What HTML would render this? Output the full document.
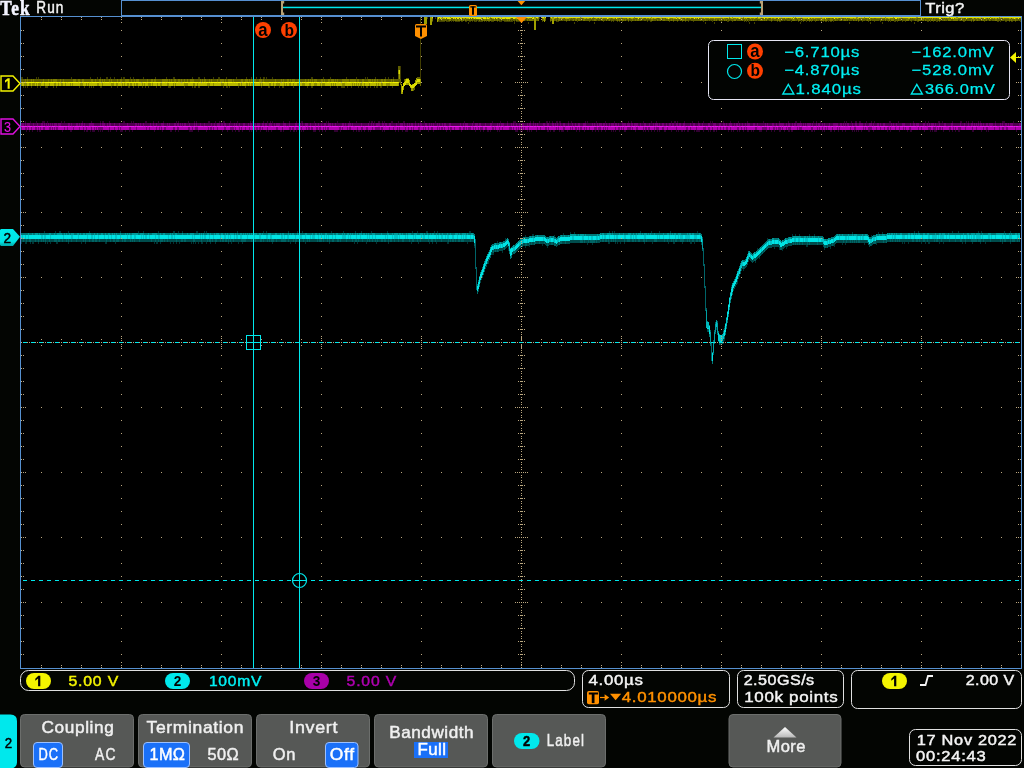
<!DOCTYPE html>
<html><head><meta charset="utf-8"><title>Tek</title>
<style>html,body{margin:0;padding:0;background:#030502;overflow:hidden}svg{display:block;will-change:transform}text{white-space:pre}</style>
</head><body>
<svg width="1024" height="768" viewBox="0 0 1024 768">
<rect width="1024" height="768" fill="#030502"/>
<rect x="21" y="17" width="1000" height="651" fill="#000"/>
<path d="M21 77v2M22 77v2M23 86v2M25 86v2M27 77v2M27 86v2M31 86v2M36 77v2M37 86v2M38 77v2M40 86v2M45 86v2M46 86v2M47 86v2M53 86v2M56 86v2M71 77v2M79 86v2M84 86v2M89 86v2M90 77v2M91 86v2M93 86v2M97 77v2M100 77v2M100 86v2M101 86v2M106 77v2M107 77v2M110 77v2M111 86v2M114 77v2M117 86v2M121 77v2M121 86v2M123 77v2M124 77v2M128 86v2M129 86v2M130 77v2M133 77v2M133 86v2M138 86v2M142 86v2M143 77v2M145 86v2M148 86v2M155 77v2M156 86v2M160 86v2M166 77v2M168 86v2M169 86v2M170 86v2M173 77v2M174 77v2M174 86v2M184 86v2M192 77v2M192 86v2M194 86v2M195 86v2M198 77v2M198 86v2M199 77v2M199 86v2M204 77v2M208 86v2M213 77v2M218 77v2M219 77v2M223 86v2M226 77v2M226 86v2M227 86v2M229 86v2M236 77v2M238 86v2M245 86v2M246 77v2M251 77v2M256 77v2M260 77v2M261 86v2M263 77v2M264 77v2M266 77v2M268 86v2M269 86v2M272 77v2M274 86v2M279 86v2M282 86v2M283 86v2M293 86v2M299 77v2M307 86v2M311 77v2M311 86v2M312 77v2M312 86v2M321 86v2M323 77v2M330 77v2M330 86v2M337 86v2M341 86v2M342 86v2M343 86v2M344 86v2M346 77v2M347 86v2M351 86v2M356 77v2M358 86v2M361 86v2M363 86v2M365 77v2M366 86v2M367 77v2M367 86v2M370 86v2M374 86v2M375 77v2M376 86v2M377 86v2M380 86v2M381 86v2M385 77v2M387 86v2M388 77v2M392 86v2M393 77v2" stroke="#3c3c00" stroke-opacity="1" stroke-width="1" fill="none" shape-rendering="crispEdges" transform="translate(0.5,0)"/><path d="M21 79v3M22 79v3M23 79v3M24 79v3M26 79v3M28 79v3M29 79v3M30 79v3M32 79v3M34 79v3M35 79v3M36 79v3M37 79v3M38 79v3M39 79v3M40 79v3M41 79v3M42 79v3M44 79v3M45 79v3M46 79v3M47 79v3M49 79v3M50 79v3M52 79v3M57 79v3M58 79v3M59 79v3M61 79v3M62 79v3M64 79v3M65 79v3M66 79v3M67 79v3M68 79v3M69 79v3M70 79v3M71 79v3M72 79v3M76 79v3M77 79v3M80 79v3M81 79v3M84 79v3M85 79v3M86 79v3M87 79v3M88 79v3M89 79v3M90 79v3M93 79v3M94 79v3M96 79v3M97 79v3M98 79v3M101 79v3M103 79v3M105 79v3M106 79v3M107 79v3M108 79v3M110 79v3M112 79v3M113 79v3M114 79v3M115 79v3M116 79v3M118 79v3M119 79v3M122 79v3M123 79v3M124 79v3M129 79v3M130 79v3M132 79v3M133 79v3M135 79v3M139 79v3M140 79v3M141 79v3M142 79v3M143 79v3M144 79v3M145 79v3M146 79v3M148 79v3M149 79v3M150 79v3M153 79v3M156 79v3M157 79v3M158 79v3M159 79v3M160 79v3M161 79v3M168 79v3M170 79v3M172 79v3M173 79v3M176 79v3M177 79v3M180 79v3M182 79v3M183 79v3M185 79v3M186 79v3M188 79v3M189 79v3M194 79v3M195 79v3M196 79v3M197 79v3M198 79v3M199 79v3M201 79v3M203 79v3M206 79v3M207 79v3M208 79v3M210 79v3M212 79v3M213 79v3M214 79v3M215 79v3M216 79v3M218 79v3M219 79v3M224 79v3M226 79v3M227 79v3M232 79v3M234 79v3M235 79v3M236 79v3M237 79v3M238 79v3M239 79v3M240 79v3M243 79v3M244 79v3M248 79v3M250 79v3M252 79v3M256 79v3M257 79v3M258 79v3M262 79v3M264 79v3M265 79v3M266 79v3M267 79v3M268 79v3M269 79v3M270 79v3M271 79v3M272 79v3M273 79v3M274 79v3M276 79v3M277 79v3M278 79v3M279 79v3M280 79v3M282 79v3M284 79v3M285 79v3M286 79v3M289 79v3M291 79v3M295 79v3M296 79v3M297 79v3M299 79v3M300 79v3M301 79v3M302 79v3M303 79v3M304 79v3M306 79v3M307 79v3M309 79v3M311 79v3M313 79v3M317 79v3M318 79v3M319 79v3M320 79v3M323 79v3M325 79v3M326 79v3M327 79v3M330 79v3M334 79v3M336 79v3M338 79v3M339 79v3M340 79v3M341 79v3M349 79v3M356 79v3M359 79v3M360 79v3M361 79v3M364 79v3M365 79v3M366 79v3M367 79v3M371 79v3M373 79v3M376 79v3M378 79v3M379 79v3M380 79v3M383 79v3M386 79v3M387 79v3M388 79v3M389 79v3M390 79v3M392 79v3M394 79v3M395 79v3M396 79v3M397 79v3" stroke="#606000" stroke-opacity="1" stroke-width="1" fill="none" shape-rendering="crispEdges" transform="translate(0.5,0)"/><path d="M25 79v3M27 79v3M31 79v3M33 79v3M43 79v3M48 79v3M51 79v3M53 79v3M54 79v3M55 79v3M56 79v3M60 79v3M63 79v3M73 79v3M74 79v3M75 79v3M78 79v3M79 79v3M82 79v3M83 79v3M91 79v3M92 79v3M95 79v3M99 79v3M100 79v3M102 79v3M104 79v3M109 79v3M111 79v3M117 79v3M120 79v3M121 79v3M125 79v3M126 79v3M127 79v3M128 79v3M131 79v3M134 79v3M136 79v3M137 79v3M138 79v3M147 79v3M151 79v3M152 79v3M154 79v3M155 79v3M162 79v3M163 79v3M164 79v3M165 79v3M166 79v3M167 79v3M169 79v3M171 79v3M174 79v3M175 79v3M178 79v3M179 79v3M181 79v3M184 79v3M187 79v3M190 79v3M191 79v3M192 79v3M193 79v3M200 79v3M202 79v3M204 79v3M205 79v3M209 79v3M211 79v3M217 79v3M220 79v3M221 79v3M222 79v3M223 79v3M225 79v3M228 79v3M229 79v3M230 79v3M231 79v3M233 79v3M241 79v3M242 79v3M245 79v3M246 79v3M247 79v3M249 79v3M251 79v3M253 79v3M254 79v3M255 79v3M259 79v3M260 79v3M261 79v3M263 79v3M275 79v3M281 79v3M283 79v3M287 79v3M288 79v3M290 79v3M292 79v3M293 79v3M294 79v3M298 79v3M305 79v3M308 79v3M310 79v3M312 79v3M314 79v3M315 79v3M316 79v3M321 79v3M322 79v3M324 79v3M328 79v3M329 79v3M331 79v3M332 79v3M333 79v3M335 79v3M337 79v3M342 79v3M343 79v3M344 79v3M345 79v3M346 79v3M347 79v3M348 79v3M350 79v3M351 79v3M352 79v3M353 79v3M354 79v3M355 79v3M357 79v3M358 79v3M362 79v3M363 79v3M368 79v3M369 79v3M370 79v3M372 79v3M374 79v3M375 79v3M377 79v3M381 79v3M382 79v3M384 79v3M385 79v3M391 79v3M393 79v3" stroke="#7c7c00" stroke-opacity="1" stroke-width="1" fill="none" shape-rendering="crispEdges" transform="translate(0.5,0)"/><path d="M22 83v3M23 83v3M27 83v3M28 83v3M31 83v3M35 83v3M37 83v3M41 83v3M42 83v3M43 83v3M45 83v3M46 83v3M47 83v3M48 83v3M50 83v3M51 83v3M52 83v3M53 83v3M56 83v3M57 83v3M59 83v3M60 83v3M63 83v3M64 83v3M66 83v3M67 83v3M68 83v3M69 83v3M71 83v3M73 83v3M74 83v3M75 83v3M76 83v3M77 83v3M78 83v3M79 83v3M83 83v3M84 83v3M85 83v3M87 83v3M89 83v3M90 83v3M91 83v3M92 83v3M93 83v3M94 83v3M95 83v3M96 83v3M99 83v3M100 83v3M101 83v3M103 83v3M104 83v3M105 83v3M106 83v3M107 83v3M108 83v3M109 83v3M110 83v3M114 83v3M115 83v3M118 83v3M119 83v3M120 83v3M121 83v3M123 83v3M125 83v3M126 83v3M129 83v3M132 83v3M133 83v3M135 83v3M138 83v3M139 83v3M140 83v3M141 83v3M143 83v3M145 83v3M146 83v3M147 83v3M151 83v3M153 83v3M154 83v3M155 83v3M156 83v3M158 83v3M159 83v3M162 83v3M163 83v3M164 83v3M165 83v3M166 83v3M169 83v3M170 83v3M171 83v3M172 83v3M174 83v3M176 83v3M177 83v3M178 83v3M179 83v3M180 83v3M181 83v3M182 83v3M183 83v3M188 83v3M189 83v3M190 83v3M191 83v3M192 83v3M195 83v3M196 83v3M198 83v3M199 83v3M200 83v3M201 83v3M202 83v3M203 83v3M204 83v3M205 83v3M206 83v3M210 83v3M211 83v3M212 83v3M214 83v3M215 83v3M216 83v3M217 83v3M218 83v3M219 83v3M220 83v3M224 83v3M225 83v3M226 83v3M228 83v3M229 83v3M230 83v3M231 83v3M232 83v3M233 83v3M234 83v3M235 83v3M236 83v3M237 83v3M240 83v3M242 83v3M243 83v3M244 83v3M245 83v3M248 83v3M250 83v3M253 83v3M255 83v3M256 83v3M257 83v3M258 83v3M259 83v3M261 83v3M263 83v3M264 83v3M265 83v3M266 83v3M267 83v3M268 83v3M271 83v3M272 83v3M274 83v3M275 83v3M280 83v3M281 83v3M282 83v3M283 83v3M285 83v3M287 83v3M288 83v3M291 83v3M292 83v3M294 83v3M295 83v3M296 83v3M299 83v3M300 83v3M301 83v3M305 83v3M306 83v3M307 83v3M308 83v3M311 83v3M312 83v3M313 83v3M317 83v3M318 83v3M319 83v3M321 83v3M325 83v3M326 83v3M327 83v3M328 83v3M329 83v3M330 83v3M332 83v3M334 83v3M336 83v3M337 83v3M338 83v3M339 83v3M340 83v3M341 83v3M345 83v3M346 83v3M347 83v3M348 83v3M349 83v3M350 83v3M351 83v3M353 83v3M355 83v3M357 83v3M359 83v3M362 83v3M363 83v3M365 83v3M366 83v3M367 83v3M368 83v3M370 83v3M371 83v3M372 83v3M373 83v3M374 83v3M375 83v3M377 83v3M379 83v3M380 83v3M383 83v3M384 83v3M385 83v3M390 83v3M391 83v3M392 83v3M393 83v3M394 83v3M395 83v3M396 83v3M397 83v3" stroke="#b8b800" stroke-opacity="1" stroke-width="1" fill="none" shape-rendering="crispEdges" transform="translate(0.5,0)"/><path d="M21 83v3M24 83v3M25 83v3M26 83v3M29 83v3M30 83v3M32 83v3M33 83v3M34 83v3M36 83v3M38 83v3M39 83v3M40 83v3M44 83v3M49 83v3M54 83v3M55 83v3M58 83v3M61 83v3M62 83v3M65 83v3M70 83v3M72 83v3M80 83v3M81 83v3M82 83v3M86 83v3M88 83v3M97 83v3M98 83v3M102 83v3M111 83v3M112 83v3M113 83v3M116 83v3M117 83v3M122 83v3M124 83v3M127 83v3M128 83v3M130 83v3M131 83v3M134 83v3M136 83v3M137 83v3M142 83v3M144 83v3M148 83v3M149 83v3M150 83v3M152 83v3M157 83v3M160 83v3M161 83v3M167 83v3M168 83v3M173 83v3M175 83v3M184 83v3M185 83v3M186 83v3M187 83v3M193 83v3M194 83v3M197 83v3M207 83v3M208 83v3M209 83v3M213 83v3M221 83v3M222 83v3M223 83v3M227 83v3M238 83v3M239 83v3M241 83v3M246 83v3M247 83v3M249 83v3M251 83v3M252 83v3M254 83v3M260 83v3M262 83v3M269 83v3M270 83v3M273 83v3M276 83v3M277 83v3M278 83v3M279 83v3M284 83v3M286 83v3M289 83v3M290 83v3M293 83v3M297 83v3M298 83v3M302 83v3M303 83v3M304 83v3M309 83v3M310 83v3M314 83v3M315 83v3M316 83v3M320 83v3M322 83v3M323 83v3M324 83v3M331 83v3M333 83v3M335 83v3M342 83v3M343 83v3M344 83v3M352 83v3M354 83v3M356 83v3M358 83v3M360 83v3M361 83v3M364 83v3M369 83v3M376 83v3M378 83v3M381 83v3M382 83v3M386 83v3M387 83v3M388 83v3M389 83v3" stroke="#909000" stroke-opacity="1" stroke-width="1" fill="none" shape-rendering="crispEdges" transform="translate(0.5,0)"/><path d="M34 82v1M35 82v1M39 82v1M44 82v1M55 82v1M58 82v1M60 82v1M65 82v1M67 82v1M78 82v1M81 82v1M83 82v1M89 82v1M91 82v1M99 82v1M101 82v1M102 82v1M104 82v1M109 82v1M110 82v1M113 82v1M116 82v1M118 82v1M124 82v1M125 82v1M142 82v1M146 82v1M148 82v1M149 82v1M152 82v1M165 82v1M167 82v1M174 82v1M176 82v1M178 82v1M179 82v1M180 82v1M181 82v1M182 82v1M184 82v1M188 82v1M189 82v1M198 82v1M203 82v1M205 82v1M208 82v1M210 82v1M217 82v1M224 82v1M227 82v1M232 82v1M233 82v1M235 82v1M243 82v1M246 82v1M249 82v1M250 82v1M252 82v1M255 82v1M259 82v1M260 82v1M261 82v1M262 82v1M265 82v1M266 82v1M267 82v1M268 82v1M271 82v1M273 82v1M277 82v1M280 82v1M281 82v1M283 82v1M284 82v1M288 82v1M290 82v1M294 82v1M299 82v1M303 82v1M305 82v1M306 82v1M311 82v1M313 82v1M315 82v1M319 82v1M325 82v1M326 82v1M329 82v1M337 82v1M338 82v1M344 82v1M345 82v1M346 82v1M351 82v1M352 82v1M353 82v1M356 82v1M357 82v1M359 82v1M361 82v1M362 82v1M368 82v1M372 82v1M373 82v1M375 82v1M376 82v1M377 82v1M378 82v1M379 82v1M389 82v1M391 82v1M392 82v1" stroke="#e0e000" stroke-opacity="1" stroke-width="1" fill="none" shape-rendering="crispEdges" transform="translate(0.5,0)"/><path d="M21 82v1M22 82v1M23 82v1M24 82v1M25 82v1M26 82v1M27 82v1M28 82v1M29 82v1M30 82v1M31 82v1M32 82v1M33 82v1M36 82v1M37 82v1M38 82v1M40 82v1M41 82v1M42 82v1M43 82v1M45 82v1M46 82v1M47 82v1M48 82v1M49 82v1M50 82v1M51 82v1M52 82v1M53 82v1M54 82v1M56 82v1M57 82v1M59 82v1M61 82v1M62 82v1M63 82v1M64 82v1M66 82v1M68 82v1M69 82v1M70 82v1M71 82v1M72 82v1M73 82v1M74 82v1M75 82v1M76 82v1M77 82v1M79 82v1M80 82v1M82 82v1M84 82v1M85 82v1M86 82v1M87 82v1M88 82v1M90 82v1M92 82v1M93 82v1M94 82v1M95 82v1M96 82v1M97 82v1M98 82v1M100 82v1M103 82v1M105 82v1M106 82v1M107 82v1M108 82v1M111 82v1M112 82v1M114 82v1M115 82v1M117 82v1M119 82v1M120 82v1M121 82v1M122 82v1M123 82v1M126 82v1M127 82v1M128 82v1M129 82v1M130 82v1M131 82v1M132 82v1M133 82v1M134 82v1M135 82v1M136 82v1M137 82v1M138 82v1M139 82v1M140 82v1M141 82v1M143 82v1M144 82v1M145 82v1M147 82v1M150 82v1M151 82v1M153 82v1M154 82v1M155 82v1M156 82v1M157 82v1M158 82v1M159 82v1M160 82v1M161 82v1M162 82v1M163 82v1M164 82v1M166 82v1M168 82v1M169 82v1M170 82v1M171 82v1M172 82v1M173 82v1M175 82v1M177 82v1M183 82v1M185 82v1M186 82v1M187 82v1M190 82v1M191 82v1M192 82v1M193 82v1M194 82v1M195 82v1M196 82v1M197 82v1M199 82v1M200 82v1M201 82v1M202 82v1M204 82v1M206 82v1M207 82v1M209 82v1M211 82v1M212 82v1M213 82v1M214 82v1M215 82v1M216 82v1M218 82v1M219 82v1M220 82v1M221 82v1M222 82v1M223 82v1M225 82v1M226 82v1M228 82v1M229 82v1M230 82v1M231 82v1M234 82v1M236 82v1M237 82v1M238 82v1M239 82v1M240 82v1M241 82v1M242 82v1M244 82v1M245 82v1M247 82v1M248 82v1M251 82v1M253 82v1M254 82v1M256 82v1M257 82v1M258 82v1M263 82v1M264 82v1M269 82v1M270 82v1M272 82v1M274 82v1M275 82v1M276 82v1M278 82v1M279 82v1M282 82v1M285 82v1M286 82v1M287 82v1M289 82v1M291 82v1M292 82v1M293 82v1M295 82v1M296 82v1M297 82v1M298 82v1M300 82v1M301 82v1M302 82v1M304 82v1M307 82v1M308 82v1M309 82v1M310 82v1M312 82v1M314 82v1M316 82v1M317 82v1M318 82v1M320 82v1M321 82v1M322 82v1M323 82v1M324 82v1M327 82v1M328 82v1M330 82v1M331 82v1M332 82v1M333 82v1M334 82v1M335 82v1M336 82v1M339 82v1M340 82v1M341 82v1M342 82v1M343 82v1M347 82v1M348 82v1M349 82v1M350 82v1M354 82v1M355 82v1M358 82v1M360 82v1M363 82v1M364 82v1M365 82v1M366 82v1M367 82v1M369 82v1M370 82v1M371 82v1M374 82v1M380 82v1M381 82v1M382 82v1M383 82v1M384 82v1M385 82v1M386 82v1M387 82v1M388 82v1M390 82v1M393 82v1M394 82v1M395 82v1M396 82v1M397 82v1" stroke="#f2f200" stroke-opacity="1" stroke-width="1" fill="none" shape-rendering="crispEdges" transform="translate(0.5,0)"/><path d="M398 66v4M398 74v8M399 66v4M399 79v4M400 79v6M404 79v3M406 78v1M407 78v1M408 78v1M413 88v3M414 87v3M417 77v2M418 77v2M419 77v2M420 83v3" stroke="#606000" stroke-opacity="1" stroke-width="1" fill="none" shape-rendering="crispEdges" transform="translate(0.5,0)"/><path d="M398 70v4M398 83v3M399 74v5M401 84v10M402 92v2M403 87v3M405 79v2M406 83v2M407 83v2M408 83v2M409 80v3M410 87v1M411 88v3M412 84v1M412 88v3M415 80v3M416 78v3M417 82v2M418 82v2M419 82v2M420 79v4" stroke="#9c9c00" stroke-opacity="1" stroke-width="1" fill="none" shape-rendering="crispEdges" transform="translate(0.5,0)"/><path d="M398 82v1M399 70v4M402 86v6M403 83v4M404 82v4M405 81v4M406 79v4M407 79v4M408 79v4M409 83v3M410 84v3M411 85v3M412 85v3M413 84v4M414 83v4M415 83v3M416 81v4M417 79v3M418 79v3M419 79v3" stroke="#dcdc00" stroke-opacity="1" stroke-width="1" fill="none" shape-rendering="crispEdges" transform="translate(0.5,0)"/><path d="M400 66v13M420 17v62" stroke="#403c00" stroke-opacity="1" stroke-width="1" fill="none" shape-rendering="crispEdges" transform="translate(0.5,0)"/><path d="M424 20v1M424 21v1M425 21v1M427 17v2M430 21v1M431 21v1M432 21v1M435 17v2M437 21v1M438 21v1M439 20v1M439 21v1M440 20v1M440 21v1M441 21v1M442 21v1M443 21v1M444 21v1M446 21v1M447 20v1M447 21v1M448 21v1M449 21v1M451 20v1M451 21v1M453 21v1M455 21v1M456 21v1M457 21v1M458 21v1M459 21v1M461 21v1M462 21v1M464 20v1M465 21v1M466 21v1M468 22v2M469 21v1M470 21v1M472 21v1M473 20v1M474 21v1M475 20v1M475 21v1M476 21v1M477 20v1M478 20v1M478 21v1M479 21v1M480 20v1M480 21v1M481 21v1M482 21v1M484 21v1M486 21v1M488 21v1M489 21v1M491 21v1M492 21v1M493 21v1M497 21v1M499 21v1M500 20v1M500 21v1M501 21v1M502 20v1M504 21v1M505 21v1M506 21v1M507 21v1M508 21v1M509 21v1M510 20v1M510 21v1M511 21v1M512 20v1M512 21v1M514 21v1M514 22v2M515 20v1M516 21v1M517 21v1M518 21v1M519 21v1M525 20v1M526 20v1M528 22v2M539 17v2M542 21v1M544 20v1M550 21v1M556 21v1M557 20v1M557 21v1M558 21v1M563 20v1M566 21v1M570 20v1M571 20v1M574 20v1M574 22v2M577 20v1M577 21v1M582 20v1M589 21v1M591 20v1M594 22v2M597 20v1M600 20v1M603 21v1M605 20v1M607 20v1M610 20v1M611 21v1M613 21v1M614 20v1M615 20v1M617 21v1M619 21v1M622 21v1M626 20v1M627 20v1M628 21v1M629 20v1M631 21v1M642 20v1M643 20v1M646 20v1M647 21v1M648 20v1M649 20v1M650 21v1M651 21v1M656 20v1M661 20v1M669 21v1M673 21v1M677 21v1M679 20v1M682 21v1M685 21v1M688 21v1M689 20v1M690 20v1M693 21v1M703 21v1M705 22v2M708 20v1M710 20v1M712 20v1M712 21v1M714 22v2M717 20v1M718 20v1M721 21v1M723 20v1M727 20v1M727 21v1M728 21v1M730 20v1M732 21v1M736 20v1M743 20v1M744 21v1M746 20v1M746 21v1M748 20v1M748 21v1M749 22v2M754 22v2M757 20v1M767 20v1M768 20v1M771 21v1M773 20v1M777 21v1M779 21v1M780 21v1M783 20v1M785 20v1M786 20v1M790 20v1M791 20v1M791 21v1M797 20v1M798 21v1M800 22v2M801 20v1M801 21v1M803 21v1M806 20v1M806 21v1M809 21v1M811 21v1M813 20v1M815 21v1M819 20v1M821 21v1M823 21v1M825 21v1M826 21v1M828 20v1M828 21v1M830 21v1M831 21v1M833 20v1M833 21v1M838 20v1M842 20v1M848 20v1M849 22v2M852 20v1M857 20v1M858 21v1M860 20v1M862 21v1M865 20v1M868 21v1M870 22v2M871 20v1M874 21v1M879 20v1M880 21v1M882 22v2M884 20v1M886 20v1M888 21v1M890 20v1M890 21v1M894 20v1M894 21v1M895 21v1M897 21v1M901 20v1M902 21v1M905 21v1M909 20v1M911 21v1M912 20v1M913 20v1M914 22v2M917 21v1M918 21v1M924 20v1M927 21v1M928 21v1M930 20v1M930 21v1M933 21v1M936 20v1M936 21v1M937 21v1M939 21v1M941 20v1M947 20v1M958 20v1M963 21v1M964 21v1M966 20v1M971 21v1M972 20v1M973 21v1M975 20v1M980 20v1M984 21v1M987 20v1M988 20v1M991 20v1M997 21v1M998 21v1M1000 20v1M1000 21v1M1004 20v1M1005 21v1M1006 21v1M1009 21v1M1011 21v1M1012 21v1M1015 21v1M1018 20v1M1020 20v1M1020 21v1" stroke="#404000" stroke-opacity="1" stroke-width="1" fill="none" shape-rendering="crispEdges" transform="translate(0.5,0)"/><path d="M424 19v1M426 19v2M430 19v2M431 19v2M439 18v1M439 19v1M440 19v1M441 19v2M442 19v2M443 19v2M444 19v2M445 19v2M446 18v1M446 19v2M447 19v1M448 19v2M451 18v1M451 19v1M452 18v1M452 19v2M453 19v2M454 19v2M456 18v1M457 19v2M459 18v1M460 19v2M462 18v1M462 19v2M464 19v1M465 18v1M466 19v2M467 19v2M468 19v2M469 19v2M470 18v1M470 19v2M471 19v2M472 18v1M472 19v2M473 19v1M474 19v2M475 19v1M476 19v2M477 19v1M478 19v1M480 19v1M481 19v2M482 18v1M483 19v2M486 19v2M490 18v1M491 18v1M491 19v2M492 19v2M493 19v2M495 18v1M495 19v2M496 19v2M498 18v1M498 19v2M499 19v2M500 19v1M501 19v2M502 19v1M503 19v2M504 19v2M505 19v2M506 19v2M508 19v2M510 19v1M511 18v1M511 19v2M512 18v1M512 19v1M513 19v2M514 19v2M515 19v1M517 19v2M518 19v2M519 18v1M519 19v2M520 18v1M520 19v2M521 19v2M523 19v2M524 18v1M525 18v1M525 19v1M526 18v1M526 19v1M528 19v2M531 18v1M533 19v2M534 18v1M535 18v1M536 18v1M536 19v2M537 19v2M542 19v2M544 19v1M545 19v2M550 18v1M551 19v2M552 19v2M553 18v1M554 19v2M555 19v2M557 18v1M557 19v1M560 19v2M561 19v2M562 19v2M563 19v1M564 18v1M564 19v2M565 19v2M567 19v2M568 19v2M570 19v1M571 18v1M571 19v1M572 19v2M573 18v1M574 18v1M574 19v1M577 19v1M580 19v2M581 18v1M581 19v2M582 18v1M582 19v1M585 19v2M586 19v2M587 19v2M588 19v2M589 19v2M590 18v1M590 19v2M591 19v1M592 18v1M592 19v2M593 18v1M593 19v2M594 18v1M596 19v2M597 19v1M598 18v1M598 19v2M599 19v2M600 19v1M601 18v1M601 19v2M603 19v2M604 19v2M605 19v1M607 19v1M608 19v2M610 19v1M611 18v1M611 19v2M612 19v2M613 19v2M614 19v1M615 18v1M615 19v1M616 19v2M618 19v2M619 18v1M620 19v2M621 18v1M622 18v1M624 19v2M626 18v1M626 19v1M627 19v1M629 18v1M629 19v1M630 19v2M631 19v2M633 19v2M634 19v2M635 18v1M636 18v1M636 19v2M639 18v1M639 19v2M641 19v2M642 19v1M643 19v1M644 18v1M644 19v2M645 18v1M645 19v2M646 19v1M647 19v2M648 19v1M649 19v1M650 19v2M653 19v2M654 19v2M655 19v2M656 19v1M657 18v1M658 18v1M658 19v2M659 19v2M661 19v1M662 18v1M662 19v2M665 18v1M665 19v2M666 19v2M667 19v2M669 19v2M670 19v2M672 19v2M674 19v2M675 19v2M676 19v2M678 19v2M679 19v1M681 19v2M683 18v1M684 18v1M684 19v2M686 19v2M687 18v1M687 19v2M688 19v2M689 19v1M690 19v1M691 18v1M691 19v2M692 18v1M692 19v2M693 19v2M694 19v2M695 19v2M696 19v2M697 18v1M697 19v2M698 19v2M699 18v1M699 19v2M701 19v2M702 19v2M703 19v2M704 19v2M706 19v2M707 19v2M708 19v1M709 19v2M710 19v1M711 19v2M712 19v1M713 19v2M715 19v2M717 19v1M718 19v1M720 19v2M721 19v2M722 19v2M723 19v1M725 19v2M726 18v1M727 18v1M727 19v1M728 19v2M729 18v1M729 19v2M730 19v1M731 19v2M732 19v2M733 19v2M736 19v1M737 19v2M738 19v2M739 19v2M740 19v2M741 19v2M743 18v1M743 19v1M744 19v2M746 19v1M747 18v1M748 18v1M748 19v1M749 19v2M750 19v2M752 19v2M754 19v2M755 19v2M756 18v1M756 19v2M757 19v1M758 19v2M759 19v2M761 18v1M762 18v1M763 19v2M765 18v1M765 19v2M767 19v1M768 19v1M769 18v1M769 19v2M770 18v1M770 19v2M772 19v2M773 19v1M774 19v2M775 19v2M776 18v1M776 19v2M777 18v1M778 19v2M780 19v2M781 19v2M782 19v2M783 19v1M784 18v1M784 19v2M785 19v1M786 19v1M787 19v2M788 18v1M788 19v2M789 19v2M790 19v1M791 19v1M795 18v1M795 19v2M796 18v1M796 19v2M797 19v1M800 18v1M800 19v2M801 18v1M801 19v1M802 19v2M805 19v2M806 19v1M808 19v2M810 18v1M811 19v2M813 19v1M814 19v2M815 19v2M817 19v2M818 19v2M819 19v1M824 19v2M826 18v1M827 19v2M828 18v1M828 19v1M829 18v1M829 19v2M832 18v1M833 19v1M834 19v2M836 19v2M837 19v2M838 19v1M839 18v1M839 19v2M842 18v1M842 19v1M843 18v1M843 19v2M845 18v1M846 19v2M847 18v1M848 19v1M849 19v2M850 19v2M851 19v2M852 19v1M854 19v2M855 19v2M857 19v1M859 18v1M859 19v2M860 19v1M861 19v2M862 19v2M863 19v2M864 19v2M865 18v1M865 19v1M866 18v1M866 19v2M868 18v1M868 19v2M869 19v2M871 18v1M871 19v1M872 19v2M873 19v2M874 18v1M874 19v2M875 18v1M875 19v2M876 19v2M877 19v2M878 19v2M879 19v1M880 18v1M880 19v2M882 19v2M883 19v2M884 18v1M884 19v1M886 19v1M887 19v2M888 19v2M890 19v1M894 18v1M894 19v1M895 19v2M896 19v2M897 19v2M899 19v2M900 19v2M901 18v1M901 19v1M902 18v1M902 19v2M903 19v2M904 19v2M905 19v2M909 19v1M910 18v1M910 19v2M911 19v2M912 18v1M912 19v1M913 19v1M914 19v2M916 19v2M917 18v1M917 19v2M918 18v1M919 18v1M920 18v1M921 19v2M922 18v1M924 18v1M924 19v1M925 18v1M926 19v2M927 19v2M928 19v2M929 18v1M930 19v1M931 18v1M933 18v1M933 19v2M935 19v2M936 18v1M936 19v1M937 19v2M938 19v2M940 19v2M941 18v1M941 19v1M942 18v1M942 19v2M943 19v2M944 18v1M945 19v2M946 18v1M946 19v2M947 19v1M950 18v1M951 19v2M952 19v2M958 19v1M959 19v2M960 18v1M961 19v2M962 19v2M964 18v1M964 19v2M965 18v1M966 19v1M967 19v2M968 19v2M969 18v1M969 19v2M970 18v1M970 19v2M971 18v1M972 19v1M974 18v1M975 19v1M976 19v2M978 19v2M979 19v2M980 19v1M981 18v1M982 19v2M984 19v2M985 19v2M987 18v1M987 19v1M988 19v1M989 18v1M990 19v2M991 19v1M992 19v2M993 19v2M994 19v2M997 18v1M997 19v2M998 19v2M999 19v2M1000 19v1M1001 18v1M1001 19v2M1002 18v1M1002 19v2M1003 19v2M1004 19v1M1005 19v2M1006 19v2M1007 19v2M1008 19v2M1010 19v2M1011 18v1M1012 19v2M1013 19v2M1014 19v2M1016 19v2M1017 19v2M1018 19v1M1019 18v1M1019 19v2M1020 19v1" stroke="#606000" stroke-opacity="1" stroke-width="1" fill="none" shape-rendering="crispEdges" transform="translate(0.5,0)"/><path d="M425 19v2M432 19v2M437 19v2M438 19v2M449 19v2M450 19v2M455 19v2M456 19v2M458 19v2M459 19v2M461 19v2M463 19v2M465 19v2M479 19v2M482 19v2M484 19v2M485 19v2M487 19v2M488 19v2M489 19v2M490 19v2M494 19v2M497 19v2M507 19v2M509 19v2M516 19v2M521 18v1M522 18v1M522 19v2M523 18v1M524 19v2M527 18v1M527 19v2M529 18v1M529 19v2M530 18v1M530 19v2M531 19v2M532 19v2M534 19v2M535 19v2M538 18v1M538 19v2M542 18v1M543 19v2M545 18v1M550 19v2M552 18v1M553 19v2M555 18v1M556 18v1M556 19v2M558 18v1M558 19v2M559 19v2M560 18v1M563 18v1M566 19v2M569 18v1M569 19v2M570 18v1M572 18v1M573 19v2M575 18v1M575 19v2M576 19v2M577 18v1M578 18v1M578 19v2M579 18v1M579 19v2M580 18v1M583 18v1M583 19v2M584 19v2M586 18v1M589 18v1M594 19v2M595 18v1M595 19v2M597 18v1M600 18v1M602 19v2M603 18v1M604 18v1M605 18v1M606 18v1M606 19v2M609 18v1M609 19v2M610 18v1M612 18v1M617 18v1M617 19v2M618 18v1M619 19v2M620 18v1M621 19v2M622 19v2M623 18v1M623 19v2M624 18v1M625 18v1M625 19v2M628 19v2M630 18v1M632 19v2M633 18v1M634 18v1M635 19v2M637 18v1M637 19v2M638 19v2M640 18v1M640 19v2M641 18v1M643 18v1M647 18v1M648 18v1M650 18v1M651 19v2M652 19v2M653 18v1M656 18v1M657 19v2M659 18v1M660 19v2M663 18v1M663 19v2M664 18v1M664 19v2M668 19v2M670 18v1M671 18v1M671 19v2M672 18v1M673 19v2M677 18v1M677 19v2M680 19v2M681 18v1M682 18v1M682 19v2M683 19v2M685 19v2M686 18v1M688 18v1M689 18v1M693 18v1M695 18v1M700 18v1M700 19v2M701 18v1M702 18v1M703 18v1M705 18v1M705 19v2M706 18v1M707 18v1M708 18v1M710 18v1M711 18v1M712 18v1M713 18v1M714 19v2M715 18v1M716 18v1M716 19v2M717 18v1M718 18v1M719 18v1M719 19v2M720 18v1M721 18v1M722 18v1M724 18v1M724 19v2M725 18v1M726 19v2M730 18v1M733 18v1M734 18v1M734 19v2M735 18v1M735 19v2M737 18v1M741 18v1M742 18v1M742 19v2M745 18v1M745 19v2M747 19v2M749 18v1M751 18v1M751 19v2M752 18v1M753 18v1M753 19v2M755 18v1M757 18v1M760 18v1M760 19v2M761 19v2M762 19v2M763 18v1M764 19v2M766 18v1M766 19v2M768 18v1M771 19v2M772 18v1M773 18v1M777 19v2M779 18v1M779 19v2M780 18v1M781 18v1M782 18v1M783 18v1M786 18v1M787 18v1M789 18v1M790 18v1M792 18v1M792 19v2M793 19v2M794 18v1M794 19v2M798 18v1M798 19v2M799 18v1M799 19v2M802 18v1M803 19v2M804 19v2M807 18v1M807 19v2M809 19v2M810 19v2M812 18v1M812 19v2M813 18v1M815 18v1M816 18v1M816 19v2M817 18v1M818 18v1M819 18v1M820 18v1M820 19v2M821 18v1M821 19v2M822 19v2M823 19v2M824 18v1M825 19v2M826 19v2M827 18v1M830 18v1M830 19v2M831 18v1M831 19v2M832 19v2M833 18v1M835 18v1M835 19v2M836 18v1M838 18v1M840 18v1M840 19v2M841 18v1M841 19v2M844 18v1M844 19v2M845 19v2M847 19v2M848 18v1M849 18v1M853 18v1M853 19v2M856 18v1M856 19v2M858 19v2M860 18v1M861 18v1M862 18v1M863 18v1M864 18v1M867 18v1M867 19v2M870 18v1M870 19v2M872 18v1M873 18v1M876 18v1M877 18v1M878 18v1M879 18v1M881 18v1M881 19v2M882 18v1M883 18v1M885 19v2M886 18v1M887 18v1M889 19v2M890 18v1M891 18v1M891 19v2M892 18v1M892 19v2M893 18v1M893 19v2M897 18v1M898 19v2M899 18v1M900 18v1M903 18v1M904 18v1M905 18v1M906 18v1M906 19v2M907 18v1M907 19v2M908 19v2M911 18v1M913 18v1M914 18v1M915 18v1M915 19v2M916 18v1M918 19v2M919 19v2M920 19v2M922 19v2M923 19v2M925 19v2M926 18v1M927 18v1M928 18v1M929 19v2M930 18v1M931 19v2M932 19v2M934 18v1M934 19v2M935 18v1M937 18v1M938 18v1M939 19v2M943 18v1M944 19v2M945 18v1M947 18v1M948 18v1M948 19v2M949 18v1M949 19v2M950 19v2M953 19v2M954 18v1M954 19v2M955 19v2M956 19v2M957 19v2M958 18v1M959 18v1M960 19v2M962 18v1M963 18v1M963 19v2M965 19v2M967 18v1M968 18v1M971 19v2M973 19v2M974 19v2M975 18v1M977 18v1M977 19v2M978 18v1M981 19v2M982 18v1M983 18v1M983 19v2M986 18v1M986 19v2M989 19v2M991 18v1M992 18v1M994 18v1M995 19v2M996 19v2M999 18v1M1000 18v1M1004 18v1M1005 18v1M1006 18v1M1007 18v1M1008 18v1M1009 19v2M1011 19v2M1015 19v2M1016 18v1M1017 18v1M1020 18v1" stroke="#787800" stroke-opacity="1" stroke-width="1" fill="none" shape-rendering="crispEdges" transform="translate(0.5,0)"/><path d="M424 18v1M430 18v1M432 18v1M437 17v1M437 18v1M441 18v1M442 17v1M442 18v1M443 18v1M444 18v1M450 17v1M454 18v1M461 17v1M463 18v1M464 18v1M466 18v1M467 18v1M468 18v1M473 18v1M475 18v1M481 18v1M486 17v1M486 18v1M488 17v1M489 18v1M490 17v1M492 18v1M493 18v1M497 18v1M499 18v1M501 18v1M505 18v1M510 18v1M515 18v1M516 18v1M519 17v1M528 18v1M532 17v1M537 18v1M538 17v1M543 18v1M550 17v1M551 18v1M554 18v1M557 17v1M559 18v1M561 18v1M562 18v1M565 18v1M566 18v1M567 18v1M568 18v1M576 18v1M580 17v1M584 18v1M585 18v1M587 18v1M588 18v1M591 18v1M593 17v1M596 18v1M599 18v1M602 18v1M608 18v1M613 18v1M614 18v1M627 18v1M628 18v1M631 18v1M632 18v1M634 17v1M642 18v1M646 18v1M649 18v1M651 17v1M651 18v1M652 18v1M654 18v1M655 18v1M660 18v1M661 18v1M666 18v1M667 18v1M669 18v1M673 18v1M674 18v1M675 18v1M676 17v1M678 18v1M680 18v1M681 17v1M685 18v1M690 18v1M696 18v1M704 18v1M709 18v1M714 18v1M723 18v1M728 18v1M729 17v1M731 18v1M732 17v1M732 18v1M736 18v1M738 18v1M740 18v1M743 17v1M744 18v1M746 18v1M750 18v1M754 18v1M757 17v1M758 18v1M759 18v1M767 18v1M771 18v1M774 18v1M775 18v1M785 18v1M791 18v1M793 17v1M795 17v1M797 18v1M803 18v1M804 18v1M805 18v1M806 18v1M809 18v1M811 18v1M814 18v1M822 18v1M823 18v1M837 18v1M846 18v1M850 18v1M851 18v1M852 18v1M854 18v1M855 18v1M856 17v1M857 17v1M857 18v1M858 18v1M864 17v1M869 17v1M885 17v1M885 18v1M888 18v1M889 18v1M893 17v1M898 18v1M908 18v1M909 18v1M916 17v1M917 17v1M923 18v1M932 18v1M949 17v1M952 18v1M955 18v1M956 17v1M956 18v1M957 17v1M957 18v1M961 18v1M972 18v1M973 18v1M976 18v1M979 18v1M980 18v1M985 18v1M988 18v1M990 17v1M993 18v1M995 18v1M996 18v1M998 18v1M999 17v1M1003 18v1M1009 18v1M1010 18v1M1012 18v1M1013 18v1M1015 18v1" stroke="#a4a400" stroke-opacity="1" stroke-width="1" fill="none" shape-rendering="crispEdges" transform="translate(0.5,0)"/><path d="M424 17v1M425 17v1M425 18v1M426 17v1M426 18v1M430 17v1M431 17v1M431 18v1M432 17v1M438 17v1M438 18v1M439 17v1M440 17v1M440 18v1M441 17v1M443 17v1M444 17v1M445 17v1M445 18v1M446 17v1M447 17v1M447 18v1M448 17v1M448 18v1M449 17v1M449 18v1M450 18v1M451 17v1M452 17v1M453 17v1M453 18v1M454 17v1M455 17v1M455 18v1M456 17v1M457 17v1M457 18v1M458 17v1M458 18v1M459 17v1M460 17v1M460 18v1M461 18v1M462 17v1M463 17v1M464 17v1M465 17v1M466 17v1M467 17v1M468 17v1M469 17v1M469 18v1M470 17v1M471 17v1M471 18v1M472 17v1M473 17v1M474 17v1M474 18v1M475 17v1M476 17v1M476 18v1M477 17v1M477 18v1M478 17v1M478 18v1M479 17v1M479 18v1M480 17v1M480 18v1M481 17v1M482 17v1M483 17v1M483 18v1M484 17v1M484 18v1M485 17v1M485 18v1M487 17v1M487 18v1M488 18v1M489 17v1M491 17v1M492 17v1M493 17v1M494 17v1M494 18v1M495 17v1M496 17v1M496 18v1M497 17v1M498 17v1M499 17v1M500 17v1M500 18v1M501 17v1M502 17v1M502 18v1M503 17v1M503 18v1M504 17v1M504 18v1M505 17v1M506 17v1M506 18v1M507 17v1M507 18v1M508 17v1M508 18v1M509 17v1M509 18v1M510 17v1M511 17v1M512 17v1M513 17v1M513 18v1M514 17v1M514 18v1M515 17v1M516 17v1M517 17v1M517 18v1M518 17v1M518 18v1M520 17v1M521 17v1M522 17v1M523 17v1M524 17v1M525 17v1M526 17v1M527 17v1M528 17v1M529 17v1M530 17v1M531 17v1M532 18v1M533 17v1M533 18v1M534 17v1M535 17v1M536 17v1M537 17v1M542 17v1M543 17v1M544 17v1M544 18v1M545 17v1M551 17v1M552 17v1M553 17v1M554 17v1M555 17v1M556 17v1M558 17v1M559 17v1M560 17v1M561 17v1M562 17v1M563 17v1M564 17v1M565 17v1M566 17v1M567 17v1M568 17v1M569 17v1M570 17v1M571 17v1M572 17v1M573 17v1M574 17v1M575 17v1M576 17v1M577 17v1M578 17v1M579 17v1M581 17v1M582 17v1M583 17v1M584 17v1M585 17v1M586 17v1M587 17v1M588 17v1M589 17v1M590 17v1M591 17v1M592 17v1M594 17v1M595 17v1M596 17v1M597 17v1M598 17v1M599 17v1M600 17v1M601 17v1M602 17v1M603 17v1M604 17v1M605 17v1M606 17v1M607 17v1M607 18v1M608 17v1M609 17v1M610 17v1M611 17v1M612 17v1M613 17v1M614 17v1M615 17v1M616 17v1M616 18v1M617 17v1M618 17v1M619 17v1M620 17v1M621 17v1M622 17v1M623 17v1M624 17v1M625 17v1M626 17v1M627 17v1M628 17v1M629 17v1M630 17v1M631 17v1M632 17v1M633 17v1M635 17v1M636 17v1M637 17v1M638 17v1M638 18v1M639 17v1M640 17v1M641 17v1M642 17v1M643 17v1M644 17v1M645 17v1M646 17v1M647 17v1M648 17v1M649 17v1M650 17v1M652 17v1M653 17v1M654 17v1M655 17v1M656 17v1M657 17v1M658 17v1M659 17v1M660 17v1M661 17v1M662 17v1M663 17v1M664 17v1M665 17v1M666 17v1M667 17v1M668 17v1M668 18v1M669 17v1M670 17v1M671 17v1M672 17v1M673 17v1M674 17v1M675 17v1M676 18v1M677 17v1M678 17v1M679 17v1M679 18v1M680 17v1M682 17v1M683 17v1M684 17v1M685 17v1M686 17v1M687 17v1M688 17v1M689 17v1M690 17v1M691 17v1M692 17v1M693 17v1M694 17v1M694 18v1M695 17v1M696 17v1M697 17v1M698 17v1M698 18v1M699 17v1M700 17v1M701 17v1M702 17v1M703 17v1M704 17v1M705 17v1M706 17v1M707 17v1M708 17v1M709 17v1M710 17v1M711 17v1M712 17v1M713 17v1M714 17v1M715 17v1M716 17v1M717 17v1M718 17v1M719 17v1M720 17v1M721 17v1M722 17v1M723 17v1M724 17v1M725 17v1M726 17v1M727 17v1M728 17v1M730 17v1M731 17v1M733 17v1M734 17v1M735 17v1M736 17v1M737 17v1M738 17v1M739 17v1M739 18v1M740 17v1M741 17v1M742 17v1M744 17v1M745 17v1M746 17v1M747 17v1M748 17v1M749 17v1M750 17v1M751 17v1M752 17v1M753 17v1M754 17v1M755 17v1M756 17v1M758 17v1M759 17v1M760 17v1M761 17v1M762 17v1M763 17v1M764 17v1M764 18v1M765 17v1M766 17v1M767 17v1M768 17v1M769 17v1M770 17v1M771 17v1M772 17v1M773 17v1M774 17v1M775 17v1M776 17v1M777 17v1M778 17v1M778 18v1M779 17v1M780 17v1M781 17v1M782 17v1M783 17v1M784 17v1M785 17v1M786 17v1M787 17v1M788 17v1M789 17v1M790 17v1M791 17v1M792 17v1M793 18v1M794 17v1M796 17v1M797 17v1M798 17v1M799 17v1M800 17v1M801 17v1M802 17v1M803 17v1M804 17v1M805 17v1M806 17v1M807 17v1M808 17v1M808 18v1M809 17v1M810 17v1M811 17v1M812 17v1M813 17v1M814 17v1M815 17v1M816 17v1M817 17v1M818 17v1M819 17v1M820 17v1M821 17v1M822 17v1M823 17v1M824 17v1M825 17v1M825 18v1M826 17v1M827 17v1M828 17v1M829 17v1M830 17v1M831 17v1M832 17v1M833 17v1M834 17v1M834 18v1M835 17v1M836 17v1M837 17v1M838 17v1M839 17v1M840 17v1M841 17v1M842 17v1M843 17v1M844 17v1M845 17v1M846 17v1M847 17v1M848 17v1M849 17v1M850 17v1M851 17v1M852 17v1M853 17v1M854 17v1M855 17v1M858 17v1M859 17v1M860 17v1M861 17v1M862 17v1M863 17v1M865 17v1M866 17v1M867 17v1M868 17v1M869 18v1M870 17v1M871 17v1M872 17v1M873 17v1M874 17v1M875 17v1M876 17v1M877 17v1M878 17v1M879 17v1M880 17v1M881 17v1M882 17v1M883 17v1M884 17v1M886 17v1M887 17v1M888 17v1M889 17v1M890 17v1M891 17v1M892 17v1M894 17v1M895 17v1M895 18v1M896 17v1M896 18v1M897 17v1M898 17v1M899 17v1M900 17v1M901 17v1M902 17v1M903 17v1M904 17v1M905 17v1M906 17v1M907 17v1M908 17v1M909 17v1M910 17v1M911 17v1M912 17v1M913 17v1M914 17v1M915 17v1M918 17v1M919 17v1M920 17v1M921 17v1M921 18v1M922 17v1M923 17v1M924 17v1M925 17v1M926 17v1M927 17v1M928 17v1M929 17v1M930 17v1M931 17v1M932 17v1M933 17v1M934 17v1M935 17v1M936 17v1M937 17v1M938 17v1M939 17v1M939 18v1M940 17v1M940 18v1M941 17v1M942 17v1M943 17v1M944 17v1M945 17v1M946 17v1M947 17v1M948 17v1M950 17v1M951 17v1M951 18v1M952 17v1M953 17v1M953 18v1M954 17v1M955 17v1M958 17v1M959 17v1M960 17v1M961 17v1M962 17v1M963 17v1M964 17v1M965 17v1M966 17v1M966 18v1M967 17v1M968 17v1M969 17v1M970 17v1M971 17v1M972 17v1M973 17v1M974 17v1M975 17v1M976 17v1M977 17v1M978 17v1M979 17v1M980 17v1M981 17v1M982 17v1M983 17v1M984 17v1M984 18v1M985 17v1M986 17v1M987 17v1M988 17v1M989 17v1M990 18v1M991 17v1M992 17v1M993 17v1M994 17v1M995 17v1M996 17v1M997 17v1M998 17v1M1000 17v1M1001 17v1M1002 17v1M1003 17v1M1004 17v1M1005 17v1M1006 17v1M1007 17v1M1008 17v1M1009 17v1M1010 17v1M1011 17v1M1012 17v1M1013 17v1M1014 17v1M1014 18v1M1015 17v1M1016 17v1M1017 17v1M1018 17v1M1018 18v1M1019 17v1M1020 17v1" stroke="#e4e400" stroke-opacity="1" stroke-width="1" fill="none" shape-rendering="crispEdges" transform="translate(0.5,0)"/><rect x="424" y="17" width="3" height="7" fill="#a0a000"/><rect x="430" y="17" width="2" height="8" fill="#a0a000"/><rect x="534" y="17" width="2" height="13" fill="#a0a000"/><rect x="552" y="17" width="2" height="7" fill="#a0a000"/><rect x="544" y="17" width="1" height="5" fill="#a0a000"/><rect x="437" y="17" width="1" height="5" fill="#a0a000"/>
<path d="M25 121v2M26 130v2M29 130v2M30 121v2M32 130v2M36 121v2M37 130v2M39 130v2M40 130v2M42 121v2M43 121v2M44 121v2M47 121v2M61 121v2M62 130v2M64 121v2M70 130v2M71 130v2M82 121v2M84 130v2M86 130v2M87 130v2M90 130v2M91 121v2M92 130v2M93 130v2M94 130v2M98 130v2M100 121v2M100 130v2M102 121v2M102 130v2M103 121v2M108 130v2M109 121v2M110 130v2M116 130v2M120 130v2M121 130v2M122 130v2M123 121v2M124 121v2M125 130v2M129 130v2M131 121v2M132 130v2M133 121v2M145 121v2M146 121v2M153 121v2M154 130v2M158 121v2M162 130v2M163 121v2M170 130v2M171 130v2M175 130v2M176 121v2M178 121v2M178 130v2M188 121v2M189 130v2M190 130v2M191 130v2M192 130v2M194 121v2M196 121v2M198 130v2M206 130v2M208 121v2M209 121v2M215 121v2M219 121v2M221 121v2M222 130v2M223 121v2M224 121v2M227 130v2M230 121v2M232 130v2M235 130v2M237 121v2M238 130v2M239 130v2M242 130v2M249 130v2M250 121v2M251 130v2M252 121v2M256 130v2M260 130v2M263 121v2M266 130v2M267 121v2M268 130v2M270 121v2M271 130v2M272 121v2M280 130v2M281 130v2M283 121v2M283 130v2M289 121v2M290 130v2M293 130v2M294 130v2M296 121v2M296 130v2M299 121v2M301 121v2M301 130v2M302 121v2M303 130v2M313 130v2M314 121v2M314 130v2M315 130v2M319 130v2M322 121v2M322 130v2M325 130v2M326 121v2M328 121v2M334 130v2M335 130v2M336 130v2M337 121v2M337 130v2M340 130v2M349 121v2M353 130v2M356 121v2M356 130v2M358 130v2M359 130v2M361 130v2M364 130v2M368 130v2M369 121v2M370 130v2M371 121v2M372 121v2M374 121v2M378 121v2M379 121v2M382 121v2M382 130v2M384 121v2M384 130v2M391 121v2M392 121v2M395 130v2M398 121v2M398 130v2M402 130v2M403 121v2M404 121v2M405 130v2M406 130v2M407 130v2M412 130v2M415 121v2M419 130v2M420 121v2M420 130v2M424 121v2M428 130v2M433 130v2M435 121v2M446 130v2M450 130v2M461 130v2M464 121v2M473 121v2M475 130v2M480 130v2M483 130v2M487 130v2M488 130v2M490 130v2M492 121v2M497 130v2M499 130v2M500 121v2M507 121v2M513 121v2M514 121v2M515 121v2M515 130v2M516 130v2M517 130v2M520 130v2M522 130v2M527 130v2M529 130v2M530 121v2M531 130v2M533 121v2M536 130v2M539 121v2M546 121v2M547 121v2M547 130v2M548 130v2M549 121v2M550 130v2M552 121v2M553 130v2M554 130v2M556 121v2M557 121v2M559 121v2M559 130v2M560 121v2M561 130v2M562 130v2M563 130v2M567 130v2M568 121v2M571 121v2M576 130v2M579 130v2M584 130v2M585 121v2M587 121v2M592 130v2M595 130v2M596 121v2M598 130v2M601 130v2M605 121v2M605 130v2M611 130v2M613 130v2M614 121v2M615 130v2M619 130v2M621 121v2M622 121v2M624 130v2M625 130v2M628 121v2M631 121v2M635 130v2M643 121v2M643 130v2M645 130v2M648 130v2M651 121v2M651 130v2M654 130v2M656 121v2M657 130v2M659 130v2M664 130v2M665 130v2M671 121v2M671 130v2M674 121v2M675 121v2M676 130v2M677 121v2M678 130v2M681 130v2M682 130v2M684 121v2M684 130v2M687 130v2M688 130v2M692 121v2M694 130v2M696 130v2M697 130v2M698 121v2M698 130v2M699 130v2M703 121v2M703 130v2M708 130v2M710 121v2M710 130v2M712 121v2M713 130v2M714 130v2M716 130v2M721 121v2M723 121v2M728 130v2M730 121v2M731 130v2M733 130v2M737 130v2M738 121v2M739 130v2M743 130v2M747 121v2M747 130v2M748 130v2M751 130v2M753 130v2M759 130v2M760 130v2M761 130v2M763 121v2M766 130v2M771 130v2M774 130v2M779 121v2M779 130v2M780 130v2M784 130v2M788 121v2M788 130v2M789 130v2M791 130v2M792 130v2M795 121v2M796 121v2M800 121v2M804 130v2M808 130v2M811 130v2M812 130v2M813 121v2M814 130v2M816 121v2M820 121v2M822 130v2M824 130v2M830 130v2M831 130v2M834 130v2M838 130v2M842 130v2M844 121v2M845 130v2M846 121v2M851 121v2M852 130v2M854 130v2M855 121v2M856 121v2M856 130v2M858 130v2M859 121v2M860 121v2M861 130v2M866 121v2M868 130v2M869 130v2M871 121v2M873 130v2M874 121v2M887 130v2M889 121v2M890 121v2M890 130v2M898 121v2M899 130v2M907 130v2M910 130v2M911 130v2M913 121v2M924 130v2M925 121v2M928 121v2M930 130v2M932 130v2M934 130v2M935 130v2M936 130v2M938 121v2M939 121v2M942 121v2M943 130v2M949 130v2M952 121v2M952 130v2M955 130v2M958 130v2M959 130v2M960 121v2M961 121v2M966 121v2M968 121v2M972 121v2M972 130v2M973 130v2M978 121v2M980 121v2M981 130v2M986 130v2M988 130v2M995 121v2M1002 121v2M1003 121v2M1004 121v2M1013 121v2M1016 130v2" stroke="#300030" stroke-opacity="1" stroke-width="1" fill="none" shape-rendering="crispEdges" transform="translate(0.5,0)"/><path d="M24 123v3M26 123v3M30 123v3M31 123v3M32 123v3M34 123v3M35 123v3M36 123v3M38 123v3M39 123v3M40 123v3M43 123v3M45 123v3M47 123v3M49 123v3M51 123v3M53 123v3M57 123v3M61 123v3M62 123v3M63 123v3M64 123v3M65 123v3M66 123v3M67 123v3M70 123v3M72 123v3M73 123v3M74 123v3M75 123v3M78 123v3M80 123v3M83 123v3M85 123v3M86 123v3M87 123v3M88 123v3M94 123v3M95 123v3M96 123v3M97 123v3M98 123v3M99 123v3M101 123v3M105 123v3M106 123v3M108 123v3M111 123v3M112 123v3M113 123v3M115 123v3M116 123v3M117 123v3M118 123v3M120 123v3M121 123v3M122 123v3M123 123v3M124 123v3M125 123v3M126 123v3M128 123v3M129 123v3M130 123v3M131 123v3M132 123v3M133 123v3M134 123v3M137 123v3M139 123v3M141 123v3M142 123v3M144 123v3M145 123v3M146 123v3M147 123v3M148 123v3M149 123v3M151 123v3M152 123v3M154 123v3M155 123v3M157 123v3M158 123v3M159 123v3M160 123v3M164 123v3M165 123v3M166 123v3M168 123v3M170 123v3M171 123v3M172 123v3M173 123v3M176 123v3M179 123v3M181 123v3M183 123v3M186 123v3M187 123v3M188 123v3M190 123v3M191 123v3M192 123v3M193 123v3M195 123v3M197 123v3M198 123v3M199 123v3M201 123v3M202 123v3M203 123v3M205 123v3M206 123v3M207 123v3M208 123v3M209 123v3M210 123v3M212 123v3M213 123v3M215 123v3M216 123v3M220 123v3M223 123v3M226 123v3M227 123v3M228 123v3M230 123v3M231 123v3M232 123v3M233 123v3M235 123v3M237 123v3M238 123v3M240 123v3M241 123v3M242 123v3M245 123v3M246 123v3M247 123v3M249 123v3M252 123v3M253 123v3M254 123v3M256 123v3M260 123v3M261 123v3M264 123v3M267 123v3M268 123v3M272 123v3M273 123v3M275 123v3M280 123v3M281 123v3M282 123v3M286 123v3M287 123v3M288 123v3M290 123v3M291 123v3M292 123v3M293 123v3M294 123v3M297 123v3M298 123v3M301 123v3M303 123v3M304 123v3M308 123v3M309 123v3M311 123v3M312 123v3M313 123v3M314 123v3M316 123v3M317 123v3M319 123v3M320 123v3M322 123v3M323 123v3M326 123v3M327 123v3M331 123v3M333 123v3M334 123v3M336 123v3M337 123v3M338 123v3M339 123v3M340 123v3M341 123v3M344 123v3M346 123v3M347 123v3M351 123v3M353 123v3M354 123v3M355 123v3M356 123v3M357 123v3M358 123v3M359 123v3M360 123v3M362 123v3M363 123v3M364 123v3M365 123v3M366 123v3M367 123v3M369 123v3M370 123v3M372 123v3M374 123v3M375 123v3M380 123v3M381 123v3M384 123v3M387 123v3M388 123v3M391 123v3M392 123v3M393 123v3M394 123v3M395 123v3M397 123v3M398 123v3M399 123v3M403 123v3M405 123v3M406 123v3M408 123v3M410 123v3M413 123v3M414 123v3M416 123v3M417 123v3M419 123v3M422 123v3M423 123v3M424 123v3M427 123v3M428 123v3M430 123v3M432 123v3M434 123v3M435 123v3M436 123v3M438 123v3M440 123v3M441 123v3M443 123v3M446 123v3M447 123v3M448 123v3M451 123v3M452 123v3M453 123v3M454 123v3M455 123v3M456 123v3M457 123v3M458 123v3M459 123v3M461 123v3M462 123v3M464 123v3M468 123v3M469 123v3M470 123v3M471 123v3M473 123v3M474 123v3M478 123v3M481 123v3M482 123v3M483 123v3M484 123v3M486 123v3M487 123v3M488 123v3M489 123v3M492 123v3M493 123v3M494 123v3M495 123v3M496 123v3M498 123v3M500 123v3M504 123v3M505 123v3M506 123v3M508 123v3M509 123v3M510 123v3M512 123v3M514 123v3M515 123v3M517 123v3M518 123v3M520 123v3M521 123v3M524 123v3M525 123v3M526 123v3M528 123v3M531 123v3M532 123v3M534 123v3M536 123v3M538 123v3M539 123v3M540 123v3M541 123v3M542 123v3M545 123v3M546 123v3M549 123v3M550 123v3M551 123v3M554 123v3M556 123v3M558 123v3M559 123v3M561 123v3M562 123v3M565 123v3M566 123v3M567 123v3M569 123v3M570 123v3M571 123v3M573 123v3M574 123v3M576 123v3M577 123v3M580 123v3M581 123v3M582 123v3M586 123v3M587 123v3M588 123v3M589 123v3M590 123v3M591 123v3M593 123v3M595 123v3M596 123v3M598 123v3M602 123v3M605 123v3M607 123v3M608 123v3M610 123v3M614 123v3M617 123v3M619 123v3M620 123v3M621 123v3M626 123v3M630 123v3M633 123v3M638 123v3M639 123v3M641 123v3M642 123v3M643 123v3M646 123v3M647 123v3M648 123v3M650 123v3M651 123v3M652 123v3M654 123v3M658 123v3M660 123v3M661 123v3M664 123v3M665 123v3M667 123v3M668 123v3M671 123v3M674 123v3M675 123v3M678 123v3M681 123v3M682 123v3M685 123v3M686 123v3M687 123v3M688 123v3M689 123v3M691 123v3M692 123v3M695 123v3M696 123v3M697 123v3M700 123v3M701 123v3M703 123v3M704 123v3M705 123v3M706 123v3M707 123v3M710 123v3M711 123v3M712 123v3M716 123v3M717 123v3M718 123v3M721 123v3M722 123v3M725 123v3M727 123v3M728 123v3M732 123v3M733 123v3M735 123v3M738 123v3M740 123v3M741 123v3M743 123v3M744 123v3M746 123v3M750 123v3M751 123v3M752 123v3M755 123v3M756 123v3M758 123v3M759 123v3M760 123v3M761 123v3M762 123v3M763 123v3M764 123v3M766 123v3M768 123v3M769 123v3M770 123v3M771 123v3M774 123v3M775 123v3M777 123v3M778 123v3M784 123v3M785 123v3M787 123v3M790 123v3M791 123v3M793 123v3M796 123v3M802 123v3M804 123v3M806 123v3M811 123v3M813 123v3M814 123v3M815 123v3M817 123v3M820 123v3M821 123v3M823 123v3M825 123v3M826 123v3M827 123v3M828 123v3M830 123v3M831 123v3M832 123v3M838 123v3M839 123v3M842 123v3M844 123v3M846 123v3M849 123v3M850 123v3M851 123v3M853 123v3M854 123v3M857 123v3M858 123v3M863 123v3M864 123v3M866 123v3M867 123v3M868 123v3M872 123v3M874 123v3M875 123v3M876 123v3M879 123v3M881 123v3M882 123v3M885 123v3M886 123v3M887 123v3M888 123v3M889 123v3M890 123v3M892 123v3M894 123v3M895 123v3M897 123v3M898 123v3M899 123v3M900 123v3M901 123v3M905 123v3M906 123v3M907 123v3M908 123v3M909 123v3M911 123v3M912 123v3M915 123v3M919 123v3M920 123v3M921 123v3M922 123v3M925 123v3M926 123v3M928 123v3M930 123v3M934 123v3M936 123v3M937 123v3M938 123v3M940 123v3M941 123v3M942 123v3M943 123v3M946 123v3M947 123v3M948 123v3M949 123v3M950 123v3M953 123v3M954 123v3M955 123v3M956 123v3M957 123v3M958 123v3M959 123v3M961 123v3M962 123v3M963 123v3M965 123v3M966 123v3M967 123v3M969 123v3M970 123v3M973 123v3M975 123v3M977 123v3M979 123v3M982 123v3M984 123v3M985 123v3M988 123v3M993 123v3M994 123v3M996 123v3M997 123v3M998 123v3M999 123v3M1001 123v3M1003 123v3M1004 123v3M1007 123v3M1009 123v3M1013 123v3M1014 123v3M1015 123v3M1016 123v3M1017 123v3M1018 123v3" stroke="#500050" stroke-opacity="1" stroke-width="1" fill="none" shape-rendering="crispEdges" transform="translate(0.5,0)"/><path d="M21 123v3M22 123v3M23 123v3M25 123v3M27 123v3M28 123v3M29 123v3M33 123v3M37 123v3M41 123v3M42 123v3M44 123v3M46 123v3M48 123v3M50 123v3M52 123v3M54 123v3M55 123v3M56 123v3M58 123v3M59 123v3M60 123v3M68 123v3M69 123v3M71 123v3M76 123v3M77 123v3M79 123v3M81 123v3M82 123v3M84 123v3M89 123v3M90 123v3M91 123v3M92 123v3M93 123v3M100 123v3M102 123v3M103 123v3M104 123v3M107 123v3M109 123v3M110 123v3M114 123v3M119 123v3M127 123v3M135 123v3M136 123v3M138 123v3M140 123v3M143 123v3M150 123v3M153 123v3M156 123v3M161 123v3M162 123v3M163 123v3M167 123v3M169 123v3M174 123v3M175 123v3M177 123v3M178 123v3M180 123v3M182 123v3M184 123v3M185 123v3M189 123v3M194 123v3M196 123v3M200 123v3M204 123v3M211 123v3M214 123v3M217 123v3M218 123v3M219 123v3M221 123v3M222 123v3M224 123v3M225 123v3M229 123v3M234 123v3M236 123v3M239 123v3M243 123v3M244 123v3M248 123v3M250 123v3M251 123v3M255 123v3M257 123v3M258 123v3M259 123v3M262 123v3M263 123v3M265 123v3M266 123v3M269 123v3M270 123v3M271 123v3M274 123v3M276 123v3M277 123v3M278 123v3M279 123v3M283 123v3M284 123v3M285 123v3M289 123v3M295 123v3M296 123v3M299 123v3M300 123v3M302 123v3M305 123v3M306 123v3M307 123v3M310 123v3M315 123v3M318 123v3M321 123v3M324 123v3M325 123v3M328 123v3M329 123v3M330 123v3M332 123v3M335 123v3M342 123v3M343 123v3M345 123v3M348 123v3M349 123v3M350 123v3M352 123v3M361 123v3M368 123v3M371 123v3M373 123v3M376 123v3M377 123v3M378 123v3M379 123v3M382 123v3M383 123v3M385 123v3M386 123v3M389 123v3M390 123v3M396 123v3M400 123v3M401 123v3M402 123v3M404 123v3M407 123v3M409 123v3M411 123v3M412 123v3M415 123v3M418 123v3M420 123v3M421 123v3M425 123v3M426 123v3M429 123v3M431 123v3M433 123v3M437 123v3M439 123v3M442 123v3M444 123v3M445 123v3M449 123v3M450 123v3M460 123v3M463 123v3M465 123v3M466 123v3M467 123v3M472 123v3M475 123v3M476 123v3M477 123v3M479 123v3M480 123v3M485 123v3M490 123v3M491 123v3M497 123v3M499 123v3M501 123v3M502 123v3M503 123v3M507 123v3M511 123v3M513 123v3M516 123v3M519 123v3M522 123v3M523 123v3M527 123v3M529 123v3M530 123v3M533 123v3M535 123v3M537 123v3M543 123v3M544 123v3M547 123v3M548 123v3M552 123v3M553 123v3M555 123v3M557 123v3M560 123v3M563 123v3M564 123v3M568 123v3M572 123v3M575 123v3M578 123v3M579 123v3M583 123v3M584 123v3M585 123v3M592 123v3M594 123v3M597 123v3M599 123v3M600 123v3M601 123v3M603 123v3M604 123v3M606 123v3M609 123v3M611 123v3M612 123v3M613 123v3M615 123v3M616 123v3M618 123v3M622 123v3M623 123v3M624 123v3M625 123v3M627 123v3M628 123v3M629 123v3M631 123v3M632 123v3M634 123v3M635 123v3M636 123v3M637 123v3M640 123v3M644 123v3M645 123v3M649 123v3M653 123v3M655 123v3M656 123v3M657 123v3M659 123v3M662 123v3M663 123v3M666 123v3M669 123v3M670 123v3M672 123v3M673 123v3M676 123v3M677 123v3M679 123v3M680 123v3M683 123v3M684 123v3M690 123v3M693 123v3M694 123v3M698 123v3M699 123v3M702 123v3M708 123v3M709 123v3M713 123v3M714 123v3M715 123v3M719 123v3M720 123v3M723 123v3M724 123v3M726 123v3M729 123v3M730 123v3M731 123v3M734 123v3M736 123v3M737 123v3M739 123v3M742 123v3M745 123v3M747 123v3M748 123v3M749 123v3M753 123v3M754 123v3M757 123v3M765 123v3M767 123v3M772 123v3M773 123v3M776 123v3M779 123v3M780 123v3M781 123v3M782 123v3M783 123v3M786 123v3M788 123v3M789 123v3M792 123v3M794 123v3M795 123v3M797 123v3M798 123v3M799 123v3M800 123v3M801 123v3M803 123v3M805 123v3M807 123v3M808 123v3M809 123v3M810 123v3M812 123v3M816 123v3M818 123v3M819 123v3M822 123v3M824 123v3M829 123v3M833 123v3M834 123v3M835 123v3M836 123v3M837 123v3M840 123v3M841 123v3M843 123v3M845 123v3M847 123v3M848 123v3M852 123v3M855 123v3M856 123v3M859 123v3M860 123v3M861 123v3M862 123v3M865 123v3M869 123v3M870 123v3M871 123v3M873 123v3M877 123v3M878 123v3M880 123v3M883 123v3M884 123v3M891 123v3M893 123v3M896 123v3M902 123v3M903 123v3M904 123v3M910 123v3M913 123v3M914 123v3M916 123v3M917 123v3M918 123v3M923 123v3M924 123v3M927 123v3M929 123v3M931 123v3M932 123v3M933 123v3M935 123v3M939 123v3M944 123v3M945 123v3M951 123v3M952 123v3M960 123v3M964 123v3M968 123v3M971 123v3M972 123v3M974 123v3M976 123v3M978 123v3M980 123v3M981 123v3M983 123v3M986 123v3M987 123v3M989 123v3M990 123v3M991 123v3M992 123v3M995 123v3M1000 123v3M1002 123v3M1005 123v3M1006 123v3M1008 123v3M1010 123v3M1011 123v3M1012 123v3M1019 123v3M1020 123v3" stroke="#720072" stroke-opacity="1" stroke-width="1" fill="none" shape-rendering="crispEdges" transform="translate(0.5,0)"/><path d="M22 127v3M23 127v3M24 127v3M27 127v3M29 127v3M30 127v3M32 127v3M33 127v3M34 127v3M37 127v3M39 127v3M41 127v3M42 127v3M45 127v3M46 127v3M47 127v3M48 127v3M51 127v3M53 127v3M55 127v3M58 127v3M59 127v3M60 127v3M61 127v3M62 127v3M63 127v3M65 127v3M66 127v3M68 127v3M69 127v3M70 127v3M71 127v3M72 127v3M74 127v3M75 127v3M76 127v3M77 127v3M78 127v3M80 127v3M81 127v3M82 127v3M84 127v3M85 127v3M87 127v3M88 127v3M89 127v3M90 127v3M92 127v3M93 127v3M95 127v3M97 127v3M103 127v3M104 127v3M105 127v3M106 127v3M107 127v3M108 127v3M110 127v3M111 127v3M112 127v3M113 127v3M115 127v3M116 127v3M117 127v3M119 127v3M121 127v3M122 127v3M123 127v3M124 127v3M125 127v3M126 127v3M127 127v3M128 127v3M131 127v3M132 127v3M133 127v3M134 127v3M135 127v3M137 127v3M138 127v3M139 127v3M140 127v3M141 127v3M142 127v3M143 127v3M144 127v3M145 127v3M147 127v3M148 127v3M150 127v3M151 127v3M152 127v3M153 127v3M154 127v3M155 127v3M157 127v3M158 127v3M160 127v3M162 127v3M163 127v3M166 127v3M167 127v3M168 127v3M169 127v3M170 127v3M171 127v3M172 127v3M175 127v3M176 127v3M179 127v3M180 127v3M181 127v3M182 127v3M183 127v3M184 127v3M185 127v3M186 127v3M187 127v3M190 127v3M191 127v3M193 127v3M194 127v3M198 127v3M199 127v3M200 127v3M201 127v3M202 127v3M203 127v3M204 127v3M205 127v3M206 127v3M207 127v3M209 127v3M212 127v3M214 127v3M215 127v3M216 127v3M218 127v3M219 127v3M220 127v3M221 127v3M222 127v3M223 127v3M226 127v3M227 127v3M228 127v3M229 127v3M234 127v3M236 127v3M237 127v3M238 127v3M240 127v3M242 127v3M243 127v3M244 127v3M246 127v3M247 127v3M248 127v3M250 127v3M251 127v3M252 127v3M253 127v3M255 127v3M258 127v3M261 127v3M263 127v3M264 127v3M265 127v3M266 127v3M268 127v3M269 127v3M270 127v3M271 127v3M272 127v3M273 127v3M274 127v3M275 127v3M278 127v3M279 127v3M280 127v3M281 127v3M283 127v3M284 127v3M285 127v3M286 127v3M287 127v3M288 127v3M291 127v3M294 127v3M295 127v3M298 127v3M299 127v3M300 127v3M302 127v3M303 127v3M304 127v3M305 127v3M307 127v3M310 127v3M313 127v3M314 127v3M315 127v3M318 127v3M321 127v3M322 127v3M324 127v3M326 127v3M329 127v3M330 127v3M331 127v3M332 127v3M333 127v3M334 127v3M335 127v3M336 127v3M337 127v3M338 127v3M341 127v3M343 127v3M344 127v3M345 127v3M346 127v3M348 127v3M351 127v3M352 127v3M353 127v3M354 127v3M355 127v3M356 127v3M358 127v3M359 127v3M360 127v3M363 127v3M364 127v3M365 127v3M368 127v3M369 127v3M370 127v3M371 127v3M373 127v3M374 127v3M380 127v3M383 127v3M384 127v3M385 127v3M386 127v3M387 127v3M388 127v3M390 127v3M391 127v3M392 127v3M394 127v3M395 127v3M396 127v3M398 127v3M400 127v3M401 127v3M402 127v3M403 127v3M404 127v3M406 127v3M407 127v3M409 127v3M410 127v3M412 127v3M414 127v3M415 127v3M416 127v3M417 127v3M420 127v3M421 127v3M422 127v3M424 127v3M426 127v3M427 127v3M429 127v3M430 127v3M433 127v3M434 127v3M435 127v3M436 127v3M438 127v3M440 127v3M443 127v3M445 127v3M446 127v3M447 127v3M449 127v3M452 127v3M453 127v3M455 127v3M456 127v3M457 127v3M458 127v3M461 127v3M462 127v3M465 127v3M467 127v3M471 127v3M472 127v3M474 127v3M476 127v3M477 127v3M479 127v3M483 127v3M484 127v3M487 127v3M488 127v3M489 127v3M490 127v3M491 127v3M494 127v3M496 127v3M497 127v3M498 127v3M500 127v3M501 127v3M503 127v3M504 127v3M505 127v3M506 127v3M507 127v3M508 127v3M512 127v3M514 127v3M515 127v3M517 127v3M519 127v3M521 127v3M523 127v3M525 127v3M526 127v3M527 127v3M529 127v3M530 127v3M531 127v3M532 127v3M533 127v3M534 127v3M535 127v3M536 127v3M538 127v3M539 127v3M541 127v3M542 127v3M543 127v3M544 127v3M547 127v3M549 127v3M550 127v3M551 127v3M552 127v3M553 127v3M554 127v3M555 127v3M557 127v3M559 127v3M560 127v3M561 127v3M562 127v3M565 127v3M566 127v3M567 127v3M568 127v3M569 127v3M571 127v3M573 127v3M574 127v3M577 127v3M579 127v3M582 127v3M583 127v3M585 127v3M587 127v3M588 127v3M590 127v3M591 127v3M592 127v3M593 127v3M597 127v3M601 127v3M602 127v3M604 127v3M606 127v3M608 127v3M609 127v3M610 127v3M611 127v3M612 127v3M613 127v3M614 127v3M616 127v3M617 127v3M620 127v3M622 127v3M624 127v3M625 127v3M626 127v3M631 127v3M633 127v3M634 127v3M635 127v3M638 127v3M639 127v3M640 127v3M641 127v3M642 127v3M644 127v3M647 127v3M650 127v3M651 127v3M652 127v3M653 127v3M655 127v3M659 127v3M660 127v3M661 127v3M664 127v3M665 127v3M666 127v3M668 127v3M669 127v3M670 127v3M671 127v3M672 127v3M673 127v3M674 127v3M675 127v3M677 127v3M678 127v3M679 127v3M680 127v3M681 127v3M682 127v3M683 127v3M684 127v3M685 127v3M688 127v3M689 127v3M691 127v3M692 127v3M693 127v3M694 127v3M695 127v3M697 127v3M698 127v3M699 127v3M700 127v3M701 127v3M702 127v3M706 127v3M707 127v3M710 127v3M711 127v3M713 127v3M714 127v3M715 127v3M716 127v3M718 127v3M719 127v3M721 127v3M722 127v3M724 127v3M725 127v3M728 127v3M729 127v3M731 127v3M732 127v3M733 127v3M734 127v3M735 127v3M736 127v3M739 127v3M740 127v3M742 127v3M743 127v3M745 127v3M747 127v3M748 127v3M749 127v3M750 127v3M751 127v3M752 127v3M753 127v3M754 127v3M757 127v3M758 127v3M759 127v3M760 127v3M761 127v3M767 127v3M768 127v3M770 127v3M771 127v3M772 127v3M775 127v3M777 127v3M781 127v3M783 127v3M784 127v3M785 127v3M787 127v3M791 127v3M792 127v3M793 127v3M794 127v3M795 127v3M796 127v3M798 127v3M802 127v3M803 127v3M804 127v3M805 127v3M806 127v3M807 127v3M808 127v3M809 127v3M810 127v3M813 127v3M814 127v3M815 127v3M816 127v3M818 127v3M820 127v3M821 127v3M823 127v3M824 127v3M826 127v3M828 127v3M829 127v3M830 127v3M831 127v3M833 127v3M834 127v3M835 127v3M836 127v3M838 127v3M840 127v3M841 127v3M842 127v3M843 127v3M844 127v3M845 127v3M846 127v3M847 127v3M848 127v3M849 127v3M851 127v3M852 127v3M853 127v3M856 127v3M857 127v3M858 127v3M859 127v3M860 127v3M861 127v3M862 127v3M864 127v3M866 127v3M867 127v3M872 127v3M873 127v3M874 127v3M875 127v3M877 127v3M878 127v3M879 127v3M881 127v3M882 127v3M883 127v3M885 127v3M886 127v3M889 127v3M891 127v3M892 127v3M893 127v3M894 127v3M896 127v3M897 127v3M898 127v3M900 127v3M901 127v3M902 127v3M904 127v3M906 127v3M907 127v3M908 127v3M911 127v3M912 127v3M913 127v3M914 127v3M915 127v3M916 127v3M917 127v3M919 127v3M920 127v3M922 127v3M923 127v3M924 127v3M925 127v3M926 127v3M927 127v3M931 127v3M932 127v3M936 127v3M938 127v3M941 127v3M943 127v3M944 127v3M945 127v3M946 127v3M947 127v3M948 127v3M951 127v3M952 127v3M954 127v3M956 127v3M957 127v3M961 127v3M962 127v3M963 127v3M964 127v3M966 127v3M967 127v3M968 127v3M969 127v3M970 127v3M971 127v3M973 127v3M974 127v3M975 127v3M977 127v3M978 127v3M979 127v3M980 127v3M981 127v3M982 127v3M984 127v3M985 127v3M988 127v3M989 127v3M990 127v3M991 127v3M992 127v3M993 127v3M995 127v3M996 127v3M997 127v3M998 127v3M1000 127v3M1001 127v3M1004 127v3M1005 127v3M1008 127v3M1009 127v3M1010 127v3M1011 127v3M1012 127v3M1013 127v3M1014 127v3M1016 127v3M1017 127v3M1018 127v3M1019 127v3M1020 127v3" stroke="#b000b0" stroke-opacity="1" stroke-width="1" fill="none" shape-rendering="crispEdges" transform="translate(0.5,0)"/><path d="M21 127v3M25 127v3M26 127v3M28 127v3M31 127v3M35 127v3M36 127v3M38 127v3M40 127v3M43 127v3M44 127v3M49 127v3M50 127v3M52 127v3M54 127v3M56 127v3M57 127v3M64 127v3M67 127v3M73 127v3M79 127v3M83 127v3M86 127v3M91 127v3M94 127v3M96 127v3M98 127v3M99 127v3M100 127v3M101 127v3M102 127v3M109 127v3M114 127v3M118 127v3M120 127v3M129 127v3M130 127v3M136 127v3M146 127v3M149 127v3M156 127v3M159 127v3M161 127v3M164 127v3M165 127v3M173 127v3M174 127v3M177 127v3M178 127v3M188 127v3M189 127v3M192 127v3M195 127v3M196 127v3M197 127v3M208 127v3M210 127v3M211 127v3M213 127v3M217 127v3M224 127v3M225 127v3M230 127v3M231 127v3M232 127v3M233 127v3M235 127v3M239 127v3M241 127v3M245 127v3M249 127v3M254 127v3M256 127v3M257 127v3M259 127v3M260 127v3M262 127v3M267 127v3M276 127v3M277 127v3M282 127v3M289 127v3M290 127v3M292 127v3M293 127v3M296 127v3M297 127v3M301 127v3M306 127v3M308 127v3M309 127v3M311 127v3M312 127v3M316 127v3M317 127v3M319 127v3M320 127v3M323 127v3M325 127v3M327 127v3M328 127v3M339 127v3M340 127v3M342 127v3M347 127v3M349 127v3M350 127v3M357 127v3M361 127v3M362 127v3M366 127v3M367 127v3M372 127v3M375 127v3M376 127v3M377 127v3M378 127v3M379 127v3M381 127v3M382 127v3M389 127v3M393 127v3M397 127v3M399 127v3M405 127v3M408 127v3M411 127v3M413 127v3M418 127v3M419 127v3M423 127v3M425 127v3M428 127v3M431 127v3M432 127v3M437 127v3M439 127v3M441 127v3M442 127v3M444 127v3M448 127v3M450 127v3M451 127v3M454 127v3M459 127v3M460 127v3M463 127v3M464 127v3M466 127v3M468 127v3M469 127v3M470 127v3M473 127v3M475 127v3M478 127v3M480 127v3M481 127v3M482 127v3M485 127v3M486 127v3M492 127v3M493 127v3M495 127v3M499 127v3M502 127v3M509 127v3M510 127v3M511 127v3M513 127v3M516 127v3M518 127v3M520 127v3M522 127v3M524 127v3M528 127v3M537 127v3M540 127v3M545 127v3M546 127v3M548 127v3M556 127v3M558 127v3M563 127v3M564 127v3M570 127v3M572 127v3M575 127v3M576 127v3M578 127v3M580 127v3M581 127v3M584 127v3M586 127v3M589 127v3M594 127v3M595 127v3M596 127v3M598 127v3M599 127v3M600 127v3M603 127v3M605 127v3M607 127v3M615 127v3M618 127v3M619 127v3M621 127v3M623 127v3M627 127v3M628 127v3M629 127v3M630 127v3M632 127v3M636 127v3M637 127v3M643 127v3M645 127v3M646 127v3M648 127v3M649 127v3M654 127v3M656 127v3M657 127v3M658 127v3M662 127v3M663 127v3M667 127v3M676 127v3M686 127v3M687 127v3M690 127v3M696 127v3M703 127v3M704 127v3M705 127v3M708 127v3M709 127v3M712 127v3M717 127v3M720 127v3M723 127v3M726 127v3M727 127v3M730 127v3M737 127v3M738 127v3M741 127v3M744 127v3M746 127v3M755 127v3M756 127v3M762 127v3M763 127v3M764 127v3M765 127v3M766 127v3M769 127v3M773 127v3M774 127v3M776 127v3M778 127v3M779 127v3M780 127v3M782 127v3M786 127v3M788 127v3M789 127v3M790 127v3M797 127v3M799 127v3M800 127v3M801 127v3M811 127v3M812 127v3M817 127v3M819 127v3M822 127v3M825 127v3M827 127v3M832 127v3M837 127v3M839 127v3M850 127v3M854 127v3M855 127v3M863 127v3M865 127v3M868 127v3M869 127v3M870 127v3M871 127v3M876 127v3M880 127v3M884 127v3M887 127v3M888 127v3M890 127v3M895 127v3M899 127v3M903 127v3M905 127v3M909 127v3M910 127v3M918 127v3M921 127v3M928 127v3M929 127v3M930 127v3M933 127v3M934 127v3M935 127v3M937 127v3M939 127v3M940 127v3M942 127v3M949 127v3M950 127v3M953 127v3M955 127v3M958 127v3M959 127v3M960 127v3M965 127v3M972 127v3M976 127v3M983 127v3M986 127v3M987 127v3M994 127v3M999 127v3M1002 127v3M1003 127v3M1006 127v3M1007 127v3M1015 127v3" stroke="#780078" stroke-opacity="1" stroke-width="1" fill="none" shape-rendering="crispEdges" transform="translate(0.5,0)"/><path d="M21 126v1M27 126v1M32 126v1M33 126v1M35 126v1M37 126v1M45 126v1M46 126v1M48 126v1M50 126v1M51 126v1M55 126v1M56 126v1M57 126v1M58 126v1M67 126v1M69 126v1M71 126v1M72 126v1M74 126v1M82 126v1M85 126v1M88 126v1M90 126v1M91 126v1M97 126v1M104 126v1M106 126v1M117 126v1M118 126v1M119 126v1M121 126v1M122 126v1M134 126v1M136 126v1M143 126v1M145 126v1M147 126v1M152 126v1M153 126v1M156 126v1M157 126v1M159 126v1M160 126v1M161 126v1M166 126v1M167 126v1M177 126v1M182 126v1M191 126v1M192 126v1M193 126v1M195 126v1M196 126v1M197 126v1M203 126v1M207 126v1M211 126v1M212 126v1M216 126v1M224 126v1M226 126v1M232 126v1M234 126v1M238 126v1M239 126v1M242 126v1M247 126v1M251 126v1M253 126v1M254 126v1M260 126v1M264 126v1M268 126v1M269 126v1M270 126v1M273 126v1M279 126v1M284 126v1M286 126v1M288 126v1M294 126v1M298 126v1M302 126v1M305 126v1M307 126v1M308 126v1M311 126v1M315 126v1M318 126v1M320 126v1M325 126v1M329 126v1M331 126v1M338 126v1M340 126v1M343 126v1M344 126v1M345 126v1M346 126v1M347 126v1M349 126v1M350 126v1M353 126v1M354 126v1M360 126v1M362 126v1M364 126v1M378 126v1M379 126v1M383 126v1M385 126v1M394 126v1M395 126v1M403 126v1M404 126v1M406 126v1M413 126v1M414 126v1M416 126v1M417 126v1M419 126v1M420 126v1M424 126v1M428 126v1M437 126v1M438 126v1M443 126v1M447 126v1M448 126v1M462 126v1M464 126v1M470 126v1M472 126v1M473 126v1M477 126v1M482 126v1M491 126v1M492 126v1M494 126v1M495 126v1M498 126v1M500 126v1M503 126v1M504 126v1M510 126v1M518 126v1M529 126v1M533 126v1M536 126v1M543 126v1M551 126v1M552 126v1M554 126v1M558 126v1M560 126v1M562 126v1M563 126v1M565 126v1M572 126v1M574 126v1M580 126v1M581 126v1M582 126v1M596 126v1M599 126v1M600 126v1M604 126v1M608 126v1M610 126v1M624 126v1M630 126v1M631 126v1M635 126v1M637 126v1M639 126v1M643 126v1M654 126v1M656 126v1M663 126v1M664 126v1M665 126v1M668 126v1M669 126v1M670 126v1M674 126v1M676 126v1M681 126v1M684 126v1M685 126v1M687 126v1M692 126v1M696 126v1M698 126v1M705 126v1M707 126v1M711 126v1M714 126v1M718 126v1M720 126v1M723 126v1M726 126v1M727 126v1M728 126v1M729 126v1M732 126v1M734 126v1M735 126v1M736 126v1M739 126v1M740 126v1M745 126v1M757 126v1M760 126v1M761 126v1M764 126v1M766 126v1M772 126v1M773 126v1M774 126v1M775 126v1M778 126v1M779 126v1M781 126v1M783 126v1M787 126v1M790 126v1M791 126v1M794 126v1M795 126v1M796 126v1M797 126v1M798 126v1M799 126v1M801 126v1M802 126v1M806 126v1M807 126v1M810 126v1M813 126v1M816 126v1M818 126v1M822 126v1M823 126v1M827 126v1M830 126v1M833 126v1M834 126v1M835 126v1M838 126v1M840 126v1M843 126v1M845 126v1M846 126v1M847 126v1M851 126v1M854 126v1M855 126v1M863 126v1M867 126v1M869 126v1M870 126v1M871 126v1M873 126v1M879 126v1M888 126v1M889 126v1M891 126v1M895 126v1M896 126v1M899 126v1M903 126v1M916 126v1M919 126v1M924 126v1M926 126v1M927 126v1M933 126v1M935 126v1M936 126v1M946 126v1M947 126v1M950 126v1M952 126v1M953 126v1M965 126v1M966 126v1M970 126v1M972 126v1M976 126v1M978 126v1M979 126v1M989 126v1M992 126v1M997 126v1M998 126v1M999 126v1M1004 126v1M1005 126v1M1006 126v1M1013 126v1M1015 126v1M1018 126v1M1019 126v1" stroke="#d810d8" stroke-opacity="1" stroke-width="1" fill="none" shape-rendering="crispEdges" transform="translate(0.5,0)"/><path d="M22 126v1M23 126v1M24 126v1M25 126v1M26 126v1M28 126v1M29 126v1M30 126v1M31 126v1M34 126v1M36 126v1M38 126v1M39 126v1M40 126v1M41 126v1M42 126v1M43 126v1M44 126v1M47 126v1M49 126v1M52 126v1M53 126v1M54 126v1M59 126v1M60 126v1M61 126v1M62 126v1M63 126v1M64 126v1M65 126v1M66 126v1M68 126v1M70 126v1M73 126v1M75 126v1M76 126v1M77 126v1M78 126v1M79 126v1M80 126v1M81 126v1M83 126v1M84 126v1M86 126v1M87 126v1M89 126v1M92 126v1M93 126v1M94 126v1M95 126v1M96 126v1M98 126v1M99 126v1M100 126v1M101 126v1M102 126v1M103 126v1M105 126v1M107 126v1M108 126v1M109 126v1M110 126v1M111 126v1M112 126v1M113 126v1M114 126v1M115 126v1M116 126v1M120 126v1M123 126v1M124 126v1M125 126v1M126 126v1M127 126v1M128 126v1M129 126v1M130 126v1M131 126v1M132 126v1M133 126v1M135 126v1M137 126v1M138 126v1M139 126v1M140 126v1M141 126v1M142 126v1M144 126v1M146 126v1M148 126v1M149 126v1M150 126v1M151 126v1M154 126v1M155 126v1M158 126v1M162 126v1M163 126v1M164 126v1M165 126v1M168 126v1M169 126v1M170 126v1M171 126v1M172 126v1M173 126v1M174 126v1M175 126v1M176 126v1M178 126v1M179 126v1M180 126v1M181 126v1M183 126v1M184 126v1M185 126v1M186 126v1M187 126v1M188 126v1M189 126v1M190 126v1M194 126v1M198 126v1M199 126v1M200 126v1M201 126v1M202 126v1M204 126v1M205 126v1M206 126v1M208 126v1M209 126v1M210 126v1M213 126v1M214 126v1M215 126v1M217 126v1M218 126v1M219 126v1M220 126v1M221 126v1M222 126v1M223 126v1M225 126v1M227 126v1M228 126v1M229 126v1M230 126v1M231 126v1M233 126v1M235 126v1M236 126v1M237 126v1M240 126v1M241 126v1M243 126v1M244 126v1M245 126v1M246 126v1M248 126v1M249 126v1M250 126v1M252 126v1M255 126v1M256 126v1M257 126v1M258 126v1M259 126v1M261 126v1M262 126v1M263 126v1M265 126v1M266 126v1M267 126v1M271 126v1M272 126v1M274 126v1M275 126v1M276 126v1M277 126v1M278 126v1M280 126v1M281 126v1M282 126v1M283 126v1M285 126v1M287 126v1M289 126v1M290 126v1M291 126v1M292 126v1M293 126v1M295 126v1M296 126v1M297 126v1M299 126v1M300 126v1M301 126v1M303 126v1M304 126v1M306 126v1M309 126v1M310 126v1M312 126v1M313 126v1M314 126v1M316 126v1M317 126v1M319 126v1M321 126v1M322 126v1M323 126v1M324 126v1M326 126v1M327 126v1M328 126v1M330 126v1M332 126v1M333 126v1M334 126v1M335 126v1M336 126v1M337 126v1M339 126v1M341 126v1M342 126v1M348 126v1M351 126v1M352 126v1M355 126v1M356 126v1M357 126v1M358 126v1M359 126v1M361 126v1M363 126v1M365 126v1M366 126v1M367 126v1M368 126v1M369 126v1M370 126v1M371 126v1M372 126v1M373 126v1M374 126v1M375 126v1M376 126v1M377 126v1M380 126v1M381 126v1M382 126v1M384 126v1M386 126v1M387 126v1M388 126v1M389 126v1M390 126v1M391 126v1M392 126v1M393 126v1M396 126v1M397 126v1M398 126v1M399 126v1M400 126v1M401 126v1M402 126v1M405 126v1M407 126v1M408 126v1M409 126v1M410 126v1M411 126v1M412 126v1M415 126v1M418 126v1M421 126v1M422 126v1M423 126v1M425 126v1M426 126v1M427 126v1M429 126v1M430 126v1M431 126v1M432 126v1M433 126v1M434 126v1M435 126v1M436 126v1M439 126v1M440 126v1M441 126v1M442 126v1M444 126v1M445 126v1M446 126v1M449 126v1M450 126v1M451 126v1M452 126v1M453 126v1M454 126v1M455 126v1M456 126v1M457 126v1M458 126v1M459 126v1M460 126v1M461 126v1M463 126v1M465 126v1M466 126v1M467 126v1M468 126v1M469 126v1M471 126v1M474 126v1M475 126v1M476 126v1M478 126v1M479 126v1M480 126v1M481 126v1M483 126v1M484 126v1M485 126v1M486 126v1M487 126v1M488 126v1M489 126v1M490 126v1M493 126v1M496 126v1M497 126v1M499 126v1M501 126v1M502 126v1M505 126v1M506 126v1M507 126v1M508 126v1M509 126v1M511 126v1M512 126v1M513 126v1M514 126v1M515 126v1M516 126v1M517 126v1M519 126v1M520 126v1M521 126v1M522 126v1M523 126v1M524 126v1M525 126v1M526 126v1M527 126v1M528 126v1M530 126v1M531 126v1M532 126v1M534 126v1M535 126v1M537 126v1M538 126v1M539 126v1M540 126v1M541 126v1M542 126v1M544 126v1M545 126v1M546 126v1M547 126v1M548 126v1M549 126v1M550 126v1M553 126v1M555 126v1M556 126v1M557 126v1M559 126v1M561 126v1M564 126v1M566 126v1M567 126v1M568 126v1M569 126v1M570 126v1M571 126v1M573 126v1M575 126v1M576 126v1M577 126v1M578 126v1M579 126v1M583 126v1M584 126v1M585 126v1M586 126v1M587 126v1M588 126v1M589 126v1M590 126v1M591 126v1M592 126v1M593 126v1M594 126v1M595 126v1M597 126v1M598 126v1M601 126v1M602 126v1M603 126v1M605 126v1M606 126v1M607 126v1M609 126v1M611 126v1M612 126v1M613 126v1M614 126v1M615 126v1M616 126v1M617 126v1M618 126v1M619 126v1M620 126v1M621 126v1M622 126v1M623 126v1M625 126v1M626 126v1M627 126v1M628 126v1M629 126v1M632 126v1M633 126v1M634 126v1M636 126v1M638 126v1M640 126v1M641 126v1M642 126v1M644 126v1M645 126v1M646 126v1M647 126v1M648 126v1M649 126v1M650 126v1M651 126v1M652 126v1M653 126v1M655 126v1M657 126v1M658 126v1M659 126v1M660 126v1M661 126v1M662 126v1M666 126v1M667 126v1M671 126v1M672 126v1M673 126v1M675 126v1M677 126v1M678 126v1M679 126v1M680 126v1M682 126v1M683 126v1M686 126v1M688 126v1M689 126v1M690 126v1M691 126v1M693 126v1M694 126v1M695 126v1M697 126v1M699 126v1M700 126v1M701 126v1M702 126v1M703 126v1M704 126v1M706 126v1M708 126v1M709 126v1M710 126v1M712 126v1M713 126v1M715 126v1M716 126v1M717 126v1M719 126v1M721 126v1M722 126v1M724 126v1M725 126v1M730 126v1M731 126v1M733 126v1M737 126v1M738 126v1M741 126v1M742 126v1M743 126v1M744 126v1M746 126v1M747 126v1M748 126v1M749 126v1M750 126v1M751 126v1M752 126v1M753 126v1M754 126v1M755 126v1M756 126v1M758 126v1M759 126v1M762 126v1M763 126v1M765 126v1M767 126v1M768 126v1M769 126v1M770 126v1M771 126v1M776 126v1M777 126v1M780 126v1M782 126v1M784 126v1M785 126v1M786 126v1M788 126v1M789 126v1M792 126v1M793 126v1M800 126v1M803 126v1M804 126v1M805 126v1M808 126v1M809 126v1M811 126v1M812 126v1M814 126v1M815 126v1M817 126v1M819 126v1M820 126v1M821 126v1M824 126v1M825 126v1M826 126v1M828 126v1M829 126v1M831 126v1M832 126v1M836 126v1M837 126v1M839 126v1M841 126v1M842 126v1M844 126v1M848 126v1M849 126v1M850 126v1M852 126v1M853 126v1M856 126v1M857 126v1M858 126v1M859 126v1M860 126v1M861 126v1M862 126v1M864 126v1M865 126v1M866 126v1M868 126v1M872 126v1M874 126v1M875 126v1M876 126v1M877 126v1M878 126v1M880 126v1M881 126v1M882 126v1M883 126v1M884 126v1M885 126v1M886 126v1M887 126v1M890 126v1M892 126v1M893 126v1M894 126v1M897 126v1M898 126v1M900 126v1M901 126v1M902 126v1M904 126v1M905 126v1M906 126v1M907 126v1M908 126v1M909 126v1M910 126v1M911 126v1M912 126v1M913 126v1M914 126v1M915 126v1M917 126v1M918 126v1M920 126v1M921 126v1M922 126v1M923 126v1M925 126v1M928 126v1M929 126v1M930 126v1M931 126v1M932 126v1M934 126v1M937 126v1M938 126v1M939 126v1M940 126v1M941 126v1M942 126v1M943 126v1M944 126v1M945 126v1M948 126v1M949 126v1M951 126v1M954 126v1M955 126v1M956 126v1M957 126v1M958 126v1M959 126v1M960 126v1M961 126v1M962 126v1M963 126v1M964 126v1M967 126v1M968 126v1M969 126v1M971 126v1M973 126v1M974 126v1M975 126v1M977 126v1M980 126v1M981 126v1M982 126v1M983 126v1M984 126v1M985 126v1M986 126v1M987 126v1M988 126v1M990 126v1M991 126v1M993 126v1M994 126v1M995 126v1M996 126v1M1000 126v1M1001 126v1M1002 126v1M1003 126v1M1007 126v1M1008 126v1M1009 126v1M1010 126v1M1011 126v1M1012 126v1M1014 126v1M1016 126v1M1017 126v1M1020 126v1" stroke="#ec18ec" stroke-opacity="1" stroke-width="1" fill="none" shape-rendering="crispEdges" transform="translate(0.5,0)"/>
<path d="M21 242v2M25 242v2M26 242v2M30 242v2M32 242v2M33 242v2M38 242v2M44 231v2M45 242v2M47 242v2M50 242v2M55 231v2M56 242v2M57 242v2M59 231v2M60 231v2M68 231v2M68 242v2M81 242v2M85 242v2M89 231v2M105 242v2M106 242v2M115 242v2M120 231v2M138 231v2M143 231v2M154 242v2M156 242v2M157 242v2M158 231v2M160 242v2M170 242v2M173 231v2M173 242v2M174 231v2M176 242v2M178 231v2M179 242v2M182 231v2M191 242v2M193 242v2M195 242v2M196 231v2M197 231v2M198 242v2M201 242v2M202 242v2M204 231v2M206 231v2M206 242v2M210 242v2M215 242v2M228 242v2M231 242v2M237 231v2M238 242v2M242 242v2M263 231v2M266 231v2M272 242v2M288 231v2M290 242v2M295 242v2M297 231v2M299 242v2M302 231v2M305 242v2M329 242v2M331 231v2M343 231v2M354 242v2M355 231v2M357 242v2M361 231v2M366 242v2M371 231v2M376 242v2M387 231v2M388 242v2M411 242v2M412 231v2M417 231v2M418 242v2M426 231v2M427 231v2M429 242v2M432 242v2M434 231v2M436 242v2M437 231v2M447 242v2M448 242v2M467 242v2M469 231v2M470 231v2M474 246v2M488 262v2M492 253v2M493 253v2M497 241v2M502 251v2M505 238v2M508 249v2M525 235v2M525 246v2M529 245v2M532 234v2M533 234v2M542 244v2M547 246v2M554 235v2M563 233v2M570 232v2M574 232v2M587 243v2M592 243v2M608 242v2M609 231v2M609 242v2M612 231v2M614 231v2M615 242v2M617 242v2M620 242v2M624 242v2M640 231v2M644 242v2M651 231v2M652 242v2M659 231v2M668 242v2M670 231v2M673 242v2M674 242v2M682 242v2M690 242v2M691 242v2M694 242v2M697 231v2M723 329v2M723 342v2M724 326v2M724 339v2M731 285v2M737 282v2M743 269v2M755 261v2M757 248v2M759 257v2M767 238v2M774 247v2M779 248v2M782 249v2M786 247v2M792 234v2M795 234v2M799 234v2M806 245v2M807 245v2M809 234v2M814 234v2M824 248v2M830 247v2M834 245v2M842 243v2M845 243v2M852 232v2M864 243v2M871 235v2M876 243v2M878 232v2M882 232v2M902 242v2M904 242v2M908 242v2M914 231v2M918 231v2M921 242v2M925 242v2M928 242v2M929 242v2M939 242v2M943 242v2M952 231v2M958 231v2M962 242v2M965 242v2M972 242v2M978 231v2M980 242v2M981 231v2M985 242v2M1002 242v2M1004 231v2M1010 231v2M1010 242v2" stroke="#003434" stroke-opacity="1" stroke-width="1" fill="none" shape-rendering="crispEdges" transform="translate(0.5,0)"/><path d="M21 233v2M22 233v2M23 233v2M24 233v2M25 233v2M26 233v2M27 233v2M29 233v2M30 233v2M31 233v2M33 233v2M34 233v2M38 233v2M40 233v2M41 233v2M42 233v2M43 233v2M44 233v2M45 233v2M46 233v2M47 233v2M48 233v2M51 233v2M52 233v2M53 233v2M55 233v2M56 233v2M62 233v2M63 233v2M65 233v2M67 233v2M68 233v2M70 233v2M74 233v2M75 233v2M76 233v2M79 233v2M81 233v2M82 233v2M85 233v2M91 233v2M92 233v2M93 233v2M95 233v2M96 233v2M98 233v2M99 233v2M100 233v2M103 233v2M104 233v2M106 233v2M107 233v2M110 233v2M111 233v2M113 233v2M115 233v2M117 233v2M118 233v2M119 233v2M121 233v2M122 233v2M123 233v2M124 233v2M126 233v2M128 233v2M130 233v2M131 233v2M138 233v2M139 233v2M144 233v2M145 233v2M146 233v2M147 233v2M149 233v2M150 233v2M151 233v2M157 233v2M158 233v2M159 233v2M161 233v2M162 233v2M165 233v2M166 233v2M167 233v2M168 233v2M169 233v2M171 233v2M173 233v2M174 233v2M177 233v2M178 233v2M179 233v2M180 233v2M181 233v2M183 233v2M184 233v2M185 233v2M186 233v2M188 233v2M189 233v2M194 233v2M195 233v2M196 233v2M197 233v2M198 233v2M200 233v2M202 233v2M204 233v2M205 233v2M206 233v2M209 233v2M211 233v2M212 233v2M213 233v2M215 233v2M219 233v2M220 233v2M223 233v2M224 233v2M226 233v2M228 233v2M229 233v2M234 233v2M236 233v2M238 233v2M239 233v2M242 233v2M244 233v2M246 233v2M248 233v2M250 233v2M252 233v2M253 233v2M257 233v2M258 233v2M261 233v2M263 233v2M264 233v2M265 233v2M266 233v2M267 233v2M271 233v2M272 233v2M273 233v2M274 233v2M277 233v2M278 233v2M279 233v2M281 233v2M284 233v2M285 233v2M286 233v2M287 233v2M289 233v2M291 233v2M294 233v2M295 233v2M296 233v2M298 233v2M300 233v2M301 233v2M302 233v2M303 233v2M304 233v2M307 233v2M308 233v2M309 233v2M310 233v2M311 233v2M313 233v2M314 233v2M317 233v2M318 233v2M320 233v2M322 233v2M323 233v2M324 233v2M327 233v2M328 233v2M329 233v2M330 233v2M331 233v2M332 233v2M334 233v2M335 233v2M338 233v2M339 233v2M340 233v2M341 233v2M343 233v2M345 233v2M346 233v2M349 233v2M351 233v2M353 233v2M354 233v2M356 233v2M358 233v2M362 233v2M365 233v2M367 233v2M369 233v2M370 233v2M371 233v2M375 233v2M376 233v2M377 233v2M378 233v2M379 233v2M380 233v2M382 233v2M383 233v2M384 233v2M385 233v2M386 233v2M389 233v2M390 233v2M391 233v2M393 233v2M398 233v2M401 233v2M403 233v2M404 233v2M405 233v2M407 233v2M411 233v2M412 233v2M413 233v2M417 233v2M418 233v2M419 233v2M423 233v2M425 233v2M426 233v2M428 233v2M429 233v2M431 233v2M434 233v2M435 233v2M437 233v2M438 233v2M440 233v2M441 233v2M443 233v2M444 233v2M445 233v2M446 233v2M448 233v2M449 233v2M451 233v2M452 233v2M453 233v2M454 233v2M458 233v2M460 233v2M461 233v2M466 233v2M468 233v2M469 233v2M470 233v2M473 233v2M474 234v2M477 284v2M478 280v2M479 276v11M480 272v2M482 267v2M484 261v2M486 256v2M488 252v2M489 250v2M491 245v2M492 244v2M493 244v2M494 243v2M496 243v2M497 243v2M498 243v2M499 242v2M501 242v2M502 242v2M503 241v2M504 241v2M505 240v2M506 239v2M508 239v2M509 242v12M510 248v11M511 247v11M512 246v2M514 245v2M515 244v2M517 242v2M519 240v2M520 239v2M521 238v2M522 238v2M523 237v2M524 237v2M525 237v2M526 237v2M527 237v2M528 237v2M529 236v2M531 236v2M534 236v2M535 235v2M536 235v2M538 235v2M539 235v2M540 235v2M541 235v2M542 235v2M543 235v2M544 235v2M545 236v2M546 237v2M548 237v2M549 236v2M551 236v2M552 236v2M554 237v2M555 237v2M556 238v2M557 237v2M559 236v2M560 235v2M562 235v2M563 235v2M565 235v2M566 235v2M567 235v2M569 235v2M576 234v2M577 234v2M579 234v2M584 234v2M586 234v2M587 234v2M588 234v2M589 234v2M590 234v2M591 234v2M592 234v2M593 234v2M594 234v2M595 234v2M596 234v2M598 234v2M601 233v2M604 233v2M605 233v2M606 233v2M611 233v2M613 233v2M614 233v2M615 233v2M616 233v2M617 233v2M618 233v2M620 233v2M621 233v2M622 233v2M624 233v2M625 233v2M626 233v2M627 233v2M631 233v2M632 233v2M634 233v2M635 233v2M637 233v2M641 233v2M643 233v2M647 233v2M649 233v2M651 233v2M652 233v2M653 233v2M655 233v2M656 233v2M657 233v2M658 233v2M659 233v2M660 233v2M661 233v2M662 233v2M664 233v2M665 233v2M666 233v2M669 233v2M671 233v2M673 233v2M676 233v2M677 233v2M681 233v2M682 233v2M683 233v2M684 233v2M685 233v2M686 233v2M688 233v2M691 233v2M694 233v2M695 233v2M696 233v2M697 233v2M698 233v2M700 233v2M701 234v2M707 321v2M709 325v12M712 352v12M718 331v2M719 334v2M721 336v2M723 331v2M724 328v2M725 323v12M726 317v12M727 311v12M728 304v13M729 297v13M730 292v11M733 281v2M734 279v2M735 277v2M736 274v2M738 269v2M739 266v2M740 263v2M743 260v2M744 260v2M745 259v2M747 254v2M748 251v2M750 252v2M751 253v2M752 254v2M755 252v2M757 250v2M758 249v2M759 248v2M761 246v2M762 245v2M763 244v2M764 243v2M765 242v2M766 241v2M767 240v2M768 239v2M770 239v2M771 239v2M774 238v2M775 238v2M776 238v2M777 238v2M779 239v2M781 241v2M783 240v2M784 239v2M786 238v2M787 238v2M788 237v2M791 237v2M792 236v2M801 236v2M802 236v2M803 236v2M806 236v2M808 236v2M810 236v2M811 236v2M813 236v2M815 236v2M816 236v2M817 236v2M819 236v2M820 236v2M821 236v2M822 236v2M823 237v2M826 239v2M830 238v2M831 237v2M832 237v2M834 236v2M835 235v2M836 234v2M838 234v2M840 234v2M841 234v2M843 234v2M844 234v2M845 234v2M846 234v2M847 234v2M849 234v2M850 234v2M851 234v2M853 234v2M857 234v2M858 234v2M859 234v2M860 234v2M861 234v2M863 234v2M864 234v2M867 234v2M868 235v2M869 237v2M870 237v2M871 237v2M873 235v2M874 235v2M875 235v2M877 234v2M878 234v2M880 234v2M881 234v2M885 234v2M888 233v2M890 233v2M893 233v2M895 233v2M897 233v2M898 233v2M899 233v2M902 233v2M903 233v2M904 233v2M905 233v2M906 233v2M907 233v2M910 233v2M913 233v2M915 233v2M917 233v2M920 233v2M921 233v2M922 233v2M925 233v2M926 233v2M929 233v2M930 233v2M931 233v2M932 233v2M933 233v2M934 233v2M936 233v2M937 233v2M938 233v2M941 233v2M945 233v2M946 233v2M947 233v2M949 233v2M950 233v2M951 233v2M952 233v2M953 233v2M954 233v2M955 233v2M956 233v2M957 233v2M958 233v2M959 233v2M960 233v2M961 233v2M962 233v2M964 233v2M965 233v2M966 233v2M969 233v2M970 233v2M975 233v2M980 233v2M981 233v2M983 233v2M984 233v2M985 233v2M986 233v2M987 233v2M991 233v2M992 233v2M993 233v2M994 233v2M995 233v2M1004 233v2M1006 233v2M1007 233v2M1008 233v2M1010 233v2M1012 233v2M1013 233v2M1014 233v2M1017 233v2" stroke="#007878" stroke-opacity="1" stroke-width="1" fill="none" shape-rendering="crispEdges" transform="translate(0.5,0)"/><path d="M28 233v2M32 233v2M35 233v2M36 233v2M37 233v2M39 233v2M49 233v2M50 233v2M54 233v2M57 233v2M58 233v2M59 233v2M60 233v2M61 233v2M64 233v2M66 233v2M69 233v2M71 233v2M72 233v2M73 233v2M77 233v2M78 233v2M80 233v2M83 233v2M84 233v2M86 233v2M87 233v2M88 233v2M89 233v2M90 233v2M94 233v2M97 233v2M101 233v2M102 233v2M105 233v2M108 233v2M109 233v2M112 233v2M114 233v2M116 233v2M120 233v2M125 233v2M127 233v2M129 233v2M132 233v2M133 233v2M134 233v2M135 233v2M136 233v2M137 233v2M140 233v2M141 233v2M142 233v2M143 233v2M148 233v2M152 233v2M153 233v2M154 233v2M155 233v2M156 233v2M160 233v2M163 233v2M164 233v2M170 233v2M172 233v2M175 233v2M176 233v2M182 233v2M187 233v2M190 233v2M191 233v2M192 233v2M193 233v2M199 233v2M201 233v2M203 233v2M207 233v2M208 233v2M210 233v2M214 233v2M216 233v2M217 233v2M218 233v2M221 233v2M222 233v2M225 233v2M227 233v2M230 233v2M231 233v2M232 233v2M233 233v2M235 233v2M237 233v2M240 233v2M241 233v2M243 233v2M245 233v2M247 233v2M249 233v2M251 233v2M254 233v2M255 233v2M256 233v2M259 233v2M260 233v2M262 233v2M268 233v2M269 233v2M270 233v2M275 233v2M276 233v2M280 233v2M282 233v2M283 233v2M288 233v2M290 233v2M292 233v2M293 233v2M297 233v2M299 233v2M305 233v2M306 233v2M312 233v2M315 233v2M316 233v2M319 233v2M321 233v2M325 233v2M326 233v2M333 233v2M336 233v2M337 233v2M342 233v2M344 233v2M347 233v2M348 233v2M350 233v2M352 233v2M355 233v2M357 233v2M359 233v2M360 233v2M361 233v2M363 233v2M364 233v2M366 233v2M368 233v2M372 233v2M373 233v2M374 233v2M381 233v2M387 233v2M388 233v2M392 233v2M394 233v2M395 233v2M396 233v2M397 233v2M399 233v2M400 233v2M402 233v2M406 233v2M408 233v2M409 233v2M410 233v2M414 233v2M415 233v2M416 233v2M420 233v2M421 233v2M422 233v2M424 233v2M427 233v2M430 233v2M432 233v2M433 233v2M436 233v2M439 233v2M442 233v2M447 233v2M450 233v2M455 233v2M456 233v2M457 233v2M459 233v2M462 233v2M463 233v2M464 233v2M465 233v2M467 233v2M471 233v2M472 233v2M481 270v2M483 264v2M485 259v2M487 254v2M490 247v2M495 243v2M500 242v2M507 238v2M513 245v2M516 243v2M518 241v2M530 236v2M532 236v2M533 236v2M537 235v2M547 237v2M550 236v2M553 236v2M558 236v2M561 235v2M564 235v2M568 235v2M570 234v2M571 234v2M572 234v2M573 234v2M574 234v2M575 234v2M578 234v2M580 234v2M581 234v2M582 234v2M583 234v2M585 234v2M597 234v2M599 234v2M600 233v2M602 233v2M603 233v2M607 233v2M608 233v2M609 233v2M610 233v2M612 233v2M619 233v2M623 233v2M628 233v2M629 233v2M630 233v2M633 233v2M636 233v2M638 233v2M639 233v2M640 233v2M642 233v2M644 233v2M645 233v2M646 233v2M648 233v2M650 233v2M654 233v2M663 233v2M667 233v2M668 233v2M670 233v2M672 233v2M674 233v2M675 233v2M678 233v2M679 233v2M680 233v2M687 233v2M689 233v2M690 233v2M692 233v2M693 233v2M699 233v2M708 323v2M716 320v2M720 336v2M722 334v2M731 287v2M732 283v2M737 271v2M741 261v2M742 260v2M746 257v2M749 251v2M753 253v2M754 252v2M756 251v2M760 247v2M769 239v2M772 238v2M773 238v2M778 238v2M780 240v2M782 240v2M785 238v2M789 237v2M790 237v2M793 236v2M794 236v2M795 236v2M796 236v2M797 236v2M798 236v2M799 236v2M800 236v2M804 236v2M805 236v2M807 236v2M809 236v2M812 236v2M814 236v2M818 236v2M824 239v2M825 239v2M827 239v2M828 238v2M829 238v2M833 237v2M837 234v2M839 234v2M842 234v2M848 234v2M852 234v2M854 234v2M855 234v2M856 234v2M862 234v2M865 234v2M866 234v2M872 236v2M876 234v2M879 234v2M882 234v2M883 234v2M884 234v2M886 234v2M887 233v2M889 233v2M891 233v2M892 233v2M894 233v2M896 233v2M900 233v2M901 233v2M908 233v2M909 233v2M911 233v2M912 233v2M914 233v2M916 233v2M918 233v2M919 233v2M923 233v2M924 233v2M927 233v2M928 233v2M935 233v2M939 233v2M940 233v2M942 233v2M943 233v2M944 233v2M948 233v2M963 233v2M967 233v2M968 233v2M971 233v2M972 233v2M973 233v2M974 233v2M976 233v2M977 233v2M978 233v2M979 233v2M982 233v2M988 233v2M989 233v2M990 233v2M996 233v2M997 233v2M998 233v2M999 233v2M1000 233v2M1001 233v2M1002 233v2M1003 233v2M1005 233v2M1009 233v2M1011 233v2M1015 233v2M1016 233v2M1018 233v2M1019 233v2" stroke="#009a9a" stroke-opacity="1" stroke-width="1" fill="none" shape-rendering="crispEdges" transform="translate(0.5,0)"/><path d="M21 239v3M22 239v3M24 239v3M25 239v3M27 239v3M28 239v3M31 239v3M32 239v3M33 239v3M34 239v3M36 239v3M37 239v3M39 239v3M40 239v3M42 239v3M44 239v3M46 239v3M47 239v3M48 239v3M50 239v3M51 239v3M52 239v3M53 239v3M57 239v3M60 239v3M61 239v3M63 239v3M64 239v3M65 239v3M67 239v3M69 239v3M70 239v3M72 239v3M73 239v3M74 239v3M75 239v3M77 239v3M78 239v3M79 239v3M80 239v3M81 239v3M82 239v3M84 239v3M86 239v3M87 239v3M88 239v3M90 239v3M91 239v3M94 239v3M97 239v3M98 239v3M100 239v3M101 239v3M102 239v3M103 239v3M104 239v3M105 239v3M107 239v3M108 239v3M109 239v3M111 239v3M112 239v3M115 239v3M119 239v3M120 239v3M121 239v3M123 239v3M126 239v3M127 239v3M128 239v3M129 239v3M131 239v3M133 239v3M135 239v3M136 239v3M137 239v3M138 239v3M140 239v3M141 239v3M142 239v3M143 239v3M144 239v3M145 239v3M146 239v3M147 239v3M148 239v3M149 239v3M150 239v3M152 239v3M153 239v3M154 239v3M156 239v3M157 239v3M159 239v3M163 239v3M165 239v3M166 239v3M168 239v3M169 239v3M170 239v3M171 239v3M172 239v3M173 239v3M174 239v3M175 239v3M177 239v3M178 239v3M179 239v3M180 239v3M183 239v3M186 239v3M187 239v3M188 239v3M189 239v3M190 239v3M191 239v3M192 239v3M195 239v3M196 239v3M197 239v3M198 239v3M199 239v3M200 239v3M202 239v3M203 239v3M204 239v3M205 239v3M206 239v3M208 239v3M211 239v3M213 239v3M214 239v3M217 239v3M218 239v3M219 239v3M221 239v3M224 239v3M227 239v3M229 239v3M231 239v3M232 239v3M234 239v3M235 239v3M236 239v3M237 239v3M238 239v3M239 239v3M240 239v3M246 239v3M247 239v3M248 239v3M249 239v3M250 239v3M252 239v3M253 239v3M254 239v3M256 239v3M257 239v3M258 239v3M259 239v3M262 239v3M264 239v3M265 239v3M266 239v3M268 239v3M270 239v3M274 239v3M275 239v3M277 239v3M278 239v3M279 239v3M280 239v3M286 239v3M287 239v3M289 239v3M290 239v3M291 239v3M292 239v3M294 239v3M297 239v3M298 239v3M300 239v3M301 239v3M302 239v3M304 239v3M305 239v3M306 239v3M308 239v3M310 239v3M311 239v3M312 239v3M313 239v3M314 239v3M315 239v3M316 239v3M318 239v3M322 239v3M324 239v3M325 239v3M326 239v3M328 239v3M330 239v3M331 239v3M334 239v3M335 239v3M336 239v3M339 239v3M341 239v3M342 239v3M343 239v3M344 239v3M345 239v3M347 239v3M348 239v3M349 239v3M350 239v3M351 239v3M353 239v3M354 239v3M357 239v3M359 239v3M360 239v3M361 239v3M363 239v3M364 239v3M365 239v3M366 239v3M368 239v3M370 239v3M371 239v3M373 239v3M374 239v3M376 239v3M378 239v3M379 239v3M380 239v3M383 239v3M386 239v3M387 239v3M389 239v3M392 239v3M393 239v3M395 239v3M396 239v3M397 239v3M399 239v3M400 239v3M401 239v3M404 239v3M405 239v3M406 239v3M407 239v3M408 239v3M410 239v3M411 239v3M414 239v3M415 239v3M416 239v3M418 239v3M419 239v3M421 239v3M422 239v3M423 239v3M424 239v3M425 239v3M426 239v3M427 239v3M429 239v3M430 239v3M433 239v3M434 239v3M436 239v3M437 239v3M438 239v3M439 239v3M440 239v3M442 239v3M443 239v3M444 239v3M445 239v3M446 239v3M447 239v3M449 239v3M451 239v3M454 239v3M456 239v3M457 239v3M460 239v3M464 239v3M465 239v3M466 239v3M467 239v3M468 239v3M469 239v3M471 239v3M472 239v3M473 239v3M478 289v3M480 280v3M481 277v3M482 275v3M485 266v3M486 264v3M488 259v3M491 252v3M492 250v3M494 249v3M496 249v3M498 249v3M499 248v3M500 248v3M501 248v3M502 248v3M503 247v3M505 246v3M506 245v3M507 244v3M508 246v3M512 252v3M516 249v3M517 248v3M518 247v3M519 246v3M521 244v3M523 243v3M524 243v3M527 243v3M528 243v3M530 242v3M532 242v3M533 242v3M536 241v3M537 241v3M538 241v3M540 241v3M541 241v3M542 241v3M543 241v3M545 242v3M546 243v3M548 243v3M549 242v3M550 242v3M553 242v3M556 244v3M557 243v3M558 242v3M562 241v3M563 241v3M564 241v3M566 241v3M567 241v3M568 241v3M569 241v3M570 240v3M571 240v3M572 240v3M573 240v3M574 240v3M575 240v3M576 240v3M577 240v3M578 240v3M579 240v3M583 240v3M585 240v3M586 240v3M587 240v3M589 240v3M595 240v3M597 240v3M598 240v3M599 240v3M601 239v3M604 239v3M607 239v3M609 239v3M610 239v3M612 239v3M614 239v3M616 239v3M617 239v3M618 239v3M619 239v3M620 239v3M621 239v3M622 239v3M623 239v3M625 239v3M626 239v3M630 239v3M631 239v3M634 239v3M636 239v3M637 239v3M640 239v3M641 239v3M642 239v3M645 239v3M647 239v3M648 239v3M649 239v3M650 239v3M651 239v3M652 239v3M653 239v3M657 239v3M658 239v3M659 239v3M660 239v3M661 239v3M662 239v3M663 239v3M665 239v3M666 239v3M668 239v3M669 239v3M670 239v3M672 239v3M674 239v3M677 239v3M678 239v3M679 239v3M684 239v3M685 239v3M686 239v3M688 239v3M690 239v3M691 239v3M694 239v3M695 239v3M698 239v3M701 242v3M707 329v3M716 327v3M718 339v3M720 342v3M721 342v3M723 339v3M733 288v3M734 286v3M735 284v3M736 282v3M737 279v3M738 276v3M739 274v3M741 268v3M742 266v3M744 266v3M745 265v3M746 264v3M747 262v3M748 259v3M749 257v3M750 258v3M751 259v3M752 260v3M753 259v3M756 257v3M757 256v3M758 255v3M761 252v3M763 250v3M765 248v3M769 245v3M770 245v3M771 245v3M772 244v3M773 244v3M774 244v3M775 244v3M776 244v3M777 244v3M778 244v3M779 245v3M782 246v3M783 246v3M784 245v3M785 244v3M786 244v3M787 244v3M788 243v3M789 243v3M790 243v3M791 243v3M792 242v3M794 242v3M796 242v3M798 242v3M800 242v3M801 242v3M803 242v3M804 242v3M805 242v3M806 242v3M808 242v3M810 242v3M811 242v3M812 242v3M813 242v3M814 242v3M815 242v3M816 242v3M818 242v3M819 242v3M820 242v3M821 242v3M822 242v3M823 244v3M826 245v3M828 244v3M829 244v3M830 244v3M831 243v3M833 243v3M834 242v3M835 241v3M837 240v3M838 240v3M839 240v3M840 240v3M841 240v3M842 240v3M844 240v3M845 240v3M847 240v3M848 240v3M849 240v3M851 240v3M853 240v3M855 240v3M857 240v3M860 240v3M861 240v3M862 240v3M863 240v3M864 240v3M865 240v3M866 240v3M869 244v3M871 243v3M872 242v3M876 240v3M877 240v3M878 240v3M879 240v3M880 240v3M881 240v3M882 240v3M884 240v3M885 240v3M887 239v3M888 239v3M889 239v3M891 239v3M893 239v3M894 239v3M896 239v3M898 239v3M900 239v3M901 239v3M902 239v3M903 239v3M904 239v3M905 239v3M906 239v3M907 239v3M908 239v3M909 239v3M910 239v3M911 239v3M914 239v3M915 239v3M918 239v3M920 239v3M921 239v3M922 239v3M925 239v3M926 239v3M928 239v3M929 239v3M930 239v3M931 239v3M932 239v3M933 239v3M935 239v3M938 239v3M939 239v3M940 239v3M942 239v3M943 239v3M944 239v3M945 239v3M946 239v3M947 239v3M948 239v3M950 239v3M951 239v3M952 239v3M953 239v3M954 239v3M956 239v3M957 239v3M958 239v3M959 239v3M962 239v3M963 239v3M964 239v3M966 239v3M967 239v3M968 239v3M969 239v3M970 239v3M977 239v3M981 239v3M982 239v3M984 239v3M985 239v3M986 239v3M987 239v3M988 239v3M989 239v3M991 239v3M992 239v3M993 239v3M994 239v3M995 239v3M996 239v3M997 239v3M998 239v3M999 239v3M1001 239v3M1003 239v3M1006 239v3M1007 239v3M1008 239v3M1009 239v3M1011 239v3M1015 239v3M1016 239v3M1018 239v3" stroke="#004c4c" stroke-opacity="1" stroke-width="1" fill="none" shape-rendering="crispEdges" transform="translate(0.5,0)"/><path d="M23 239v3M26 239v3M29 239v3M30 239v3M35 239v3M38 239v3M41 239v3M43 239v3M45 239v3M49 239v3M54 239v3M55 239v3M56 239v3M58 239v3M59 239v3M62 239v3M66 239v3M68 239v3M71 239v3M76 239v3M83 239v3M85 239v3M89 239v3M92 239v3M93 239v3M95 239v3M96 239v3M99 239v3M106 239v3M110 239v3M113 239v3M114 239v3M116 239v3M117 239v3M118 239v3M122 239v3M124 239v3M125 239v3M130 239v3M132 239v3M134 239v3M139 239v3M151 239v3M155 239v3M158 239v3M160 239v3M161 239v3M162 239v3M164 239v3M167 239v3M176 239v3M181 239v3M182 239v3M184 239v3M185 239v3M193 239v3M194 239v3M201 239v3M207 239v3M209 239v3M210 239v3M212 239v3M215 239v3M216 239v3M220 239v3M222 239v3M223 239v3M225 239v3M226 239v3M228 239v3M230 239v3M233 239v3M241 239v3M242 239v3M243 239v3M244 239v3M245 239v3M251 239v3M255 239v3M260 239v3M261 239v3M263 239v3M267 239v3M269 239v3M271 239v3M272 239v3M273 239v3M276 239v3M281 239v3M282 239v3M283 239v3M284 239v3M285 239v3M288 239v3M293 239v3M295 239v3M296 239v3M299 239v3M303 239v3M307 239v3M309 239v3M317 239v3M319 239v3M320 239v3M321 239v3M323 239v3M327 239v3M329 239v3M332 239v3M333 239v3M337 239v3M338 239v3M340 239v3M346 239v3M352 239v3M355 239v3M356 239v3M358 239v3M362 239v3M367 239v3M369 239v3M372 239v3M375 239v3M377 239v3M381 239v3M382 239v3M384 239v3M385 239v3M388 239v3M390 239v3M391 239v3M394 239v3M398 239v3M402 239v3M403 239v3M409 239v3M412 239v3M413 239v3M417 239v3M420 239v3M428 239v3M431 239v3M432 239v3M435 239v3M441 239v3M448 239v3M450 239v3M452 239v3M453 239v3M455 239v3M458 239v3M459 239v3M461 239v3M462 239v3M463 239v3M470 239v3M474 243v3M477 291v3M483 272v3M484 269v3M487 261v3M489 257v3M490 255v3M493 250v3M495 249v3M497 249v3M504 247v3M513 251v3M514 251v3M515 250v3M520 245v3M522 244v3M525 243v3M526 243v3M529 242v3M531 242v3M534 242v3M535 241v3M539 241v3M544 241v3M547 243v3M551 242v3M552 242v3M554 243v3M555 243v3M559 242v3M560 241v3M561 241v3M565 241v3M580 240v3M581 240v3M582 240v3M584 240v3M588 240v3M590 240v3M591 240v3M592 240v3M593 240v3M594 240v3M596 240v3M600 239v3M602 239v3M603 239v3M605 239v3M606 239v3M608 239v3M611 239v3M613 239v3M615 239v3M624 239v3M627 239v3M628 239v3M629 239v3M632 239v3M633 239v3M635 239v3M638 239v3M639 239v3M643 239v3M644 239v3M646 239v3M654 239v3M655 239v3M656 239v3M664 239v3M667 239v3M671 239v3M673 239v3M675 239v3M676 239v3M680 239v3M681 239v3M682 239v3M683 239v3M687 239v3M689 239v3M692 239v3M693 239v3M696 239v3M697 239v3M699 239v3M700 239v3M708 329v3M719 342v3M722 341v3M724 336v3M731 296v3M732 292v3M740 271v3M743 266v3M754 258v3M755 258v3M759 254v3M760 253v3M762 251v3M764 249v3M766 247v3M767 246v3M768 245v3M780 247v3M781 247v3M793 242v3M795 242v3M797 242v3M799 242v3M802 242v3M807 242v3M809 242v3M817 242v3M824 245v3M825 245v3M827 245v3M832 243v3M836 240v3M843 240v3M846 240v3M850 240v3M852 240v3M854 240v3M856 240v3M858 240v3M859 240v3M867 240v3M868 242v3M870 243v3M873 241v3M874 241v3M875 241v3M883 240v3M886 240v3M890 239v3M892 239v3M895 239v3M897 239v3M899 239v3M912 239v3M913 239v3M916 239v3M917 239v3M919 239v3M923 239v3M924 239v3M927 239v3M934 239v3M936 239v3M937 239v3M941 239v3M949 239v3M955 239v3M960 239v3M961 239v3M965 239v3M971 239v3M972 239v3M973 239v3M974 239v3M975 239v3M976 239v3M978 239v3M979 239v3M980 239v3M983 239v3M990 239v3M1000 239v3M1002 239v3M1004 239v3M1005 239v3M1010 239v3M1012 239v3M1013 239v3M1014 239v3M1017 239v3M1019 239v3" stroke="#006464" stroke-opacity="1" stroke-width="1" fill="none" shape-rendering="crispEdges" transform="translate(0.5,0)"/><path d="M475 239v30M476 267v23M702 237v14M703 248v18M704 264v24M705 286v25M706 308v17M710 330v16M711 343v18M713 340v15M714 330v14M715 322v12M717 321v14" stroke="#006468" stroke-opacity="1" stroke-width="1" fill="none" shape-rendering="crispEdges" transform="translate(0.5,0)"/><path d="M702 239v10M706 310v13M710 332v12M713 342v11M714 332v10M715 324v8M717 323v10" stroke="#00a0a4" stroke-opacity="1" stroke-width="1" fill="none" shape-rendering="crispEdges" transform="translate(0.5,0)"/><path d="M22 235v4M25 235v4M28 235v4M41 235v4M42 235v4M44 235v4M45 235v4M50 235v4M63 235v4M71 235v4M72 235v4M78 235v4M87 235v4M91 235v4M92 235v4M94 235v4M98 235v4M104 235v4M108 235v4M111 235v4M115 235v4M116 235v4M120 235v4M127 235v4M130 235v4M131 235v4M134 235v4M135 235v4M141 235v4M143 235v4M145 235v4M146 235v4M149 235v4M155 235v4M158 235v4M159 235v4M168 235v4M171 235v4M172 235v4M174 235v4M192 235v4M194 235v4M200 235v4M202 235v4M204 235v4M205 235v4M209 235v4M213 235v4M220 235v4M224 235v4M225 235v4M228 235v4M230 235v4M234 235v4M236 235v4M237 235v4M240 235v4M241 235v4M247 235v4M254 235v4M259 235v4M260 235v4M266 235v4M267 235v4M270 235v4M271 235v4M281 235v4M282 235v4M284 235v4M287 235v4M288 235v4M295 235v4M300 235v4M301 235v4M305 235v4M310 235v4M312 235v4M313 235v4M314 235v4M318 235v4M321 235v4M324 235v4M326 235v4M328 235v4M332 235v4M335 235v4M342 235v4M343 235v4M344 235v4M345 235v4M348 235v4M350 235v4M356 235v4M360 235v4M367 235v4M369 235v4M372 235v4M375 235v4M385 235v4M387 235v4M392 235v4M394 235v4M395 235v4M396 235v4M397 235v4M399 235v4M405 235v4M407 235v4M413 235v4M415 235v4M421 235v4M423 235v4M424 235v4M428 235v4M436 235v4M438 235v4M441 235v4M442 235v4M445 235v4M447 235v4M448 235v4M452 235v4M453 235v4M457 235v4M461 235v4M463 235v4M465 235v4M466 235v4M470 235v4M473 235v4M485 261v5M493 246v4M495 245v4M497 245v4M500 244v4M502 244v4M509 243v8M513 247v4M514 247v4M519 242v4M520 241v4M521 240v4M522 240v4M523 239v4M527 239v4M533 238v4M543 237v4M547 239v4M549 238v4M550 238v4M553 238v4M554 239v4M557 239v4M558 238v4M572 236v4M573 236v4M582 236v4M583 236v4M588 236v4M591 236v4M592 236v4M596 236v4M597 236v4M599 236v4M602 235v4M604 235v4M605 235v4M609 235v4M614 235v4M616 235v4M617 235v4M624 235v4M625 235v4M630 235v4M631 235v4M633 235v4M635 235v4M636 235v4M644 235v4M645 235v4M657 235v4M659 235v4M663 235v4M669 235v4M675 235v4M678 235v4M680 235v4M681 235v4M682 235v4M685 235v4M686 235v4M687 235v4M688 235v4M689 235v4M694 235v4M695 235v4M696 235v4M700 235v4M716 322v5M719 336v6M722 336v5M723 333v6M726 318v8M730 293v7M738 271v5M740 265v6M741 263v5M742 262v4M748 253v6M750 254v4M753 255v4M761 248v4M766 243v4M768 241v4M770 241v4M771 241v4M774 240v4M778 240v4M787 240v4M788 239v4M789 239v4M794 238v4M795 238v4M798 238v4M799 238v4M803 238v4M805 238v4M806 238v4M807 238v4M818 238v4M821 238v4M822 238v4M823 239v5M827 241v4M829 240v4M833 239v4M839 236v4M845 236v4M846 236v4M848 236v4M856 236v4M857 236v4M860 236v4M862 236v4M863 236v4M870 239v4M871 239v4M873 237v4M874 237v4M876 236v4M886 236v4M892 235v4M894 235v4M895 235v4M902 235v4M903 235v4M904 235v4M907 235v4M910 235v4M914 235v4M922 235v4M928 235v4M929 235v4M932 235v4M933 235v4M934 235v4M935 235v4M936 235v4M938 235v4M940 235v4M941 235v4M942 235v4M943 235v4M946 235v4M949 235v4M955 235v4M960 235v4M963 235v4M966 235v4M967 235v4M969 235v4M971 235v4M973 235v4M974 235v4M976 235v4M977 235v4M978 235v4M979 235v4M980 235v4M982 235v4M988 235v4M989 235v4M991 235v4M995 235v4M1002 235v4M1005 235v4M1009 235v4M1010 235v4M1011 235v4M1017 235v4M1018 235v4" stroke="#00c4c8" stroke-opacity="1" stroke-width="1" fill="none" shape-rendering="crispEdges" transform="translate(0.5,0)"/><path d="M21 235v4M23 235v4M24 235v4M26 235v4M27 235v4M29 235v4M30 235v4M31 235v4M32 235v4M33 235v4M34 235v4M35 235v4M36 235v4M37 235v4M38 235v4M39 235v4M40 235v4M43 235v4M46 235v4M47 235v4M48 235v4M49 235v4M51 235v4M52 235v4M53 235v4M54 235v4M55 235v4M56 235v4M57 235v4M58 235v4M59 235v4M60 235v4M61 235v4M62 235v4M64 235v4M65 235v4M66 235v4M67 235v4M68 235v4M69 235v4M70 235v4M73 235v4M74 235v4M75 235v4M76 235v4M77 235v4M79 235v4M80 235v4M81 235v4M82 235v4M83 235v4M84 235v4M85 235v4M86 235v4M88 235v4M89 235v4M90 235v4M93 235v4M95 235v4M96 235v4M97 235v4M99 235v4M100 235v4M101 235v4M102 235v4M103 235v4M105 235v4M106 235v4M107 235v4M109 235v4M110 235v4M112 235v4M113 235v4M114 235v4M117 235v4M118 235v4M119 235v4M121 235v4M122 235v4M123 235v4M124 235v4M125 235v4M126 235v4M128 235v4M129 235v4M132 235v4M133 235v4M136 235v4M137 235v4M138 235v4M139 235v4M140 235v4M142 235v4M144 235v4M147 235v4M148 235v4M150 235v4M151 235v4M152 235v4M153 235v4M154 235v4M156 235v4M157 235v4M160 235v4M161 235v4M162 235v4M163 235v4M164 235v4M165 235v4M166 235v4M167 235v4M169 235v4M170 235v4M173 235v4M175 235v4M176 235v4M177 235v4M178 235v4M179 235v4M180 235v4M181 235v4M182 235v4M183 235v4M184 235v4M185 235v4M186 235v4M187 235v4M188 235v4M189 235v4M190 235v4M191 235v4M193 235v4M195 235v4M196 235v4M197 235v4M198 235v4M199 235v4M201 235v4M203 235v4M206 235v4M207 235v4M208 235v4M210 235v4M211 235v4M212 235v4M214 235v4M215 235v4M216 235v4M217 235v4M218 235v4M219 235v4M221 235v4M222 235v4M223 235v4M226 235v4M227 235v4M229 235v4M231 235v4M232 235v4M233 235v4M235 235v4M238 235v4M239 235v4M242 235v4M243 235v4M244 235v4M245 235v4M246 235v4M248 235v4M249 235v4M250 235v4M251 235v4M252 235v4M253 235v4M255 235v4M256 235v4M257 235v4M258 235v4M261 235v4M262 235v4M263 235v4M264 235v4M265 235v4M268 235v4M269 235v4M272 235v4M273 235v4M274 235v4M275 235v4M276 235v4M277 235v4M278 235v4M279 235v4M280 235v4M283 235v4M285 235v4M286 235v4M289 235v4M290 235v4M291 235v4M292 235v4M293 235v4M294 235v4M296 235v4M297 235v4M298 235v4M299 235v4M302 235v4M303 235v4M304 235v4M306 235v4M307 235v4M308 235v4M309 235v4M311 235v4M315 235v4M316 235v4M317 235v4M319 235v4M320 235v4M322 235v4M323 235v4M325 235v4M327 235v4M329 235v4M330 235v4M331 235v4M333 235v4M334 235v4M336 235v4M337 235v4M338 235v4M339 235v4M340 235v4M341 235v4M346 235v4M347 235v4M349 235v4M351 235v4M352 235v4M353 235v4M354 235v4M355 235v4M357 235v4M358 235v4M359 235v4M361 235v4M362 235v4M363 235v4M364 235v4M365 235v4M366 235v4M368 235v4M370 235v4M371 235v4M373 235v4M374 235v4M376 235v4M377 235v4M378 235v4M379 235v4M380 235v4M381 235v4M382 235v4M383 235v4M384 235v4M386 235v4M388 235v4M389 235v4M390 235v4M391 235v4M393 235v4M398 235v4M400 235v4M401 235v4M402 235v4M403 235v4M404 235v4M406 235v4M408 235v4M409 235v4M410 235v4M411 235v4M412 235v4M414 235v4M416 235v4M417 235v4M418 235v4M419 235v4M420 235v4M422 235v4M425 235v4M426 235v4M427 235v4M429 235v4M430 235v4M431 235v4M432 235v4M433 235v4M434 235v4M435 235v4M437 235v4M439 235v4M440 235v4M443 235v4M444 235v4M446 235v4M449 235v4M450 235v4M451 235v4M454 235v4M455 235v4M456 235v4M458 235v4M459 235v4M460 235v4M462 235v4M464 235v4M467 235v4M468 235v4M469 235v4M471 235v4M472 235v4M474 236v7M477 286v5M478 282v7M479 277v7M480 274v6M481 272v5M482 269v6M483 266v6M484 263v6M486 258v6M487 256v5M488 254v5M489 252v5M490 249v6M491 247v5M492 246v4M494 245v4M496 245v4M498 245v4M499 244v4M501 244v4M503 243v4M504 243v4M505 242v4M506 241v4M507 240v4M508 241v5M510 249v7M511 248v7M512 248v4M515 246v4M516 245v4M517 244v4M518 243v4M524 239v4M525 239v4M526 239v4M528 239v4M529 238v4M530 238v4M531 238v4M532 238v4M534 238v4M535 237v4M536 237v4M537 237v4M538 237v4M539 237v4M540 237v4M541 237v4M542 237v4M544 237v4M545 238v4M546 239v4M548 239v4M551 238v4M552 238v4M555 239v4M556 240v4M559 238v4M560 237v4M561 237v4M562 237v4M563 237v4M564 237v4M565 237v4M566 237v4M567 237v4M568 237v4M569 237v4M570 236v4M571 236v4M574 236v4M575 236v4M576 236v4M577 236v4M578 236v4M579 236v4M580 236v4M581 236v4M584 236v4M585 236v4M586 236v4M587 236v4M589 236v4M590 236v4M593 236v4M594 236v4M595 236v4M598 236v4M600 235v4M601 235v4M603 235v4M606 235v4M607 235v4M608 235v4M610 235v4M611 235v4M612 235v4M613 235v4M615 235v4M618 235v4M619 235v4M620 235v4M621 235v4M622 235v4M623 235v4M626 235v4M627 235v4M628 235v4M629 235v4M632 235v4M634 235v4M637 235v4M638 235v4M639 235v4M640 235v4M641 235v4M642 235v4M643 235v4M646 235v4M647 235v4M648 235v4M649 235v4M650 235v4M651 235v4M652 235v4M653 235v4M654 235v4M655 235v4M656 235v4M658 235v4M660 235v4M661 235v4M662 235v4M664 235v4M665 235v4M666 235v4M667 235v4M668 235v4M670 235v4M671 235v4M672 235v4M673 235v4M674 235v4M676 235v4M677 235v4M679 235v4M683 235v4M684 235v4M690 235v4M691 235v4M692 235v4M693 235v4M697 235v4M698 235v4M699 235v4M701 236v6M707 323v6M708 325v4M709 326v8M712 353v8M718 333v6M720 338v4M721 338v4M724 330v6M725 324v8M727 312v8M728 305v9M729 298v9M731 289v7M732 285v7M733 283v5M734 281v5M735 279v5M736 276v6M737 273v6M739 268v6M743 262v4M744 262v4M745 261v4M746 259v5M747 256v6M749 253v4M751 255v4M752 256v4M754 254v4M755 254v4M756 253v4M757 252v4M758 251v4M759 250v4M760 249v4M762 247v4M763 246v4M764 245v4M765 244v4M767 242v4M769 241v4M772 240v4M773 240v4M775 240v4M776 240v4M777 240v4M779 241v4M780 242v5M781 243v4M782 242v4M783 242v4M784 241v4M785 240v4M786 240v4M790 239v4M791 239v4M792 238v4M793 238v4M796 238v4M797 238v4M800 238v4M801 238v4M802 238v4M804 238v4M808 238v4M809 238v4M810 238v4M811 238v4M812 238v4M813 238v4M814 238v4M815 238v4M816 238v4M817 238v4M819 238v4M820 238v4M824 241v4M825 241v4M826 241v4M828 240v4M830 240v4M831 239v4M832 239v4M834 238v4M835 237v4M836 236v4M837 236v4M838 236v4M840 236v4M841 236v4M842 236v4M843 236v4M844 236v4M847 236v4M849 236v4M850 236v4M851 236v4M852 236v4M853 236v4M854 236v4M855 236v4M858 236v4M859 236v4M861 236v4M864 236v4M865 236v4M866 236v4M867 236v4M868 237v5M869 239v5M872 238v4M875 237v4M877 236v4M878 236v4M879 236v4M880 236v4M881 236v4M882 236v4M883 236v4M884 236v4M885 236v4M887 235v4M888 235v4M889 235v4M890 235v4M891 235v4M893 235v4M896 235v4M897 235v4M898 235v4M899 235v4M900 235v4M901 235v4M905 235v4M906 235v4M908 235v4M909 235v4M911 235v4M912 235v4M913 235v4M915 235v4M916 235v4M917 235v4M918 235v4M919 235v4M920 235v4M921 235v4M923 235v4M924 235v4M925 235v4M926 235v4M927 235v4M930 235v4M931 235v4M937 235v4M939 235v4M944 235v4M945 235v4M947 235v4M948 235v4M950 235v4M951 235v4M952 235v4M953 235v4M954 235v4M956 235v4M957 235v4M958 235v4M959 235v4M961 235v4M962 235v4M964 235v4M965 235v4M968 235v4M970 235v4M972 235v4M975 235v4M981 235v4M983 235v4M984 235v4M985 235v4M986 235v4M987 235v4M990 235v4M992 235v4M993 235v4M994 235v4M996 235v4M997 235v4M998 235v4M999 235v4M1000 235v4M1001 235v4M1003 235v4M1004 235v4M1006 235v4M1007 235v4M1008 235v4M1012 235v4M1013 235v4M1014 235v4M1015 235v4M1016 235v4M1019 235v4" stroke="#00e4e4" stroke-opacity="1" stroke-width="1" fill="none" shape-rendering="crispEdges" transform="translate(0.5,0)"/><rect x="706" y="322" width="3" height="6" fill="#00b8bc"/><rect x="718" y="335" width="4" height="6" fill="#00d0d4"/>
<path d="M21 30h1M21 43h1M21 56h1M21 69h1M21 82h1M21 95h1M21 108h1M21 121h1M21 134h1M21 147h1M21 160h1M21 173h1M21 186h1M21 199h1M21 212h1M21 225h1M21 238h1M21 251h1M21 264h1M21 277h1M21 290h1M21 303h1M21 316h1M21 329h1M21 342h1M21 355h1M21 368h1M21 381h1M21 394h1M21 407h1M21 420h1M21 433h1M21 446h1M21 459h1M21 472h1M21 485h1M21 498h1M21 511h1M21 524h1M21 537h1M21 550h1M21 563h1M21 576h1M21 589h1M21 602h1M21 615h1M21 628h1M21 641h1M21 654h1M23 30h1M23 43h1M23 56h1M23 69h1M23 82h1M23 95h1M23 108h1M23 121h1M23 134h1M23 147h1M23 160h1M23 173h1M23 186h1M23 199h1M23 212h1M23 225h1M23 238h1M23 251h1M23 264h1M23 277h1M23 290h1M23 303h1M23 316h1M23 329h1M23 342h1M23 355h1M23 368h1M23 381h1M23 394h1M23 407h1M23 420h1M23 433h1M23 446h1M23 459h1M23 472h1M23 485h1M23 498h1M23 511h1M23 524h1M23 537h1M23 550h1M23 563h1M23 576h1M23 589h1M23 602h1M23 615h1M23 628h1M23 641h1M23 654h1M25 82h1M25 147h1M25 212h1M25 277h1M25 342h1M25 407h1M25 472h1M25 537h1M25 602h1M27 342h1M29 342h1M31 342h1M33 342h1M35 342h1M37 342h1M39 342h1M41 17h1M41 19h1M41 82h1M41 147h1M41 212h1M41 277h1M41 339h1M41 342h1M41 345h1M41 407h1M41 472h1M41 537h1M41 602h1M41 665h1M41 667h1M43 342h1M45 342h1M47 342h1M49 342h1M51 342h1M53 342h1M55 342h1M57 342h1M59 342h1M61 17h1M61 19h1M61 82h1M61 147h1M61 212h1M61 277h1M61 339h1M61 342h1M61 345h1M61 407h1M61 472h1M61 537h1M61 602h1M61 665h1M61 667h1M63 342h1M65 342h1M67 342h1M69 342h1M71 342h1M73 342h1M75 342h1M77 342h1M79 342h1M81 17h1M81 19h1M81 82h1M81 147h1M81 212h1M81 277h1M81 339h1M81 342h1M81 345h1M81 407h1M81 472h1M81 537h1M81 602h1M81 665h1M81 667h1M83 342h1M85 342h1M87 342h1M89 342h1M91 342h1M93 342h1M95 342h1M97 342h1M99 342h1M101 17h1M101 19h1M101 82h1M101 147h1M101 212h1M101 277h1M101 339h1M101 342h1M101 345h1M101 407h1M101 472h1M101 537h1M101 602h1M101 665h1M101 667h1M103 342h1M105 342h1M107 342h1M109 342h1M111 342h1M113 342h1M115 342h1M117 342h1M119 342h1M121 17h1M121 19h1M121 22h1M121 30h1M121 43h1M121 56h1M121 69h1M121 82h1M121 95h1M121 108h1M121 121h1M121 134h1M121 147h1M121 160h1M121 173h1M121 186h1M121 199h1M121 212h1M121 225h1M121 238h1M121 251h1M121 264h1M121 277h1M121 290h1M121 303h1M121 316h1M121 329h1M121 336h1M121 338h1M121 340h1M121 342h1M121 344h1M121 346h1M121 348h1M121 355h1M121 368h1M121 381h1M121 394h1M121 407h1M121 420h1M121 433h1M121 446h1M121 459h1M121 472h1M121 485h1M121 498h1M121 511h1M121 524h1M121 537h1M121 550h1M121 563h1M121 576h1M121 589h1M121 602h1M121 615h1M121 628h1M121 641h1M121 654h1M121 662h1M121 665h1M121 667h1M123 342h1M125 342h1M127 342h1M129 342h1M131 342h1M133 342h1M135 342h1M137 342h1M139 342h1M141 17h1M141 19h1M141 82h1M141 147h1M141 212h1M141 277h1M141 339h1M141 342h1M141 345h1M141 407h1M141 472h1M141 537h1M141 602h1M141 665h1M141 667h1M143 342h1M145 342h1M147 342h1M149 342h1M151 342h1M153 342h1M155 342h1M157 342h1M159 342h1M161 17h1M161 19h1M161 82h1M161 147h1M161 212h1M161 277h1M161 339h1M161 342h1M161 345h1M161 407h1M161 472h1M161 537h1M161 602h1M161 665h1M161 667h1M163 342h1M165 342h1M167 342h1M169 342h1M171 342h1M173 342h1M175 342h1M177 342h1M179 342h1M181 17h1M181 19h1M181 82h1M181 147h1M181 212h1M181 277h1M181 339h1M181 342h1M181 345h1M181 407h1M181 472h1M181 537h1M181 602h1M181 665h1M181 667h1M183 342h1M185 342h1M187 342h1M189 342h1M191 342h1M193 342h1M195 342h1M197 342h1M199 342h1M201 17h1M201 19h1M201 82h1M201 147h1M201 212h1M201 277h1M201 339h1M201 342h1M201 345h1M201 407h1M201 472h1M201 537h1M201 602h1M201 665h1M201 667h1M203 342h1M205 342h1M207 342h1M209 342h1M211 342h1M213 342h1M215 342h1M217 342h1M219 342h1M221 17h1M221 19h1M221 22h1M221 30h1M221 43h1M221 56h1M221 69h1M221 82h1M221 95h1M221 108h1M221 121h1M221 134h1M221 147h1M221 160h1M221 173h1M221 186h1M221 199h1M221 212h1M221 225h1M221 238h1M221 251h1M221 264h1M221 277h1M221 290h1M221 303h1M221 316h1M221 329h1M221 336h1M221 338h1M221 340h1M221 342h1M221 344h1M221 346h1M221 348h1M221 355h1M221 368h1M221 381h1M221 394h1M221 407h1M221 420h1M221 433h1M221 446h1M221 459h1M221 472h1M221 485h1M221 498h1M221 511h1M221 524h1M221 537h1M221 550h1M221 563h1M221 576h1M221 589h1M221 602h1M221 615h1M221 628h1M221 641h1M221 654h1M221 662h1M221 665h1M221 667h1M223 342h1M225 342h1M227 342h1M229 342h1M231 342h1M233 342h1M235 342h1M237 342h1M239 342h1M241 17h1M241 19h1M241 82h1M241 147h1M241 212h1M241 277h1M241 339h1M241 342h1M241 345h1M241 407h1M241 472h1M241 537h1M241 602h1M241 665h1M241 667h1M243 342h1M245 342h1M247 342h1M249 342h1M251 342h1M253 342h1M255 342h1M257 342h1M259 342h1M261 17h1M261 19h1M261 82h1M261 147h1M261 212h1M261 277h1M261 339h1M261 342h1M261 345h1M261 407h1M261 472h1M261 537h1M261 602h1M261 665h1M261 667h1M263 342h1M265 342h1M267 342h1M269 342h1M271 342h1M273 342h1M275 342h1M277 342h1M279 342h1M281 17h1M281 19h1M281 82h1M281 147h1M281 212h1M281 277h1M281 339h1M281 342h1M281 345h1M281 407h1M281 472h1M281 537h1M281 602h1M281 665h1M281 667h1M283 342h1M285 342h1M287 342h1M289 342h1M291 342h1M293 342h1M295 342h1M297 342h1M299 342h1M301 17h1M301 19h1M301 82h1M301 147h1M301 212h1M301 277h1M301 339h1M301 342h1M301 345h1M301 407h1M301 472h1M301 537h1M301 602h1M301 665h1M301 667h1M303 342h1M305 342h1M307 342h1M309 342h1M311 342h1M313 342h1M315 342h1M317 342h1M319 342h1M321 17h1M321 19h1M321 22h1M321 30h1M321 43h1M321 56h1M321 69h1M321 82h1M321 95h1M321 108h1M321 121h1M321 134h1M321 147h1M321 160h1M321 173h1M321 186h1M321 199h1M321 212h1M321 225h1M321 238h1M321 251h1M321 264h1M321 277h1M321 290h1M321 303h1M321 316h1M321 329h1M321 336h1M321 338h1M321 340h1M321 342h1M321 344h1M321 346h1M321 348h1M321 355h1M321 368h1M321 381h1M321 394h1M321 407h1M321 420h1M321 433h1M321 446h1M321 459h1M321 472h1M321 485h1M321 498h1M321 511h1M321 524h1M321 537h1M321 550h1M321 563h1M321 576h1M321 589h1M321 602h1M321 615h1M321 628h1M321 641h1M321 654h1M321 662h1M321 665h1M321 667h1M323 342h1M325 342h1M327 342h1M329 342h1M331 342h1M333 342h1M335 342h1M337 342h1M339 342h1M341 17h1M341 19h1M341 82h1M341 147h1M341 212h1M341 277h1M341 339h1M341 342h1M341 345h1M341 407h1M341 472h1M341 537h1M341 602h1M341 665h1M341 667h1M343 342h1M345 342h1M347 342h1M349 342h1M351 342h1M353 342h1M355 342h1M357 342h1M359 342h1M361 17h1M361 19h1M361 82h1M361 147h1M361 212h1M361 277h1M361 339h1M361 342h1M361 345h1M361 407h1M361 472h1M361 537h1M361 602h1M361 665h1M361 667h1M363 342h1M365 342h1M367 342h1M369 342h1M371 342h1M373 342h1M375 342h1M377 342h1M379 342h1M381 17h1M381 19h1M381 82h1M381 147h1M381 212h1M381 277h1M381 339h1M381 342h1M381 345h1M381 407h1M381 472h1M381 537h1M381 602h1M381 665h1M381 667h1M383 342h1M385 342h1M387 342h1M389 342h1M391 342h1M393 342h1M395 342h1M397 342h1M399 342h1M401 17h1M401 19h1M401 82h1M401 147h1M401 212h1M401 277h1M401 339h1M401 342h1M401 345h1M401 407h1M401 472h1M401 537h1M401 602h1M401 665h1M401 667h1M403 342h1M405 342h1M407 342h1M409 342h1M411 342h1M413 342h1M415 342h1M417 342h1M419 342h1M421 17h1M421 19h1M421 22h1M421 30h1M421 43h1M421 56h1M421 69h1M421 82h1M421 95h1M421 108h1M421 121h1M421 134h1M421 147h1M421 160h1M421 173h1M421 186h1M421 199h1M421 212h1M421 225h1M421 238h1M421 251h1M421 264h1M421 277h1M421 290h1M421 303h1M421 316h1M421 329h1M421 336h1M421 338h1M421 340h1M421 342h1M421 344h1M421 346h1M421 348h1M421 355h1M421 368h1M421 381h1M421 394h1M421 407h1M421 420h1M421 433h1M421 446h1M421 459h1M421 472h1M421 485h1M421 498h1M421 511h1M421 524h1M421 537h1M421 550h1M421 563h1M421 576h1M421 589h1M421 602h1M421 615h1M421 628h1M421 641h1M421 654h1M421 662h1M421 665h1M421 667h1M423 342h1M425 342h1M427 342h1M429 342h1M431 342h1M433 342h1M435 342h1M437 342h1M439 342h1M441 17h1M441 19h1M441 82h1M441 147h1M441 212h1M441 277h1M441 339h1M441 342h1M441 345h1M441 407h1M441 472h1M441 537h1M441 602h1M441 665h1M441 667h1M443 342h1M445 342h1M447 342h1M449 342h1M451 342h1M453 342h1M455 342h1M457 342h1M459 342h1M461 17h1M461 19h1M461 82h1M461 147h1M461 212h1M461 277h1M461 339h1M461 342h1M461 345h1M461 407h1M461 472h1M461 537h1M461 602h1M461 665h1M461 667h1M463 342h1M465 342h1M467 342h1M469 342h1M471 342h1M473 342h1M475 342h1M477 342h1M479 342h1M481 17h1M481 19h1M481 82h1M481 147h1M481 212h1M481 277h1M481 339h1M481 342h1M481 345h1M481 407h1M481 472h1M481 537h1M481 602h1M481 665h1M481 667h1M483 342h1M485 342h1M487 342h1M489 342h1M491 342h1M493 342h1M495 342h1M497 342h1M499 342h1M501 17h1M501 19h1M501 82h1M501 147h1M501 212h1M501 277h1M501 339h1M501 342h1M501 345h1M501 407h1M501 472h1M501 537h1M501 602h1M501 665h1M501 667h1M503 342h1M505 342h1M507 342h1M509 342h1M511 342h1M513 342h1M515 82h1M515 147h1M515 212h1M515 277h1M515 342h1M515 407h1M515 472h1M515 537h1M515 602h1M517 82h1M517 147h1M517 212h1M517 277h1M517 342h1M517 407h1M517 472h1M517 537h1M517 602h1M518 30h1M518 43h1M518 56h1M518 69h1M518 95h1M518 108h1M518 121h1M518 134h1M518 160h1M518 173h1M518 186h1M518 199h1M518 225h1M518 238h1M518 251h1M518 264h1M518 290h1M518 303h1M518 316h1M518 329h1M518 355h1M518 368h1M518 381h1M518 394h1M518 420h1M518 433h1M518 446h1M518 459h1M518 485h1M518 498h1M518 511h1M518 524h1M518 550h1M518 563h1M518 576h1M518 589h1M518 615h1M518 628h1M518 641h1M518 654h1M519 82h1M519 147h1M519 212h1M519 277h1M519 342h1M519 407h1M519 472h1M519 537h1M519 602h1M520 30h1M520 43h1M520 56h1M520 69h1M520 95h1M520 108h1M520 121h1M520 134h1M520 160h1M520 173h1M520 186h1M520 199h1M520 225h1M520 238h1M520 251h1M520 264h1M520 290h1M520 303h1M520 316h1M520 329h1M520 355h1M520 368h1M520 381h1M520 394h1M520 420h1M520 433h1M520 446h1M520 459h1M520 485h1M520 498h1M520 511h1M520 524h1M520 550h1M520 563h1M520 576h1M520 589h1M520 615h1M520 628h1M520 641h1M520 654h1M521 17h1M521 19h1M521 20h1M521 22h1M521 25h1M521 27h1M521 30h1M521 33h1M521 35h1M521 38h1M521 40h1M521 43h1M521 46h1M521 48h1M521 51h1M521 53h1M521 56h1M521 59h1M521 61h1M521 64h1M521 66h1M521 69h1M521 72h1M521 74h1M521 77h1M521 79h1M521 82h1M521 85h1M521 87h1M521 90h1M521 92h1M521 95h1M521 98h1M521 100h1M521 103h1M521 105h1M521 108h1M521 111h1M521 113h1M521 116h1M521 118h1M521 121h1M521 124h1M521 126h1M521 129h1M521 131h1M521 134h1M521 137h1M521 139h1M521 142h1M521 144h1M521 147h1M521 150h1M521 152h1M521 155h1M521 157h1M521 160h1M521 163h1M521 165h1M521 168h1M521 170h1M521 173h1M521 176h1M521 178h1M521 181h1M521 183h1M521 186h1M521 189h1M521 191h1M521 194h1M521 196h1M521 199h1M521 202h1M521 204h1M521 207h1M521 209h1M521 212h1M521 215h1M521 217h1M521 220h1M521 222h1M521 225h1M521 228h1M521 230h1M521 233h1M521 235h1M521 238h1M521 241h1M521 243h1M521 246h1M521 248h1M521 251h1M521 254h1M521 256h1M521 259h1M521 261h1M521 264h1M521 267h1M521 269h1M521 272h1M521 274h1M521 277h1M521 280h1M521 282h1M521 285h1M521 287h1M521 290h1M521 293h1M521 295h1M521 298h1M521 300h1M521 303h1M521 306h1M521 308h1M521 311h1M521 313h1M521 316h1M521 319h1M521 321h1M521 324h1M521 326h1M521 329h1M521 332h1M521 334h1M521 336h1M521 337h1M521 338h1M521 339h1M521 340h1M521 342h1M521 344h1M521 345h1M521 346h1M521 347h1M521 348h1M521 350h1M521 352h1M521 355h1M521 358h1M521 360h1M521 363h1M521 365h1M521 368h1M521 371h1M521 373h1M521 376h1M521 378h1M521 381h1M521 384h1M521 386h1M521 389h1M521 391h1M521 394h1M521 397h1M521 399h1M521 402h1M521 404h1M521 407h1M521 410h1M521 412h1M521 415h1M521 417h1M521 420h1M521 423h1M521 425h1M521 428h1M521 430h1M521 433h1M521 436h1M521 438h1M521 441h1M521 443h1M521 446h1M521 449h1M521 451h1M521 454h1M521 456h1M521 459h1M521 462h1M521 464h1M521 467h1M521 469h1M521 472h1M521 475h1M521 477h1M521 480h1M521 482h1M521 485h1M521 488h1M521 490h1M521 493h1M521 495h1M521 498h1M521 501h1M521 503h1M521 506h1M521 508h1M521 511h1M521 514h1M521 516h1M521 519h1M521 521h1M521 524h1M521 527h1M521 529h1M521 532h1M521 534h1M521 537h1M521 540h1M521 542h1M521 545h1M521 547h1M521 550h1M521 553h1M521 555h1M521 558h1M521 560h1M521 563h1M521 566h1M521 568h1M521 571h1M521 573h1M521 576h1M521 579h1M521 581h1M521 584h1M521 586h1M521 589h1M521 592h1M521 594h1M521 597h1M521 599h1M521 602h1M521 605h1M521 607h1M521 610h1M521 612h1M521 615h1M521 618h1M521 620h1M521 623h1M521 625h1M521 628h1M521 631h1M521 633h1M521 636h1M521 638h1M521 641h1M521 644h1M521 646h1M521 649h1M521 651h1M521 654h1M521 657h1M521 659h1M521 662h1M521 664h1M521 665h1M521 667h1M522 30h1M522 43h1M522 56h1M522 69h1M522 95h1M522 108h1M522 121h1M522 134h1M522 160h1M522 173h1M522 186h1M522 199h1M522 225h1M522 238h1M522 251h1M522 264h1M522 290h1M522 303h1M522 316h1M522 329h1M522 355h1M522 368h1M522 381h1M522 394h1M522 420h1M522 433h1M522 446h1M522 459h1M522 485h1M522 498h1M522 511h1M522 524h1M522 550h1M522 563h1M522 576h1M522 589h1M522 615h1M522 628h1M522 641h1M522 654h1M523 82h1M523 147h1M523 212h1M523 277h1M523 342h1M523 407h1M523 472h1M523 537h1M523 602h1M524 30h1M524 43h1M524 56h1M524 69h1M524 95h1M524 108h1M524 121h1M524 134h1M524 160h1M524 173h1M524 186h1M524 199h1M524 225h1M524 238h1M524 251h1M524 264h1M524 290h1M524 303h1M524 316h1M524 329h1M524 355h1M524 368h1M524 381h1M524 394h1M524 420h1M524 433h1M524 446h1M524 459h1M524 485h1M524 498h1M524 511h1M524 524h1M524 550h1M524 563h1M524 576h1M524 589h1M524 615h1M524 628h1M524 641h1M524 654h1M525 82h1M525 147h1M525 212h1M525 277h1M525 342h1M525 407h1M525 472h1M525 537h1M525 602h1M527 82h1M527 147h1M527 212h1M527 277h1M527 342h1M527 407h1M527 472h1M527 537h1M527 602h1M529 342h1M531 342h1M533 342h1M535 342h1M537 342h1M539 342h1M541 17h1M541 19h1M541 82h1M541 147h1M541 212h1M541 277h1M541 339h1M541 342h1M541 345h1M541 407h1M541 472h1M541 537h1M541 602h1M541 665h1M541 667h1M543 342h1M545 342h1M547 342h1M549 342h1M551 342h1M553 342h1M555 342h1M557 342h1M559 342h1M561 17h1M561 19h1M561 82h1M561 147h1M561 212h1M561 277h1M561 339h1M561 342h1M561 345h1M561 407h1M561 472h1M561 537h1M561 602h1M561 665h1M561 667h1M563 342h1M565 342h1M567 342h1M569 342h1M571 342h1M573 342h1M575 342h1M577 342h1M579 342h1M581 17h1M581 19h1M581 82h1M581 147h1M581 212h1M581 277h1M581 339h1M581 342h1M581 345h1M581 407h1M581 472h1M581 537h1M581 602h1M581 665h1M581 667h1M583 342h1M585 342h1M587 342h1M589 342h1M591 342h1M593 342h1M595 342h1M597 342h1M599 342h1M601 17h1M601 19h1M601 82h1M601 147h1M601 212h1M601 277h1M601 339h1M601 342h1M601 345h1M601 407h1M601 472h1M601 537h1M601 602h1M601 665h1M601 667h1M603 342h1M605 342h1M607 342h1M609 342h1M611 342h1M613 342h1M615 342h1M617 342h1M619 342h1M621 17h1M621 19h1M621 22h1M621 30h1M621 43h1M621 56h1M621 69h1M621 82h1M621 95h1M621 108h1M621 121h1M621 134h1M621 147h1M621 160h1M621 173h1M621 186h1M621 199h1M621 212h1M621 225h1M621 238h1M621 251h1M621 264h1M621 277h1M621 290h1M621 303h1M621 316h1M621 329h1M621 336h1M621 338h1M621 340h1M621 342h1M621 344h1M621 346h1M621 348h1M621 355h1M621 368h1M621 381h1M621 394h1M621 407h1M621 420h1M621 433h1M621 446h1M621 459h1M621 472h1M621 485h1M621 498h1M621 511h1M621 524h1M621 537h1M621 550h1M621 563h1M621 576h1M621 589h1M621 602h1M621 615h1M621 628h1M621 641h1M621 654h1M621 662h1M621 665h1M621 667h1M623 342h1M625 342h1M627 342h1M629 342h1M631 342h1M633 342h1M635 342h1M637 342h1M639 342h1M641 17h1M641 19h1M641 82h1M641 147h1M641 212h1M641 277h1M641 339h1M641 342h1M641 345h1M641 407h1M641 472h1M641 537h1M641 602h1M641 665h1M641 667h1M643 342h1M645 342h1M647 342h1M649 342h1M651 342h1M653 342h1M655 342h1M657 342h1M659 342h1M661 17h1M661 19h1M661 82h1M661 147h1M661 212h1M661 277h1M661 339h1M661 342h1M661 345h1M661 407h1M661 472h1M661 537h1M661 602h1M661 665h1M661 667h1M663 342h1M665 342h1M667 342h1M669 342h1M671 342h1M673 342h1M675 342h1M677 342h1M679 342h1M681 17h1M681 19h1M681 82h1M681 147h1M681 212h1M681 277h1M681 339h1M681 342h1M681 345h1M681 407h1M681 472h1M681 537h1M681 602h1M681 665h1M681 667h1M683 342h1M685 342h1M687 342h1M689 342h1M691 342h1M693 342h1M695 342h1M697 342h1M699 342h1M701 17h1M701 19h1M701 82h1M701 147h1M701 212h1M701 277h1M701 339h1M701 342h1M701 345h1M701 407h1M701 472h1M701 537h1M701 602h1M701 665h1M701 667h1M703 342h1M705 342h1M707 342h1M709 342h1M711 342h1M713 342h1M715 342h1M717 342h1M719 342h1M721 17h1M721 19h1M721 22h1M721 30h1M721 43h1M721 56h1M721 69h1M721 82h1M721 95h1M721 108h1M721 121h1M721 134h1M721 147h1M721 160h1M721 173h1M721 186h1M721 199h1M721 212h1M721 225h1M721 238h1M721 251h1M721 264h1M721 277h1M721 290h1M721 303h1M721 316h1M721 329h1M721 336h1M721 338h1M721 340h1M721 342h1M721 344h1M721 346h1M721 348h1M721 355h1M721 368h1M721 381h1M721 394h1M721 407h1M721 420h1M721 433h1M721 446h1M721 459h1M721 472h1M721 485h1M721 498h1M721 511h1M721 524h1M721 537h1M721 550h1M721 563h1M721 576h1M721 589h1M721 602h1M721 615h1M721 628h1M721 641h1M721 654h1M721 662h1M721 665h1M721 667h1M723 342h1M725 342h1M727 342h1M729 342h1M731 342h1M733 342h1M735 342h1M737 342h1M739 342h1M741 17h1M741 19h1M741 82h1M741 147h1M741 212h1M741 277h1M741 339h1M741 342h1M741 345h1M741 407h1M741 472h1M741 537h1M741 602h1M741 665h1M741 667h1M743 342h1M745 342h1M747 342h1M749 342h1M751 342h1M753 342h1M755 342h1M757 342h1M759 342h1M761 17h1M761 19h1M761 82h1M761 147h1M761 212h1M761 277h1M761 339h1M761 342h1M761 345h1M761 407h1M761 472h1M761 537h1M761 602h1M761 665h1M761 667h1M763 342h1M765 342h1M767 342h1M769 342h1M771 342h1M773 342h1M775 342h1M777 342h1M779 342h1M781 17h1M781 19h1M781 82h1M781 147h1M781 212h1M781 277h1M781 339h1M781 342h1M781 345h1M781 407h1M781 472h1M781 537h1M781 602h1M781 665h1M781 667h1M783 342h1M785 342h1M787 342h1M789 342h1M791 342h1M793 342h1M795 342h1M797 342h1M799 342h1M801 17h1M801 19h1M801 82h1M801 147h1M801 212h1M801 277h1M801 339h1M801 342h1M801 345h1M801 407h1M801 472h1M801 537h1M801 602h1M801 665h1M801 667h1M803 342h1M805 342h1M807 342h1M809 342h1M811 342h1M813 342h1M815 342h1M817 342h1M819 342h1M821 17h1M821 19h1M821 22h1M821 30h1M821 43h1M821 56h1M821 69h1M821 82h1M821 95h1M821 108h1M821 121h1M821 134h1M821 147h1M821 160h1M821 173h1M821 186h1M821 199h1M821 212h1M821 225h1M821 238h1M821 251h1M821 264h1M821 277h1M821 290h1M821 303h1M821 316h1M821 329h1M821 336h1M821 338h1M821 340h1M821 342h1M821 344h1M821 346h1M821 348h1M821 355h1M821 368h1M821 381h1M821 394h1M821 407h1M821 420h1M821 433h1M821 446h1M821 459h1M821 472h1M821 485h1M821 498h1M821 511h1M821 524h1M821 537h1M821 550h1M821 563h1M821 576h1M821 589h1M821 602h1M821 615h1M821 628h1M821 641h1M821 654h1M821 662h1M821 665h1M821 667h1M823 342h1M825 342h1M827 342h1M829 342h1M831 342h1M833 342h1M835 342h1M837 342h1M839 342h1M841 17h1M841 19h1M841 82h1M841 147h1M841 212h1M841 277h1M841 339h1M841 342h1M841 345h1M841 407h1M841 472h1M841 537h1M841 602h1M841 665h1M841 667h1M843 342h1M845 342h1M847 342h1M849 342h1M851 342h1M853 342h1M855 342h1M857 342h1M859 342h1M861 17h1M861 19h1M861 82h1M861 147h1M861 212h1M861 277h1M861 339h1M861 342h1M861 345h1M861 407h1M861 472h1M861 537h1M861 602h1M861 665h1M861 667h1M863 342h1M865 342h1M867 342h1M869 342h1M871 342h1M873 342h1M875 342h1M877 342h1M879 342h1M881 17h1M881 19h1M881 82h1M881 147h1M881 212h1M881 277h1M881 339h1M881 342h1M881 345h1M881 407h1M881 472h1M881 537h1M881 602h1M881 665h1M881 667h1M883 342h1M885 342h1M887 342h1M889 342h1M891 342h1M893 342h1M895 342h1M897 342h1M899 342h1M901 17h1M901 19h1M901 82h1M901 147h1M901 212h1M901 277h1M901 339h1M901 342h1M901 345h1M901 407h1M901 472h1M901 537h1M901 602h1M901 665h1M901 667h1M903 342h1M905 342h1M907 342h1M909 342h1M911 342h1M913 342h1M915 342h1M917 342h1M919 342h1M921 17h1M921 19h1M921 22h1M921 30h1M921 43h1M921 56h1M921 69h1M921 82h1M921 95h1M921 108h1M921 121h1M921 134h1M921 147h1M921 160h1M921 173h1M921 186h1M921 199h1M921 212h1M921 225h1M921 238h1M921 251h1M921 264h1M921 277h1M921 290h1M921 303h1M921 316h1M921 329h1M921 336h1M921 338h1M921 340h1M921 342h1M921 344h1M921 346h1M921 348h1M921 355h1M921 368h1M921 381h1M921 394h1M921 407h1M921 420h1M921 433h1M921 446h1M921 459h1M921 472h1M921 485h1M921 498h1M921 511h1M921 524h1M921 537h1M921 550h1M921 563h1M921 576h1M921 589h1M921 602h1M921 615h1M921 628h1M921 641h1M921 654h1M921 662h1M921 665h1M921 667h1M923 342h1M925 342h1M927 342h1M929 342h1M931 342h1M933 342h1M935 342h1M937 342h1M939 342h1M941 17h1M941 19h1M941 82h1M941 147h1M941 212h1M941 277h1M941 339h1M941 342h1M941 345h1M941 407h1M941 472h1M941 537h1M941 602h1M941 665h1M941 667h1M943 342h1M945 342h1M947 342h1M949 342h1M951 342h1M953 342h1M955 342h1M957 342h1M959 342h1M961 17h1M961 19h1M961 82h1M961 147h1M961 212h1M961 277h1M961 339h1M961 342h1M961 345h1M961 407h1M961 472h1M961 537h1M961 602h1M961 665h1M961 667h1M963 342h1M965 342h1M967 342h1M969 342h1M971 342h1M973 342h1M975 342h1M977 342h1M979 342h1M981 17h1M981 19h1M981 82h1M981 147h1M981 212h1M981 277h1M981 339h1M981 342h1M981 345h1M981 407h1M981 472h1M981 537h1M981 602h1M981 665h1M981 667h1M983 342h1M985 342h1M987 342h1M989 342h1M991 342h1M993 342h1M995 342h1M997 342h1M999 342h1M1001 17h1M1001 19h1M1001 82h1M1001 147h1M1001 212h1M1001 277h1M1001 339h1M1001 342h1M1001 345h1M1001 407h1M1001 472h1M1001 537h1M1001 602h1M1001 665h1M1001 667h1M1003 342h1M1005 342h1M1007 342h1M1009 342h1M1011 342h1M1013 342h1M1015 342h1M1016 82h1M1016 147h1M1016 212h1M1016 277h1M1016 407h1M1016 472h1M1016 537h1M1016 602h1M1017 342h1M1018 30h1M1018 43h1M1018 56h1M1018 69h1M1018 82h1M1018 95h1M1018 108h1M1018 121h1M1018 134h1M1018 147h1M1018 160h1M1018 173h1M1018 186h1M1018 199h1M1018 212h1M1018 225h1M1018 238h1M1018 251h1M1018 264h1M1018 277h1M1018 290h1M1018 303h1M1018 316h1M1018 329h1M1018 355h1M1018 368h1M1018 381h1M1018 394h1M1018 407h1M1018 420h1M1018 433h1M1018 446h1M1018 459h1M1018 472h1M1018 485h1M1018 498h1M1018 511h1M1018 524h1M1018 537h1M1018 550h1M1018 563h1M1018 576h1M1018 589h1M1018 602h1M1018 615h1M1018 628h1M1018 641h1M1018 654h1M1019 342h1M1020 30h1M1020 43h1M1020 56h1M1020 69h1M1020 82h1M1020 95h1M1020 108h1M1020 121h1M1020 134h1M1020 147h1M1020 160h1M1020 173h1M1020 186h1M1020 199h1M1020 212h1M1020 225h1M1020 238h1M1020 251h1M1020 264h1M1020 277h1M1020 290h1M1020 303h1M1020 316h1M1020 329h1M1020 355h1M1020 368h1M1020 381h1M1020 394h1M1020 407h1M1020 420h1M1020 433h1M1020 446h1M1020 459h1M1020 472h1M1020 485h1M1020 498h1M1020 511h1M1020 524h1M1020 537h1M1020 550h1M1020 563h1M1020 576h1M1020 589h1M1020 602h1M1020 615h1M1020 628h1M1020 641h1M1020 654h1" stroke="#bca880" stroke-width="1" fill="none" shape-rendering="crispEdges" transform="translate(0,0.5)"/>
<rect x="20" y="16" width="1002" height="1" fill="#5690d0"/>
<rect x="20" y="16" width="1" height="653" fill="#5690d0"/>
<rect x="1021" y="16" width="1" height="653" fill="#5690d0"/>
<rect x="20" y="668" width="1002" height="1" fill="#5690d0"/>
<rect x="121.5" y="0.5" width="799" height="15" fill="none" stroke="#5690d0" stroke-width="1"/>
<rect x="121" y="0" width="800" height="1" fill="#5690d0"/>
<rect x="283" y="6.7" width="478" height="1.5" fill="#00e8ec"/>
<path d="M281 1h3.2v2.4h-1.2v9.2h1.2v2.4h-3.2zM763 1h-3.2v2.4h1.2v9.2h-1.2v2.4h3.2z" fill="#b8a274"/>
<path d="M516 17h11l-5.5 6z" fill="#ff9000"/>
<path d="M517.6 1h7.6l-3.8 4.3z" fill="#ff9000"/>
<rect x="469" y="5" width="8" height="11" rx="1.5" fill="#ff9000"/><path d="M470.3 6.9h5.4" stroke="#000" stroke-width="1.3"/><path d="M473 6.5v8.2" stroke="#000" stroke-width="2"/>
<path d="M415 25.5q0-1.5 1.5-1.5h9q1.5 0 1.5 1.5v10.5l-6 3-6-3z" fill="#ff9000"/><path d="M416 26.5h10M421 27v9.5" stroke="#000" stroke-width="2" fill="none"/>
<rect x="253" y="17" width="1" height="651" fill="#00e8ec"/>
<rect x="299" y="17" width="1" height="651" fill="#00e8ec"/>
<path d="M23 342.5H1021" stroke="#00e8ec" stroke-width="1" stroke-dasharray="4 4" shape-rendering="crispEdges"/>
<path d="M23 580.5H1021" stroke="#00e8ec" stroke-width="1" stroke-dasharray="4 4" shape-rendering="crispEdges"/>
<rect x="246.5" y="335.5" width="14" height="14" fill="none" stroke="#00e8ec" stroke-width="1"/><rect x="246" y="342" width="15" height="1" fill="#00e8ec"/>
<circle cx="299.5" cy="580.5" r="7" fill="none" stroke="#00e8ec" stroke-width="1.2"/><rect x="292" y="580" width="15" height="1" fill="#00e8ec"/>
<circle cx="263" cy="30" r="8" fill="#ff4000"/>
<text x="258.3" y="35.5" textLength="9.3" lengthAdjust="spacingAndGlyphs" letter-spacing="0" font-family="Liberation Sans" font-size="19" font-weight="bold" fill="#000" stroke="#000" stroke-width="0" >a</text>
<circle cx="289" cy="30" r="8" fill="#ff4000"/>
<text x="284.5" y="35.6" textLength="9.5" lengthAdjust="spacingAndGlyphs" letter-spacing="0" font-family="Liberation Sans" font-size="16.2" font-weight="bold" fill="#000" stroke="#000" stroke-width="0" >b</text>
<path d="M1 76h12l7 7.5-7 7.5h-12z" fill="#000" stroke="#f4f400" stroke-width="1.4"/>
<path d="M5 80.6L7.8 78.2H9.7V88.8H7.6V80.8L5 82.8Z" fill="#f4f400"/>
<path d="M1 119h12l7 7.5-7 7.5h-12z" fill="#000" stroke="#e010e0" stroke-width="1.4"/>
<text x="4.0" y="132.0" textLength="7.0" lengthAdjust="spacingAndGlyphs" letter-spacing="0" font-family="Liberation Sans" font-size="15.4" font-weight="normal" fill="#e010e0" stroke="#e010e0" stroke-width="0.15" >3</text>
<defs><linearGradient id="cg" x1="0" y1="0" x2="0" y2="1"><stop offset="0" stop-color="#00ecec"/><stop offset="0.75" stop-color="#00e4e4"/><stop offset="1" stop-color="#00a8a8"/></linearGradient></defs>
<path d="M1 229h12l7 7.7-7 9.3h-12l-1-1v-15z" fill="url(#cg)"/>
<text x="3.6" y="242.8" textLength="7.6" lengthAdjust="spacingAndGlyphs" letter-spacing="0" font-family="Liberation Sans" font-size="15.2" font-weight="normal" fill="#000" stroke="#000" stroke-width="0.5" >2</text>
<path d="M1010 57.5l6-5.5v11z" fill="#f4f400"/><rect x="1015" y="57" width="6" height="1" fill="#f4f400"/>
<rect x="708.5" y="40.5" width="301" height="59" rx="5" fill="#020402" stroke="#e6e6f4" stroke-width="1"/>
<rect x="727.5" y="44.5" width="14" height="14" fill="none" stroke="#00e8ec"/>
<circle cx="734.5" cy="71.5" r="7" fill="none" stroke="#00e8ec" stroke-width="1.2"/>
<circle cx="755" cy="51.5" r="8" fill="#ff4000"/>
<text x="750.3" y="57.0" textLength="9.3" lengthAdjust="spacingAndGlyphs" letter-spacing="0" font-family="Liberation Sans" font-size="19" font-weight="bold" fill="#000" stroke="#000" stroke-width="0" >a</text>
<circle cx="755" cy="70.8" r="8" fill="#ff4000"/>
<text x="750.5" y="76.4" textLength="9.5" lengthAdjust="spacingAndGlyphs" letter-spacing="0" font-family="Liberation Sans" font-size="16.2" font-weight="bold" fill="#000" stroke="#000" stroke-width="0" >b</text>
<text transform="translate(784.2 56.5) scale(1.138 1)" textLength="66.1" lengthAdjust="spacing" font-family="Liberation Sans" font-size="14.7" font-weight="normal" fill="#00f0f4" stroke="#00f0f4" stroke-width="0.25" >−6.710µs</text>
<text transform="translate(911.5 56.5) scale(1.132 1)" textLength="72.6" lengthAdjust="spacing" font-family="Liberation Sans" font-size="14.7" font-weight="normal" fill="#00f0f4" stroke="#00f0f4" stroke-width="0.25" >−162.0mV</text>
<text transform="translate(784.2 75.0) scale(1.138 1)" textLength="66.1" lengthAdjust="spacing" font-family="Liberation Sans" font-size="14.7" font-weight="normal" fill="#00f0f4" stroke="#00f0f4" stroke-width="0.25" >−4.870µs</text>
<text transform="translate(911.5 75.0) scale(1.132 1)" textLength="72.6" lengthAdjust="spacing" font-family="Liberation Sans" font-size="14.7" font-weight="normal" fill="#00f0f4" stroke="#00f0f4" stroke-width="0.25" >−528.0mV</text>
<text transform="translate(795.5 94.0) scale(1.147 1)" textLength="57.1" lengthAdjust="spacing" font-family="Liberation Sans" font-size="14.7" font-weight="normal" fill="#00f0f4" stroke="#00f0f4" stroke-width="0.25" >1.840µs</text>
<text transform="translate(925.0 94.0) scale(1.114 1)" textLength="62.8" lengthAdjust="spacing" font-family="Liberation Sans" font-size="14.7" font-weight="normal" fill="#00f0f4" stroke="#00f0f4" stroke-width="0.25" >366.0mV</text>
<path d="M782.8 94l5.5-9.6 5.5 9.6z" fill="none" stroke="#00e8ec" stroke-width="1.4"/>
<path d="M911.3 94l5.5-9.6 5.5 9.6z" fill="none" stroke="#00e8ec" stroke-width="1.4"/>
<text x="0.3" y="14.8" textLength="30.3" lengthAdjust="spacingAndGlyphs" letter-spacing="1.3" font-family="Liberation Serif" font-size="20.5" font-weight="bold" fill="#f4f4ff" stroke="#f4f4ff" stroke-width="0.6" >Tek</text>
<text x="36.2" y="12.7" textLength="28.4" lengthAdjust="spacingAndGlyphs" letter-spacing="1.3" font-family="Liberation Sans" font-size="15.6" font-weight="normal" fill="#f4f4f4" stroke="#f4f4f4" stroke-width="0.45" >Run</text>
<text transform="translate(925.2 13.0) scale(1.078 1)" textLength="36.2" lengthAdjust="spacing" font-family="Liberation Sans" font-size="15.4" font-weight="normal" fill="#f4f4f4" stroke="#f4f4f4" stroke-width="0.45" >Trig?</text>
<rect x="20.5" y="670.5" width="554" height="20" rx="8" fill="none" stroke="#e0e0e0"/>
<rect x="26.0" y="673" width="25.0" height="16" rx="8" fill="#f4f400"/>
<path d="M35.3 678.7L38.3 675.8H40.3V686.2H38.1V678.4L35.3 680.8Z" fill="#000"/>
<text transform="translate(68.4 685.8) scale(1.040 1)" textLength="47.9" lengthAdjust="spacing" font-family="Liberation Sans" font-size="15.2" font-weight="normal" fill="#f4f400" stroke="#f4f400" stroke-width="0.45" >5.00 V</text>
<rect x="165.0" y="673" width="25.0" height="16" rx="8" fill="#00e8ec"/>
<text x="173.7" y="686.2" textLength="7.6" lengthAdjust="spacingAndGlyphs" letter-spacing="0" font-family="Liberation Sans" font-size="14.5" font-weight="bold" fill="#000" stroke="#000" stroke-width="0" >2</text>
<text transform="translate(208.9 685.8) scale(1.028 1)" textLength="51.2" lengthAdjust="spacing" font-family="Liberation Sans" font-size="15.2" font-weight="normal" fill="#00f0f4" stroke="#00f0f4" stroke-width="0.45" >100mV</text>
<rect x="304.0" y="673" width="25.0" height="16" rx="8" fill="#a800a8"/>
<text x="312.7" y="686.2" textLength="7.6" lengthAdjust="spacingAndGlyphs" letter-spacing="0" font-family="Liberation Sans" font-size="14.5" font-weight="bold" fill="#000" stroke="#000" stroke-width="0" >3</text>
<text transform="translate(346.6 685.8) scale(1.039 1)" textLength="47.8" lengthAdjust="spacing" font-family="Liberation Sans" font-size="15.2" font-weight="normal" fill="#b000b0" stroke="#b000b0" stroke-width="0.45" >5.00 V</text>
<rect x="582.5" y="670.5" width="147" height="37" rx="6" fill="none" stroke="#e0e0e0"/>
<text transform="translate(588.4 685.0) scale(1.123 1)" textLength="48.6" lengthAdjust="spacing" font-family="Liberation Sans" font-size="15" font-weight="normal" fill="#f4f4f4" stroke="#f4f4f4" stroke-width="0.45" >4.00µs</text>
<rect x="587" y="691" width="12" height="13.2" rx="1.8" fill="#ff9000"/><path d="M588.8 693.5h9.4M593.1 693.5v9.6" stroke="#000" stroke-width="2" fill="none"/><path d="M593.1 694v9.1" stroke="#000" stroke-width="2.7" fill="none"/>
<path d="M600 697.5h5" stroke="#ff9000" stroke-width="1.2" fill="none"/><path d="M604.6 694.2l4.6 3.3-4.6 3.3z" fill="#ff9000"/>
<path d="M610 693.8h11.2l-5.6 6.4z" fill="#ff9000"/>
<text transform="translate(621.8 702.3) scale(1.112 1)" textLength="85.1" lengthAdjust="spacing" font-family="Liberation Sans" font-size="15.2" font-weight="normal" fill="#ff9000" stroke="#ff9000" stroke-width="0.45" >4.010000µs</text>
<rect x="737.5" y="670.5" width="106" height="37" rx="6" fill="none" stroke="#e0e0e0"/>
<text transform="translate(743.7 685.0) scale(1.076 1)" textLength="65.5" lengthAdjust="spacing" font-family="Liberation Sans" font-size="15" font-weight="normal" fill="#f4f4f4" stroke="#f4f4f4" stroke-width="0.45" >2.50GS/s</text>
<text transform="translate(744.2 702.2) scale(1.131 1)" textLength="82.7" lengthAdjust="spacing" font-family="Liberation Sans" font-size="15" font-weight="normal" fill="#f4f4f4" stroke="#f4f4f4" stroke-width="0.45" >100k points</text>
<rect x="851.5" y="670.5" width="170" height="38" rx="6" fill="none" stroke="#e0e0e0"/>
<rect x="882.0" y="673" width="25.0" height="16" rx="8" fill="#f4f400"/>
<path d="M891.3 678.7L894.3 675.8H896.3V686.2H894.1V678.4L891.3 680.8Z" fill="#000"/>
<path d="M920 685h5.5l2.5-9h5" stroke="#f4f4f4" stroke-width="1.8" fill="none"/>
<text transform="translate(965.8 684.9) scale(1.070 1)" textLength="45.2" lengthAdjust="spacing" font-family="Liberation Sans" font-size="15" font-weight="normal" fill="#f4f4f4" stroke="#f4f4f4" stroke-width="0.45" >2.00 V</text>
<path d="M0 714.5h10.5q6.5 0 6.5 6.5V762q0 6-6 6.5H0z" fill="#00e8ec"/>
<text x="4.8" y="747.8" textLength="7.4" lengthAdjust="spacingAndGlyphs" letter-spacing="0" font-family="Liberation Sans" font-size="15.2" font-weight="normal" fill="#000" stroke="#000" stroke-width="0.5" >2</text>
<rect x="20.5" y="714.5" width="113" height="52.5" rx="4" fill="#565856" stroke="#6c6e6c" stroke-width="1"/>
<rect x="138.5" y="714.5" width="113" height="52.5" rx="4" fill="#565856" stroke="#6c6e6c" stroke-width="1"/>
<rect x="256.5" y="714.5" width="113" height="52.5" rx="4" fill="#565856" stroke="#6c6e6c" stroke-width="1"/>
<rect x="374.5" y="714.5" width="113" height="52.5" rx="4" fill="#565856" stroke="#6c6e6c" stroke-width="1"/>
<rect x="492.5" y="714.5" width="113" height="52.5" rx="4" fill="#565856" stroke="#6c6e6c" stroke-width="1"/>
<rect x="729.0" y="714.5" width="112.0" height="52.5" rx="4" fill="#565856" stroke="#6c6e6c" stroke-width="1"/>
<text transform="translate(41.6 732.8) scale(1.098 1)" textLength="65.7" lengthAdjust="spacing" font-family="Liberation Sans" font-size="15.7" font-weight="normal" fill="#f0f0f0" stroke="#f0f0f0" stroke-width="0.45" >Coupling</text>
<text transform="translate(146.6 732.8) scale(1.116 1)" textLength="86.8" lengthAdjust="spacing" font-family="Liberation Sans" font-size="15.7" font-weight="normal" fill="#f0f0f0" stroke="#f0f0f0" stroke-width="0.45" >Termination</text>
<text transform="translate(289.2 732.8) scale(1.138 1)" textLength="42.4" lengthAdjust="spacing" font-family="Liberation Sans" font-size="15.7" font-weight="normal" fill="#f0f0f0" stroke="#f0f0f0" stroke-width="0.45" >Invert</text>
<text transform="translate(389.3 737.8) scale(1.089 1)" textLength="77.3" lengthAdjust="spacing" font-family="Liberation Sans" font-size="15.7" font-weight="normal" fill="#f0f0f0" stroke="#f0f0f0" stroke-width="0.45" >Bandwidth</text>
<text x="546.8" y="746.4" textLength="38.2" lengthAdjust="spacingAndGlyphs" letter-spacing="1.3" font-family="Liberation Sans" font-size="15.7" font-weight="normal" fill="#f0f0f0" stroke="#f0f0f0" stroke-width="0.45" >Label</text>
<text transform="translate(766.5 752.3) scale(1.052 1)" textLength="37.0" lengthAdjust="spacing" font-family="Liberation Sans" font-size="15.7" font-weight="normal" fill="#f0f0f0" stroke="#f0f0f0" stroke-width="0.45" >More</text>
<rect x="33.5" y="742.5" width="29.0" height="25" rx="3.5" fill="#1a70f8" stroke="#9cc0ff" stroke-width="1"/>
<text x="38.5" y="759.7" textLength="20.7" lengthAdjust="spacingAndGlyphs" letter-spacing="1.3" font-family="Liberation Sans" font-size="15.7" font-weight="normal" fill="#fff" stroke="#fff" stroke-width="0.45" >DC</text>
<text x="95.1" y="759.7" textLength="21.5" lengthAdjust="spacingAndGlyphs" letter-spacing="1.3" font-family="Liberation Sans" font-size="15.7" font-weight="normal" fill="#f0f0f0" stroke="#f0f0f0" stroke-width="0.45" >AC</text>
<rect x="143.5" y="742.5" width="46.0" height="25" rx="3.5" fill="#1a70f8" stroke="#9cc0ff" stroke-width="1"/>
<text transform="translate(149.5 759.7) scale(1.035 1)" textLength="34.3" lengthAdjust="spacing" font-family="Liberation Sans" font-size="15.7" font-weight="normal" fill="#fff" stroke="#fff" stroke-width="0.45" >1MΩ</text>
<text transform="translate(207.6 759.7) scale(1.037 1)" textLength="29.9" lengthAdjust="spacing" font-family="Liberation Sans" font-size="15.7" font-weight="normal" fill="#f0f0f0" stroke="#f0f0f0" stroke-width="0.45" >50Ω</text>
<text transform="translate(272.8 759.7) scale(1.050 1)" textLength="21.6" lengthAdjust="spacing" font-family="Liberation Sans" font-size="15.7" font-weight="normal" fill="#f0f0f0" stroke="#f0f0f0" stroke-width="0.45" >On</text>
<rect x="325.5" y="742.5" width="32.5" height="25" rx="3.5" fill="#1a70f8" stroke="#9cc0ff" stroke-width="1"/>
<text transform="translate(329.7 759.7) scale(1.109 1)" textLength="22.0" lengthAdjust="spacing" font-family="Liberation Sans" font-size="15.7" font-weight="normal" fill="#fff" stroke="#fff" stroke-width="0.45" >Off</text>
<rect x="414" y="742" width="34" height="16" fill="#1a70f8"/>
<text transform="translate(417.4 755.0) scale(1.078 1)" textLength="26.5" lengthAdjust="spacing" font-family="Liberation Sans" font-size="15.7" font-weight="normal" fill="#fff" stroke="#fff" stroke-width="0.45" >Full</text>
<rect x="514" y="733" width="25.5" height="16" rx="8" fill="#00e8ec"/>
<text x="523.0" y="746.2" textLength="7.2" lengthAdjust="spacingAndGlyphs" letter-spacing="0" font-family="Liberation Sans" font-size="14.5" font-weight="bold" fill="#000" stroke="#000" stroke-width="0.45" >2</text>
<defs><linearGradient id="tg" x1="0" y1="0" x2="0" y2="1"><stop offset="0" stop-color="#fff"/><stop offset="1" stop-color="#b8b8b8"/></linearGradient></defs>
<path d="M785 727l11.5 10.5h-23z" fill="url(#tg)"/>
<rect x="909.5" y="729.5" width="112" height="36" rx="6" fill="none" stroke="#e0e0e0"/>
<text transform="translate(916.8 745.4) scale(1.122 1)" textLength="88.8" lengthAdjust="spacing" font-family="Liberation Sans" font-size="14.6" font-weight="normal" fill="#f4f4f4" stroke="#f4f4f4" stroke-width="0.45" >17 Nov 2022</text>
<text transform="translate(916.0 761.2) scale(1.137 1)" textLength="61.4" lengthAdjust="spacing" font-family="Liberation Sans" font-size="14.6" font-weight="normal" fill="#f4f4f4" stroke="#f4f4f4" stroke-width="0.45" >00:24:43</text>
</svg>
</body></html>
